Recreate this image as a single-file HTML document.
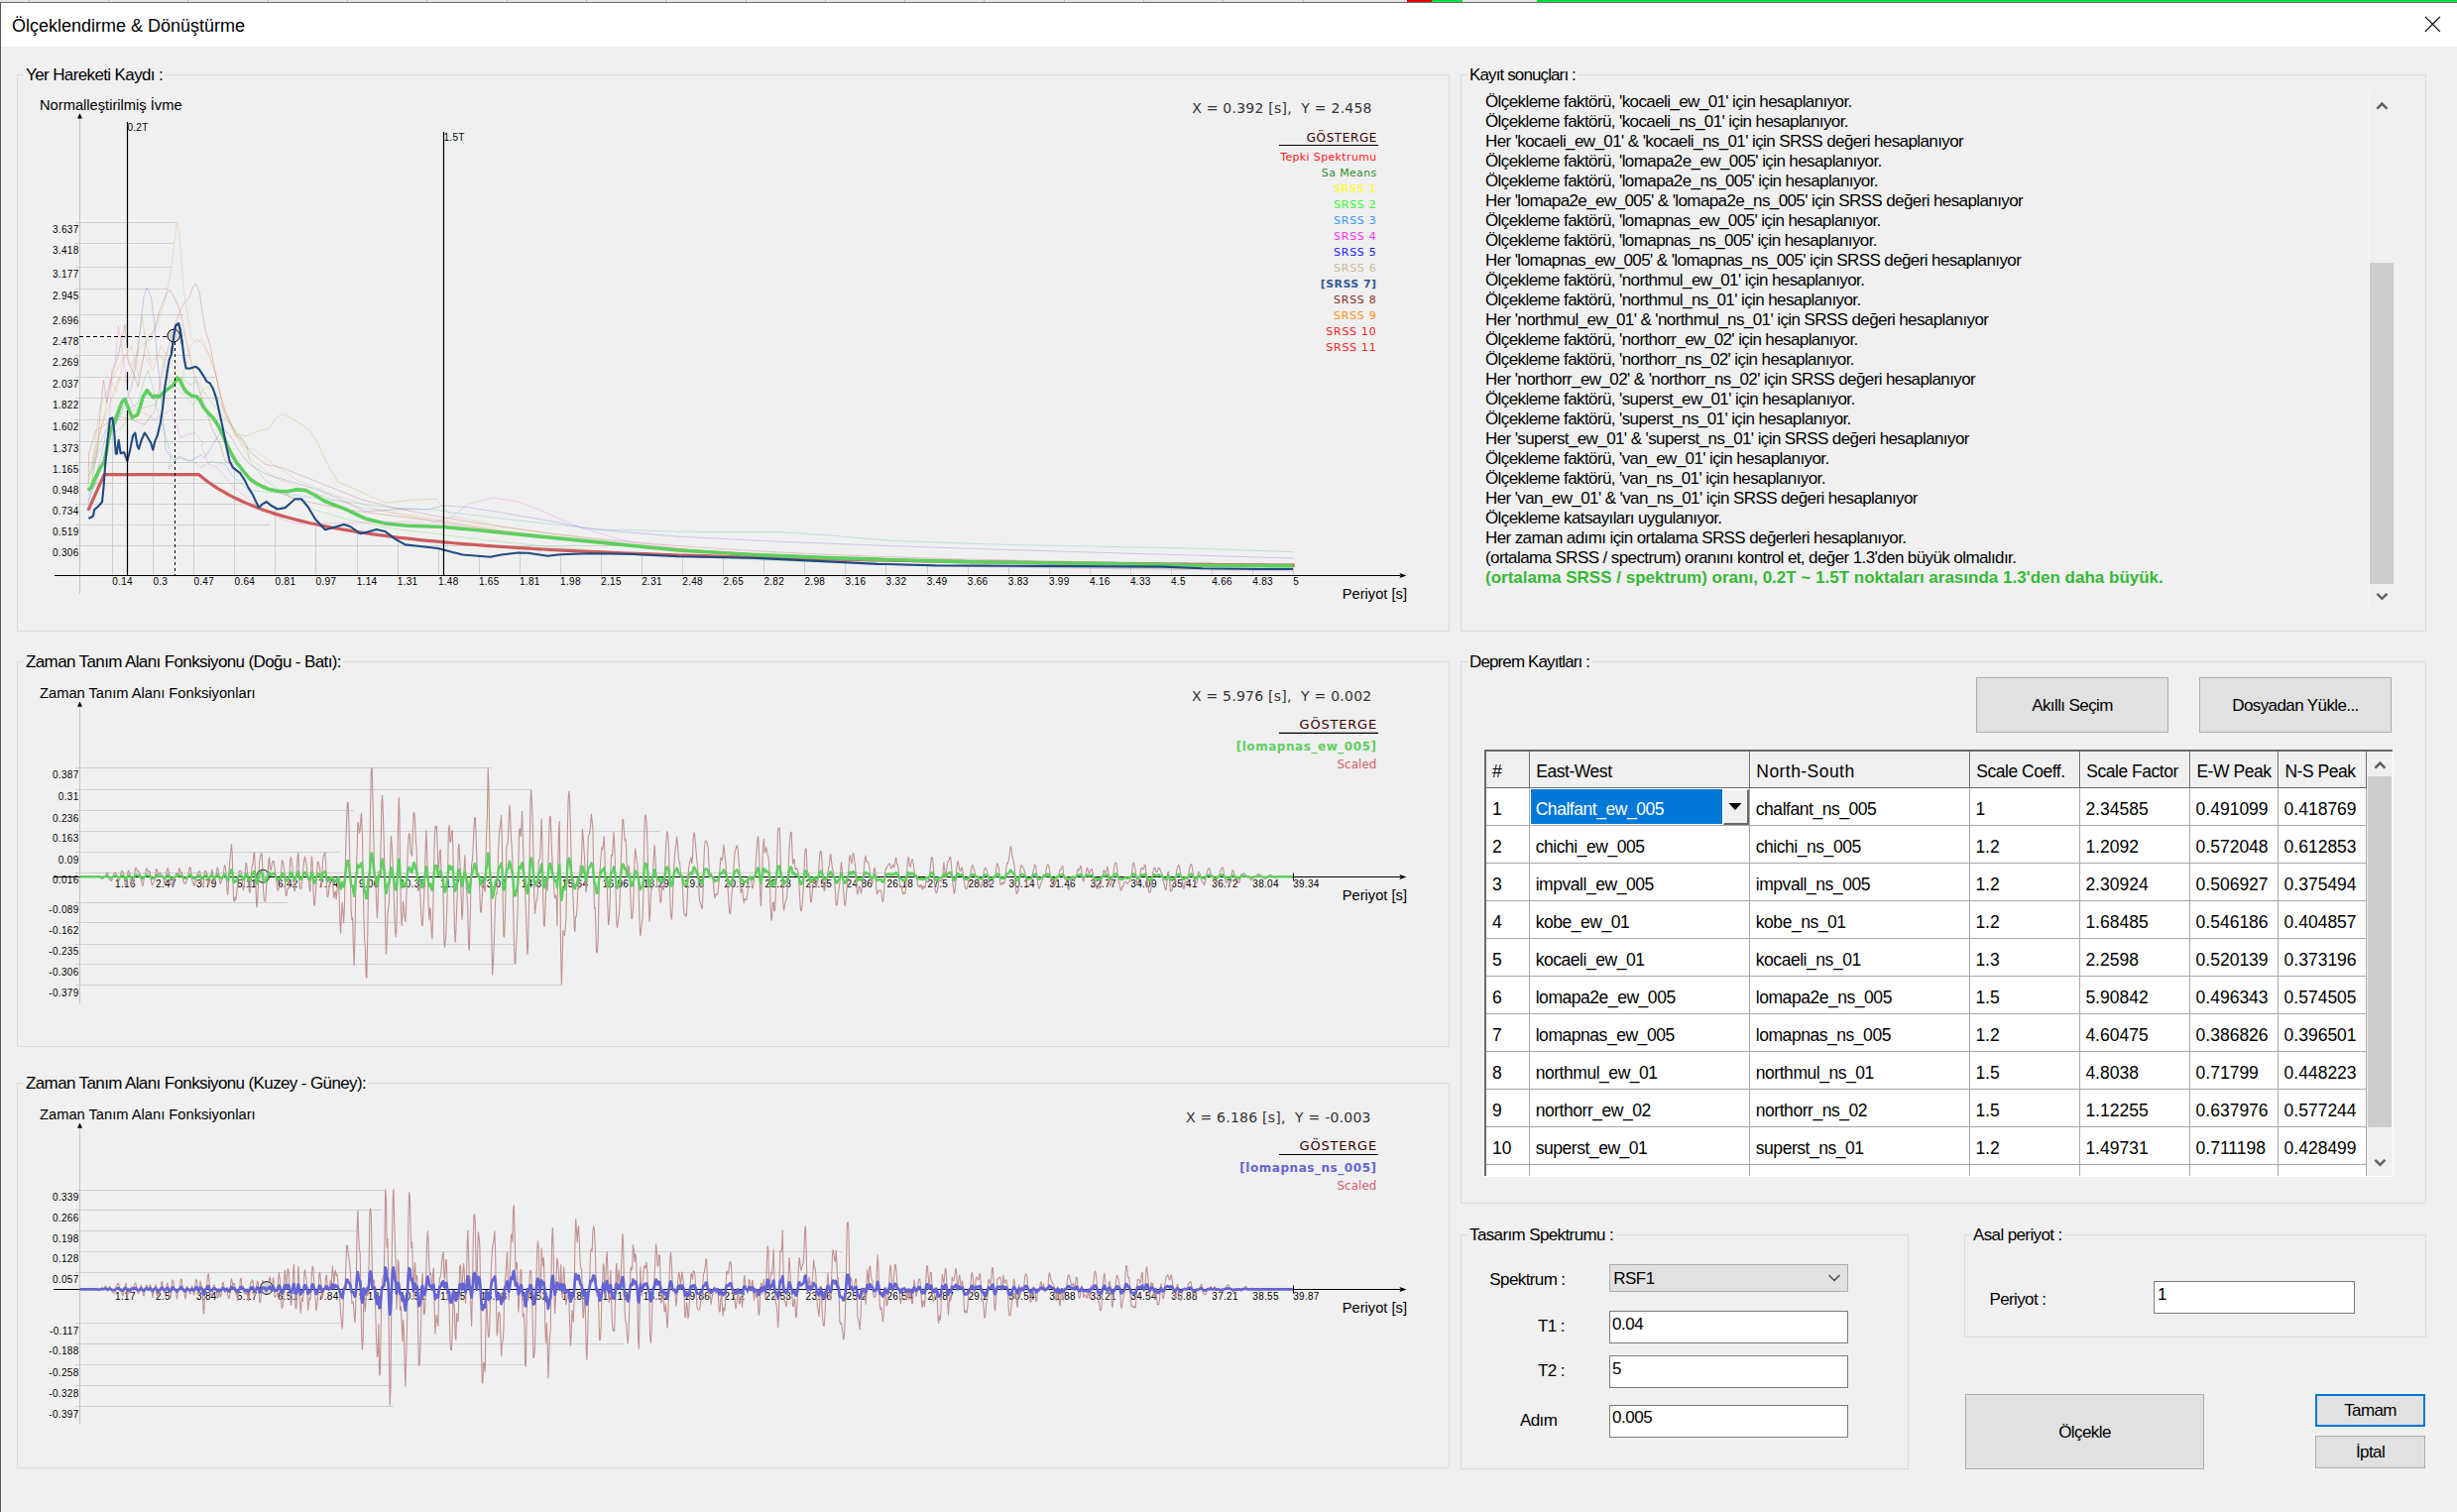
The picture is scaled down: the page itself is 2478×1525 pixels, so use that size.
<!DOCTYPE html>
<html lang="tr"><head><meta charset="utf-8"><title>Ölçeklendirme &amp; Dönüştürme</title>
<style>
html,body{margin:0;padding:0}
body{width:2478px;height:1525px;overflow:hidden;background:#f0f0f0;position:relative;font-family:'Liberation Sans',sans-serif;color:#000}
.t{position:absolute;white-space:pre;margin:0}
.abs,.gb,.btn,.inp,.ln{position:absolute;box-sizing:border-box;margin:0;padding:0}
.gb{border:1px solid #dcdcdc;min-width:0}
.gl{position:absolute;background:#f0f0f0;white-space:pre;font-size:17px;line-height:19px;height:19px;letter-spacing:-0.62px;padding:0 2px 0 2px}
.btn{background:#e1e1e1;border:1px solid #adadad}
.inp{background:#fff;border:1px solid #7a7a7a}
.chart{overflow:hidden}
svg text{white-space:pre}
#log .t{letter-spacing:-0.6px}
#grid{position:absolute;left:1497px;top:756px;width:917px;height:431px;background:#fff;overflow:hidden;box-sizing:border-box}
#grid .c{position:absolute;white-space:pre;font-size:17.5px;line-height:20px;height:20px}
#grid .n{letter-spacing:-0.46px}
.hl{position:absolute;height:1px;background:#a8a8a8}
.vl{position:absolute;width:1px;background:#a8a8a8}
</style></head><body>
<div class="abs" style="left:0;top:0;width:2478px;height:2px;background:#e4e4e4"></div>
<div class="abs" style="left:29px;top:0;width:1px;height:2px;background:#b8b8c0"></div>
<div class="abs" style="left:109px;top:0;width:1px;height:2px;background:#b8b8c0"></div>
<div class="abs" style="left:189px;top:0;width:1px;height:2px;background:#b8b8c0"></div>
<div class="abs" style="left:270px;top:0;width:1px;height:2px;background:#b8b8c0"></div>
<div class="abs" style="left:350px;top:0;width:1px;height:2px;background:#b8b8c0"></div>
<div class="abs" style="left:430px;top:0;width:1px;height:2px;background:#b8b8c0"></div>
<div class="abs" style="left:511px;top:0;width:1px;height:2px;background:#b8b8c0"></div>
<div class="abs" style="left:591px;top:0;width:1px;height:2px;background:#b8b8c0"></div>
<div class="abs" style="left:671px;top:0;width:1px;height:2px;background:#b8b8c0"></div>
<div class="abs" style="left:752px;top:0;width:1px;height:2px;background:#b8b8c0"></div>
<div class="abs" style="left:832px;top:0;width:1px;height:2px;background:#b8b8c0"></div>
<div class="abs" style="left:912px;top:0;width:1px;height:2px;background:#b8b8c0"></div>
<div class="abs" style="left:992px;top:0;width:1px;height:2px;background:#b8b8c0"></div>
<div class="abs" style="left:1073px;top:0;width:1px;height:2px;background:#b8b8c0"></div>
<div class="abs" style="left:1153px;top:0;width:1px;height:2px;background:#b8b8c0"></div>
<div class="abs" style="left:1233px;top:0;width:1px;height:2px;background:#b8b8c0"></div>
<div class="abs" style="left:1314px;top:0;width:1px;height:2px;background:#b8b8c0"></div>
<div class="abs" style="left:1419px;top:0;width:25px;height:2px;background:#e00000"></div>
<div class="abs" style="left:1444px;top:0;width:31px;height:2px;background:#00dc3c"></div>
<div class="abs" style="left:1550px;top:0;width:928px;height:2px;background:#00dc3c"></div>
<div class="abs" style="left:0;top:2px;width:2478px;height:1px;background:#6e6e6e"></div>
<div id="titlebar" class="abs" style="left:1px;top:3px;width:2477px;height:44px;background:#fff"></div>
<div class="t" style="top:16px;font-size:18px;line-height:20px;left:12px;">Ölçeklendirme &amp; Dönüştürme</div>
<svg class="abs" style="left:2440px;top:12px" width="26" height="26" viewBox="0 0 26 26"><path d="M5.9 4.9 L20.9 19.9 M20.9 4.9 L5.9 19.9" stroke="#000" stroke-width="1.25" fill="none"/></svg>
<div class="abs" style="left:0;top:2px;width:1px;height:1523px;background:#5a5a5a"></div>
<div class="gb" style="left:17px;top:75px;width:1445px;height:562px"></div>
<div class="gl" style="left:24px;top:66px">Yer Hareketi Kaydı :</div>
<div class="gb" style="left:1473px;top:75px;width:974px;height:562px"></div>
<div class="gl" style="left:1480px;top:66px;letter-spacing:-0.88px">Kayıt sonuçları :</div>
<div class="gb" style="left:17px;top:667px;width:1445px;height:389px"></div>
<div class="gl" style="left:24px;top:658px">Zaman Tanım Alanı Fonksiyonu (Doğu - Batı):</div>
<div class="gb" style="left:1473px;top:667px;width:974px;height:547px"></div>
<div class="gl" style="left:1480px;top:658px;letter-spacing:-0.88px">Deprem Kayıtları :</div>
<div class="gb" style="left:17px;top:1092px;width:1445px;height:389px"></div>
<div class="gl" style="left:24px;top:1083px">Zaman Tanım Alanı Fonksiyonu (Kuzey - Güney):</div>
<div class="gb" style="left:1473px;top:1245px;width:452px;height:237px"></div>
<div class="gl" style="left:1480px;top:1236px">Tasarım Spektrumu :</div>
<div class="gb" style="left:1981px;top:1245px;width:466px;height:104px"></div>
<div class="gl" style="left:1988px;top:1236px">Asal periyot :</div>
<svg class="chart" style="position:absolute;left:18px;top:84px" width="1443" height="550" viewBox="18 84 1443 550">
<line x1="76" y1="224.5" x2="177" y2="224.5" stroke="#cfcfcf"/>
<line x1="76" y1="245.5" x2="175" y2="245.5" stroke="#cfcfcf"/>
<line x1="76" y1="269.5" x2="173" y2="269.5" stroke="#cfcfcf"/>
<line x1="76" y1="291.5" x2="170" y2="291.5" stroke="#cfcfcf"/>
<line x1="76" y1="317.5" x2="185" y2="317.5" stroke="#cfcfcf"/>
<line x1="76" y1="358.5" x2="193" y2="358.5" stroke="#cfcfcf"/>
<line x1="76" y1="380.5" x2="217" y2="380.5" stroke="#cfcfcf"/>
<line x1="76" y1="401.5" x2="222" y2="401.5" stroke="#cfcfcf"/>
<line x1="76" y1="423.5" x2="227" y2="423.5" stroke="#cfcfcf"/>
<line x1="76" y1="445.5" x2="232" y2="445.5" stroke="#cfcfcf"/>
<line x1="76" y1="466.5" x2="237" y2="466.5" stroke="#cfcfcf"/>
<line x1="76" y1="487.5" x2="246" y2="487.5" stroke="#cfcfcf"/>
<line x1="76" y1="508.5" x2="262" y2="508.5" stroke="#cfcfcf"/>
<line x1="76" y1="529.5" x2="272" y2="529.5" stroke="#cfcfcf"/>
<line x1="76" y1="550.5" x2="646" y2="550.5" stroke="#cfcfcf"/>
<line x1="113.5" y1="423.2" x2="113.5" y2="580" stroke="#cfcfcf"/>
<line x1="154.5" y1="452.0" x2="154.5" y2="580" stroke="#cfcfcf"/>
<line x1="195.5" y1="380.0" x2="195.5" y2="580" stroke="#cfcfcf"/>
<line x1="236.5" y1="473.1" x2="236.5" y2="580" stroke="#cfcfcf"/>
<line x1="277.5" y1="512.3" x2="277.5" y2="580" stroke="#cfcfcf"/>
<line x1="318.5" y1="524.6" x2="318.5" y2="580" stroke="#cfcfcf"/>
<line x1="360.5" y1="535.8" x2="360.5" y2="580" stroke="#cfcfcf"/>
<line x1="401.5" y1="545.1" x2="401.5" y2="580" stroke="#cfcfcf"/>
<line x1="442.5" y1="553.2" x2="442.5" y2="580" stroke="#cfcfcf"/>
<line x1="483.5" y1="560.9" x2="483.5" y2="580" stroke="#cfcfcf"/>
<line x1="524.5" y1="557.6" x2="524.5" y2="580" stroke="#cfcfcf"/>
<line x1="565.5" y1="559.3" x2="565.5" y2="580" stroke="#cfcfcf"/>
<line x1="606.5" y1="558.4" x2="606.5" y2="580" stroke="#cfcfcf"/>
<line x1="647.5" y1="559.5" x2="647.5" y2="580" stroke="#cfcfcf"/>
<line x1="688.5" y1="561.4" x2="688.5" y2="580" stroke="#cfcfcf"/>
<line x1="729.5" y1="562.2" x2="729.5" y2="580" stroke="#cfcfcf"/>
<line x1="770.5" y1="563.3" x2="770.5" y2="580" stroke="#cfcfcf"/>
<line x1="811.5" y1="565.3" x2="811.5" y2="580" stroke="#cfcfcf"/>
<line x1="852.5" y1="567.2" x2="852.5" y2="580" stroke="#cfcfcf"/>
<line x1="893.5" y1="569.0" x2="893.5" y2="580" stroke="#cfcfcf"/>
<line x1="935.5" y1="570.2" x2="935.5" y2="580" stroke="#cfcfcf"/>
<line x1="976.5" y1="570.6" x2="976.5" y2="580" stroke="#cfcfcf"/>
<line x1="1017.5" y1="570.8" x2="1017.5" y2="580" stroke="#cfcfcf"/>
<line x1="1058.5" y1="571.0" x2="1058.5" y2="580" stroke="#cfcfcf"/>
<line x1="1099.5" y1="571.2" x2="1099.5" y2="580" stroke="#cfcfcf"/>
<line x1="1140.5" y1="571.4" x2="1140.5" y2="580" stroke="#cfcfcf"/>
<line x1="1181.5" y1="572.0" x2="1181.5" y2="580" stroke="#cfcfcf"/>
<line x1="1222.5" y1="573.4" x2="1222.5" y2="580" stroke="#cfcfcf"/>
<line x1="1263.5" y1="573.9" x2="1263.5" y2="580" stroke="#cfcfcf"/>
<line x1="1304.5" y1="574.0" x2="1304.5" y2="580" stroke="#cfcfcf"/>
<line x1="80.5" y1="118" x2="80.5" y2="599" stroke="#c4c4c4"/>
<path d="M80.5 114.3 L83 119.5 L78 119.5 Z" fill="#000"/>
<polyline fill="none" stroke="#d2b48c" stroke-opacity="0.36" stroke-width="1" points="88.9,470 91.7,468 94.6,458 99.5,415 109.5,390.2 117.7,373.6 126,357.1 132.6,368.7 142.5,348.8 152.4,342.2 159.1,325.7 165.7,305.8 170.6,282.7 173.9,262.8 176.4,241.3 178.6,224.5 180.6,234.7 182.5,257.9 185.5,292.6 188.8,315.8 193,342.2 198.7,345.5 202.9,342.2 207,348.8 212,362.1 218.6,381.9 225.2,408.4 235.1,431.5 246.7,451.3 256.5,453.7 276.1,468.4 300.5,484.7 333,497.7 381.9,514 440,527 468.8,531.5 497.6,535.6 526.5,539.3 555.3,542.6 584.1,545.6 612.9,548.3 641.7,550.7 670.6,552.8 699.4,554.8 728.2,556.5 757,558.1 785.8,559.5 814.7,560.8 843.5,561.9 872.3,562.9 901.1,563.8 929.9,564.7 958.8,565.4 987.6,566.1 1016.4,566.7 1045.2,567.2 1074,567.7 1102.9,568.1 1131.7,568.5 1160.5,568.9 1189.3,569.2 1218.1,569.5 1247,569.7 1275.8,570 1304.6,570.2"/>
<polyline fill="none" stroke="#5a5ad2" stroke-opacity="0.28" stroke-width="1" points="88.9,505 97.5,485.5 106.1,458 114.4,431.5 122.7,415 132.6,390.2 137.6,365.4 141.7,329 145,299.2 148.3,290.1 152.4,299.2 155.8,325.7 158.2,357.1 161.5,390.2 164,418.3 166.5,444.7 167,453.7 170.2,457.8 175.1,464.3 181.6,460.6 191.4,465.1 202.8,458.9 206.1,461.9 212.6,452.1 219.1,441.5 225.6,432.6 232.1,439.1 240.2,453.7 251.6,468.4 267.9,478.1 317.9,493.2 343.1,503.3 368.3,515.9 406.2,513.4 431.4,513.9 446.5,510.1 469.3,511.3 507.1,517.1 557.6,526 595.4,533.6 683.7,541.1 784.7,546.2 900,550.7 1000,554 1100,557 1200,560 1304.6,563"/>
<polyline fill="none" stroke="#a52a2a" stroke-opacity="0.24" stroke-width="1" points="88.9,480 93.4,473 97.9,458 101.2,415 104.5,383.5 107.8,406.7 112.8,378.6 119.4,357.1 126,327.3 129.3,365.4 134.3,375.3 139.2,390.2 147.5,343.9 155.8,332.3 160.7,314.1 167.3,297.6 171.5,292.3 177.2,302.5 182.2,315.8 188.8,348.8 197.1,381.9 205.4,406.7 213.6,431.5 221.9,448 227.2,465.1 243.5,476.5 267.9,491.2 300.5,504.2 349.3,514 398.2,520.5 440,525.4 468.8,530.2 497.6,534.5 526.5,538.4 555.3,541.9 584.1,545 612.9,547.9 641.7,550.4 670.6,552.7 699.4,554.8 728.2,556.6 757,558.3 785.8,559.8 814.7,561.1 843.5,562.3 872.3,563.4 901.1,564.4 929.9,565.2 958.8,566 987.6,566.7 1016.4,567.4 1045.2,567.9 1074,568.4 1102.9,568.9 1131.7,569.3 1160.5,569.7 1189.3,570 1218.1,570.3 1247,570.6 1275.8,570.8 1304.6,571.1"/>
<polyline fill="none" stroke="#b03030" stroke-opacity="0.24" stroke-width="1" points="88.9,495 89.3,480.5 89.6,458 96.2,434.8 106.1,428.2 119.4,419.9 132.6,423.2 145.8,428.2 155.8,415 165.7,365.4 172.3,340.6 180.6,315.8 185.5,305.8 190.5,300.9 194.6,289.3 197.1,286 201.2,294.3 203.7,312.4 207,332.3 212,348.8 215.3,365.4 220.2,390.2 226.9,415 238.4,439.8 243.5,442.3 251.6,455.4 267.9,468.4 284.2,471.6 308.6,481.4 333,491.2 365.6,504.2 398.2,512.3 440,520.5 468.8,525.6 497.6,530.2 526.5,534.3 555.3,538 584.1,541.4 612.9,544.4 641.7,547.1 670.6,549.5 699.4,551.7 728.2,553.6 757,555.4 785.8,557 814.7,558.4 843.5,559.7 872.3,560.8 901.1,561.8 929.9,562.8 958.8,563.6 987.6,564.3 1016.4,565 1045.2,565.6 1074,566.2 1102.9,566.7 1131.7,567.1 1160.5,567.5 1189.3,567.8 1218.1,568.2 1247,568.5 1275.8,568.7 1304.6,568.9"/>
<polyline fill="none" stroke="#e040e0" stroke-opacity="0.22" stroke-width="1" points="88.9,500 95.9,483 102.8,458 107.8,431.5 111.1,415 112.8,373.6 116.1,365.4 119.4,329 122.7,348.8 126,373.6 129.3,398.4 134.3,408.4 142.5,415 155.8,423.2 172.3,413.3 182.2,441.4 188.8,438.1 197.1,436.5 205.4,448 202.8,448.8 210.9,468.4 219.1,471.6 235.4,491.2 259.8,510.7 284.2,523.7 300.5,528.6 406.2,526 431.4,528.5 456.6,520.9 471.8,508.3 497,502 522.2,505.8 545,514.6 570.2,526 590.4,533.6 633.3,546.2 709,556.3 809.9,565.1 900,568.9 1000,572 1304.6,576"/>
<polyline fill="none" stroke="#b8b040" stroke-opacity="0.32" stroke-width="1" points="88.9,488 91.7,477 94.6,458 102.8,428.2 111.1,406.7 119.4,381.9 129.3,385.2 135.9,367 139.2,348.8 143.3,319.1 147.5,348.8 152.4,365.4 159.1,358.7 164,360.4 169,381.9 177.2,390.2 185.5,398.4 195.4,408.4 205.4,391.8 210.3,390.2 218.6,398.4 230.2,423.2 238.4,438.1 248.4,439.8 259.9,434.8 271.5,432.3 278.1,421.6 284.7,417.4 293,421.6 304.6,428.2 312.8,434.8 321.1,448 324.9,457 333,473.3 341.2,486.3 357.5,492.8 373.7,500.9 390,507.4 414.4,504.2 440,503.4 444,508.3 456.6,520.9 507.1,531 557.6,538.6 633.3,548.7 734.2,557.5 900,565.1 1000,570 1304.6,575"/>
<polyline fill="none" stroke="#40b0b0" stroke-opacity="0.28" stroke-width="1" points="88.9,510 92.6,488 96.2,458 106.1,434.8 114.4,423.2 126,415 139.2,406.7 145.8,381.9 149.1,373.6 154.1,390.2 159.1,415 165.7,434.8 172.3,458 170.2,473.3 178.4,461.9 194.7,465.1 202.8,471.6 212.6,465.1 227.2,468.4 235.4,481.4 251.6,494.4 284.2,497.7 333,504.2 398.2,512.3 440,514 456.6,517.1 532.3,526 608,534.1 709,536.6 784.7,536.6 835.1,539.9 900,545.4 1000,549 1100,551 1200,553 1304.6,556.7"/>
<polyline fill="none" stroke="#40c040" stroke-opacity="0.24" stroke-width="1" points="88.9,497 93.4,481.5 97.9,458 109.5,439.8 122.7,431.5 132.6,415 142.5,411.7 155.8,408.4 165.7,390.2 175.6,381.9 182.2,380.2 192.1,388.5 198.7,383.5 205.4,395.1 215.3,408.4 225.2,419.9 238.4,434.8 248.4,448 251.6,465.1 267.9,484.7 292.3,500.9 316.8,514 349.3,523.7 398.2,533.5 440,538.4 468.8,542.2 497.6,545.6 526.5,548.7 555.3,551.4 584.1,553.9 612.9,556.2 641.7,558.2 670.6,560 699.4,561.6 728.2,563.1 757,564.4 785.8,565.5 814.7,566.6 843.5,567.5 872.3,568.4 901.1,569.2 929.9,569.9 958.8,570.5 987.6,571 1016.4,571.5 1045.2,572 1074,572.4 1102.9,572.8 1131.7,573.1 1160.5,573.4 1189.3,573.7 1218.1,573.9 1247,574.1 1275.8,574.3 1304.6,574.5"/>
<polyline fill="none" stroke="#e09040" stroke-opacity="0.24" stroke-width="1" points="88.9,476 92.6,471 96.2,458 106.1,415 111.1,381.9 117.7,395.1 124.3,363.7 132.6,348.8 139.2,378.6 145.8,357.1 154.1,373.6 162.4,348.8 172.3,365.4 182.2,390.2 192.1,348.8 198.7,342.2 205.4,348.8 212,358.7 218.6,381.9 225.2,415 235.1,434.8 245,451.3 251.6,461.9 276.1,481.4 316.8,497.7 365.6,512.3 440,523.7 468.8,528.8 497.6,533.4 526.5,537.5 555.3,541.2 584.1,544.5 612.9,547.5 641.7,550.2 670.6,552.6 699.4,554.8 728.2,556.7 757,558.4 785.8,560 814.7,561.4 843.5,562.7 872.3,563.9 901.1,564.9 929.9,565.8 958.8,566.6 987.6,567.4 1016.4,568 1045.2,568.6 1074,569.2 1102.9,569.7 1131.7,570.1 1160.5,570.5 1189.3,570.9 1218.1,571.2 1247,571.5 1275.8,571.7 1304.6,572"/>
<polyline fill="none" stroke="#cd5c5c" stroke-width="3.2" stroke-linejoin="round" points="88.9,514.8 105.1,478.6 200.4,478.6 205.3,482.6 210.2,486.2 215.1,489.6 220,492.8 224.9,495.7 229.8,498.5 234.7,501.1 239.6,503.5 244.5,505.8 249.4,507.9 254.3,510 259.2,511.9 264.1,513.7 269,515.4 273.9,517.1 278.8,518.6 283.8,520.1 288.7,521.5 293.6,522.8 298.5,524.1 303.4,525.4 308.3,526.5 313.2,527.7 318.1,528.7 323,529.8 327.9,530.8 332.8,531.7 337.7,532.7 342.6,533.5 347.5,534.4 352.4,535.2 357.3,536 362.2,536.8 367.1,537.5 372,538.2 376.9,538.9 381.8,539.6 386.7,540.2 391.6,540.9 396.5,541.5 401.4,542.1 406.4,542.6 411.3,543.2 416.2,543.7 421.1,544.3 426,544.8 430.9,545.3 435.8,545.7 440.7,546.2 445.6,546.7 450.5,547.1 455.4,547.5 460.3,548 465.2,548.4 470.1,548.8 475,549.2 479.9,549.5 484.8,549.9 489.7,550.3 494.6,550.6 499.5,551 504.4,551.3 509.3,551.6 514.2,552 519.1,552.3 524,552.6 529,552.9 533.9,553.2 538.8,553.5 543.7,553.8 548.6,554 553.5,554.3 558.4,554.6 563.3,554.8 568.2,555.1 573.1,555.3 578,555.6 582.9,555.8 587.8,556.1 592.7,556.3 597.6,556.5 602.5,556.7 607.4,556.9 612.3,557.2 617.2,557.4 622.1,557.6 627,557.8 631.9,558 636.8,558.2 641.7,558.4 646.6,558.6 651.6,558.7 656.5,558.9 661.4,559.1 666.3,559.3 671.2,559.5 676.1,559.6 681,559.8 685.9,560 690.8,560.1 695.7,560.3 700.6,560.4 705.5,560.6 710.4,560.7 715.3,560.9 720.2,561 725.1,561.2 730,561.3 734.9,561.5 739.8,561.6 744.7,561.7 749.6,561.9 754.5,562 759.4,562.1 764.3,562.3 769.2,562.4 774.2,562.5 779.1,562.7 784,562.8 788.9,562.9 793.8,563 798.7,563.1 803.6,563.2 808.5,563.4 813.4,563.5 818.3,563.6 823.2,563.7 828.1,563.8 833,563.9 837.9,564 842.8,564.1 847.7,564.2 852.6,564.3 857.5,564.4 862.4,564.5 867.3,564.6 872.2,564.7 877.1,564.8 882,564.9 886.9,565 891.8,565.1 896.8,565.2 901.7,565.3 906.6,565.4 911.5,565.4 916.4,565.5 921.3,565.6 926.2,565.7 931.1,565.8 936,565.9 940.9,566 945.8,566 950.7,566.1 955.6,566.2 960.5,566.3 965.4,566.3 970.3,566.4 975.2,566.5 980.1,566.6 985,566.6 989.9,566.7 994.8,566.8 999.7,566.9 1004.6,566.9 1009.5,567 1014.4,567.1 1019.4,567.1 1024.3,567.2 1029.2,567.3 1034.1,567.3 1039,567.4 1043.9,567.5 1048.8,567.5 1053.7,567.6 1058.6,567.7 1063.5,567.7 1068.4,567.8 1073.3,567.9 1078.2,567.9 1083.1,568 1088,568 1092.9,568.1 1097.8,568.1 1102.7,568.2 1107.6,568.3 1112.5,568.3 1117.4,568.4 1122.3,568.4 1127.2,568.5 1132.1,568.5 1137,568.6 1142,568.6 1146.9,568.7 1151.8,568.8 1156.7,568.8 1161.6,568.9 1166.5,568.9 1171.4,569 1176.3,569 1181.2,569.1 1186.1,569.1 1191,569.2 1195.9,569.2 1200.8,569.3 1205.7,569.3 1210.6,569.3 1215.5,569.4 1220.4,569.4 1225.3,569.5 1230.2,569.5 1235.1,569.6 1240,569.6 1244.9,569.7 1249.8,569.7 1254.7,569.8 1259.6,569.8 1264.6,569.8 1269.5,569.9 1274.4,569.9 1279.3,570 1284.2,570 1289.1,570.1 1294,570.1 1298.9,570.1 1303.8,570.2 1305.6,570.2"/>
<polyline fill="none" stroke="#5fce5f" stroke-width="3.6" stroke-linejoin="round" points="88.7,494.4 91.9,492.1 95.9,482.5 100.6,473 105.4,465.1 107.8,452.4 111,434.9 115.7,425.4 119.7,414.3 122.9,405.6 126,402.4 129.2,411.1 133.2,421 138.7,418.3 141.1,411.1 144.3,400 148.3,393.7 151.4,397.6 154.6,400.8 157,399.2 160.2,400.3 164.1,396.8 169.7,392.1 175.2,388.1 178.7,381 181.6,383.3 184.8,390.5 187.9,395.2 193.5,399.2 197.5,399.7 201.4,403.2 205.4,411.1 210.2,416.7 214.9,421.4 219.7,428.6 224.4,438.1 229.2,449.2 234,458.7 238.7,466.7 245.1,474.6 251.4,482.5 257.8,487.3 264.1,490.5 270.5,493.3 280,495.2 290.1,495.7 297.7,493.9 307.8,494.4 317.9,499.5 327.9,505.8 348.1,513.4 368.3,523 388.5,528 411.2,530.3 446.5,531.5 481.9,534.8 532.3,539.9 608,547.4 683.7,555 759.4,559.5 835.1,562.6 885.6,564.1 894.2,564.5 986.2,566.9 1116.1,568.5 1210.5,570.2 1304.2,570.9"/>
<polyline fill="none" stroke="#1f4a82" stroke-width="2.1" stroke-linejoin="round" points="89.5,523 94,520.3 95.1,514.3 99,510.8 103,506.3 104.6,490.5 106.2,468.3 108.6,442.9 111,422.2 113.3,421.4 114.9,431.7 116.8,457.1 117.8,457.9 119.7,443.7 121.6,457.1 125.2,456.3 128.4,464.8 130.8,455.6 134,439.7 136.3,436.5 138.4,449.2 140,452.7 142.7,443.7 145.9,436.5 149,441.3 152.2,446.8 154.3,453.7 156.2,445.2 158.6,439.7 161.7,427 164.1,411.1 166.5,388.9 170.5,363.5 172.9,357.1 175.2,339.7 177.1,328.6 180,326.2 181.6,331.7 184,347.6 186,363.5 187.6,371.4 191.1,371.7 197.5,369.8 200.6,372.2 205.4,379.4 208.6,384.9 211.7,386.5 214.9,392.1 218.1,401.6 221.3,415.9 224.4,430.2 228.4,450.8 231.6,465.1 234.8,471.4 238.7,474.6 241.9,477 246.7,484.1 250.6,492.1 254.6,498.4 261,511.9 264.9,508.3 268.9,506 272.9,509.5 280,513.5 287.6,512.1 297.7,503.3 304,503.3 310.3,510.8 317.9,523.5 327.9,534.3 335.5,532.3 346.9,529 353.2,531 363.3,538.1 370.8,536.6 379.7,534.1 388.5,536.1 398.6,543.6 408.7,549.4 421.3,550.7 441.5,553 456.6,557 466.7,559.5 481.9,560.8 494.5,561.8 507.1,559.3 522.2,557.5 532.3,557.8 552.5,560.8 565.1,559.3 595.4,558.3 633.3,558.8 683.7,561.3 759.4,562.8 835.1,566.4 885.6,568.9 894.2,569 943.7,570.4 1045.3,570.9 1172.7,571.6 1212.9,573.2 1271.9,574 1304.2,574"/>
<line x1="55" y1="580.5" x2="1412" y2="580.5" stroke="#000"/>
<path d="M1418.5 580.5 L1411.5 577.9 L1412.5 580.5 L1411.5 583.1 Z" fill="#000"/>
<text x="113.3" y="590.4" font-family="'Liberation Sans',sans-serif" font-size="10" fill="#000" letter-spacing="0.3">0.14</text>
<text x="154.4" y="590.4" font-family="'Liberation Sans',sans-serif" font-size="10" fill="#000" letter-spacing="0.3">0.3</text>
<text x="195.4" y="590.4" font-family="'Liberation Sans',sans-serif" font-size="10" fill="#000" letter-spacing="0.3">0.47</text>
<text x="236.5" y="590.4" font-family="'Liberation Sans',sans-serif" font-size="10" fill="#000" letter-spacing="0.3">0.64</text>
<text x="277.6" y="590.4" font-family="'Liberation Sans',sans-serif" font-size="10" fill="#000" letter-spacing="0.3">0.81</text>
<text x="318.6" y="590.4" font-family="'Liberation Sans',sans-serif" font-size="10" fill="#000" letter-spacing="0.3">0.97</text>
<text x="359.7" y="590.4" font-family="'Liberation Sans',sans-serif" font-size="10" fill="#000" letter-spacing="0.3">1.14</text>
<text x="400.8" y="590.4" font-family="'Liberation Sans',sans-serif" font-size="10" fill="#000" letter-spacing="0.3">1.31</text>
<text x="441.9" y="590.4" font-family="'Liberation Sans',sans-serif" font-size="10" fill="#000" letter-spacing="0.3">1.48</text>
<text x="482.9" y="590.4" font-family="'Liberation Sans',sans-serif" font-size="10" fill="#000" letter-spacing="0.3">1.65</text>
<text x="524.0" y="590.4" font-family="'Liberation Sans',sans-serif" font-size="10" fill="#000" letter-spacing="0.3">1.81</text>
<text x="565.1" y="590.4" font-family="'Liberation Sans',sans-serif" font-size="10" fill="#000" letter-spacing="0.3">1.98</text>
<text x="606.1" y="590.4" font-family="'Liberation Sans',sans-serif" font-size="10" fill="#000" letter-spacing="0.3">2.15</text>
<text x="647.2" y="590.4" font-family="'Liberation Sans',sans-serif" font-size="10" fill="#000" letter-spacing="0.3">2.31</text>
<text x="688.3" y="590.4" font-family="'Liberation Sans',sans-serif" font-size="10" fill="#000" letter-spacing="0.3">2.48</text>
<text x="729.4" y="590.4" font-family="'Liberation Sans',sans-serif" font-size="10" fill="#000" letter-spacing="0.3">2.65</text>
<text x="770.4" y="590.4" font-family="'Liberation Sans',sans-serif" font-size="10" fill="#000" letter-spacing="0.3">2.82</text>
<text x="811.5" y="590.4" font-family="'Liberation Sans',sans-serif" font-size="10" fill="#000" letter-spacing="0.3">2.98</text>
<text x="852.6" y="590.4" font-family="'Liberation Sans',sans-serif" font-size="10" fill="#000" letter-spacing="0.3">3.16</text>
<text x="893.6" y="590.4" font-family="'Liberation Sans',sans-serif" font-size="10" fill="#000" letter-spacing="0.3">3.32</text>
<text x="934.7" y="590.4" font-family="'Liberation Sans',sans-serif" font-size="10" fill="#000" letter-spacing="0.3">3.49</text>
<text x="975.8" y="590.4" font-family="'Liberation Sans',sans-serif" font-size="10" fill="#000" letter-spacing="0.3">3.66</text>
<text x="1016.8" y="590.4" font-family="'Liberation Sans',sans-serif" font-size="10" fill="#000" letter-spacing="0.3">3.83</text>
<text x="1057.9" y="590.4" font-family="'Liberation Sans',sans-serif" font-size="10" fill="#000" letter-spacing="0.3">3.99</text>
<text x="1099.0" y="590.4" font-family="'Liberation Sans',sans-serif" font-size="10" fill="#000" letter-spacing="0.3">4.16</text>
<text x="1140.0" y="590.4" font-family="'Liberation Sans',sans-serif" font-size="10" fill="#000" letter-spacing="0.3">4.33</text>
<text x="1181.1" y="590.4" font-family="'Liberation Sans',sans-serif" font-size="10" fill="#000" letter-spacing="0.3">4.5</text>
<text x="1222.2" y="590.4" font-family="'Liberation Sans',sans-serif" font-size="10" fill="#000" letter-spacing="0.3">4.66</text>
<text x="1263.3" y="590.4" font-family="'Liberation Sans',sans-serif" font-size="10" fill="#000" letter-spacing="0.3">4.83</text>
<text x="1304.3" y="590.4" font-family="'Liberation Sans',sans-serif" font-size="10" fill="#000" letter-spacing="0.3">5</text>
<text x="79.5" y="235.2" font-family="'Liberation Sans',sans-serif" font-size="10" fill="#000" text-anchor="end" letter-spacing="0.3">3.637</text>
<text x="79.5" y="255.7" font-family="'Liberation Sans',sans-serif" font-size="10" fill="#000" text-anchor="end" letter-spacing="0.3">3.418</text>
<text x="79.5" y="279.7" font-family="'Liberation Sans',sans-serif" font-size="10" fill="#000" text-anchor="end" letter-spacing="0.3">3.177</text>
<text x="79.5" y="302.0" font-family="'Liberation Sans',sans-serif" font-size="10" fill="#000" text-anchor="end" letter-spacing="0.3">2.945</text>
<text x="79.5" y="327.3" font-family="'Liberation Sans',sans-serif" font-size="10" fill="#000" text-anchor="end" letter-spacing="0.3">2.696</text>
<text x="79.5" y="369.1" font-family="'Liberation Sans',sans-serif" font-size="10" fill="#000" text-anchor="end" letter-spacing="0.3">2.269</text>
<text x="79.5" y="390.9" font-family="'Liberation Sans',sans-serif" font-size="10" fill="#000" text-anchor="end" letter-spacing="0.3">2.037</text>
<text x="79.5" y="411.9" font-family="'Liberation Sans',sans-serif" font-size="10" fill="#000" text-anchor="end" letter-spacing="0.3">1.822</text>
<text x="79.5" y="434.0" font-family="'Liberation Sans',sans-serif" font-size="10" fill="#000" text-anchor="end" letter-spacing="0.3">1.602</text>
<text x="79.5" y="455.8" font-family="'Liberation Sans',sans-serif" font-size="10" fill="#000" text-anchor="end" letter-spacing="0.3">1.373</text>
<text x="79.5" y="477.0" font-family="'Liberation Sans',sans-serif" font-size="10" fill="#000" text-anchor="end" letter-spacing="0.3">1.165</text>
<text x="79.5" y="498.1" font-family="'Liberation Sans',sans-serif" font-size="10" fill="#000" text-anchor="end" letter-spacing="0.3">0.948</text>
<text x="79.5" y="519.0" font-family="'Liberation Sans',sans-serif" font-size="10" fill="#000" text-anchor="end" letter-spacing="0.3">0.734</text>
<text x="79.5" y="540.1" font-family="'Liberation Sans',sans-serif" font-size="10" fill="#000" text-anchor="end" letter-spacing="0.3">0.519</text>
<text x="79.5" y="561.0" font-family="'Liberation Sans',sans-serif" font-size="10" fill="#000" text-anchor="end" letter-spacing="0.3">0.306</text>
<text x="79.5" y="348.0" font-family="'Liberation Sans',sans-serif" font-size="10" fill="#000" text-anchor="end" letter-spacing="0.3">2.478</text>
<line x1="128.5" y1="123" x2="128.5" y2="351" stroke="#000" stroke-width="1.2"/>
<line x1="128.5" y1="375" x2="128.5" y2="393.5" stroke="#000" stroke-width="1.2"/>
<line x1="128.5" y1="414" x2="128.5" y2="580" stroke="#000" stroke-width="1.2"/>
<line x1="447.5" y1="133" x2="447.5" y2="580" stroke="#000" stroke-width="1.2"/>
<text x="128.4" y="132" font-family="'Liberation Sans',sans-serif" font-size="10" fill="#000" letter-spacing="0.3">0.2T</text>
<text x="447.5" y="142" font-family="'Liberation Sans',sans-serif" font-size="10" fill="#000" letter-spacing="0.3">1.5T</text>
<line x1="80" y1="339.5" x2="169" y2="339.5" stroke="#000" stroke-dasharray="4 3"/>
<line x1="176.5" y1="345" x2="176.5" y2="580" stroke="#000" stroke-dasharray="3 3"/>
<circle cx="175.2" cy="338.5" r="6.3" fill="#d4d4d4" fill-opacity="0.85" stroke="#000"/>
<polyline fill="none" stroke="#1f4a82" stroke-width="2.1" stroke-linejoin="round" points="172.9,357.1 175.2,339.7 177.1,328.6 180,326.2 181.6,331.7 184,347.6"/>
<text x="40" y="110.5" font-family="'Liberation Sans',sans-serif" font-size="14.7" fill="#000">Normalleştirilmiş İvme</text>
<text x="1419" y="604" font-family="'Liberation Sans',sans-serif" font-size="14.7" fill="#000" text-anchor="end">Periyot [s]</text>
<text x="1202.2" y="113.7" font-family="'DejaVu Sans',sans-serif" font-size="14" fill="#333" letter-spacing="0.24" xml:space="preserve">X = 0.392 [s],  Y = 2.458</text>
<text x="1389" y="142.8" font-family="'DejaVu Sans',sans-serif" font-size="12" fill="#3a0000" text-anchor="end" letter-spacing="0.6">GÖSTERGE</text>
<line x1="1290" y1="146.5" x2="1390" y2="146.5" stroke="#000" stroke-width="1.2"/>
<text x="1388.6" y="161.9" font-family="'DejaVu Sans',sans-serif" font-size="11" fill="#ff2020" text-anchor="end" letter-spacing="0.35">Tepki Spektrumu</text>
<text x="1388.6" y="177.9" font-family="'DejaVu Sans',sans-serif" font-size="11" fill="#2e8b2e" text-anchor="end" letter-spacing="0.35">Sa Means</text>
<text x="1388.6" y="193.9" font-family="'DejaVu Sans',sans-serif" font-size="11" fill="#ffff00" text-anchor="end" letter-spacing="0.75">SRSS 1</text>
<text x="1388.6" y="209.9" font-family="'DejaVu Sans',sans-serif" font-size="11" fill="#2dff2d" text-anchor="end" letter-spacing="0.75">SRSS 2</text>
<text x="1388.6" y="225.8" font-family="'DejaVu Sans',sans-serif" font-size="11" fill="#3c96ff" text-anchor="end" letter-spacing="0.75">SRSS 3</text>
<text x="1388.6" y="241.8" font-family="'DejaVu Sans',sans-serif" font-size="11" fill="#ff30ff" text-anchor="end" letter-spacing="0.75">SRSS 4</text>
<text x="1388.6" y="257.8" font-family="'DejaVu Sans',sans-serif" font-size="11" fill="#2020ff" text-anchor="end" letter-spacing="0.75">SRSS 5</text>
<text x="1388.6" y="273.8" font-family="'DejaVu Sans',sans-serif" font-size="11" fill="#cbb9a0" text-anchor="end" letter-spacing="0.75">SRSS 6</text>
<text x="1388.6" y="289.8" font-family="'DejaVu Sans',sans-serif" font-size="11" fill="#2f5b8f" text-anchor="end" font-weight="bold" letter-spacing="0.45">[SRSS 7]</text>
<text x="1388.6" y="305.8" font-family="'DejaVu Sans',sans-serif" font-size="11" fill="#8b2a2a" text-anchor="end" letter-spacing="0.75">SRSS 8</text>
<text x="1388.6" y="321.8" font-family="'DejaVu Sans',sans-serif" font-size="11" fill="#ff9020" text-anchor="end" letter-spacing="0.75">SRSS 9</text>
<text x="1388.6" y="337.7" font-family="'DejaVu Sans',sans-serif" font-size="11" fill="#ff2020" text-anchor="end" letter-spacing="0.75">SRSS 10</text>
<text x="1388.6" y="353.7" font-family="'DejaVu Sans',sans-serif" font-size="11" fill="#ff2020" text-anchor="end" letter-spacing="0.75">SRSS 11</text>
</svg>
<svg class="chart" style="position:absolute;left:18px;top:678px" width="1443" height="378" viewBox="18 678 1443 378">
<line x1="76" y1="774.5" x2="496" y2="774.5" stroke="#cfcfcf"/>
<line x1="76" y1="796.5" x2="535" y2="796.5" stroke="#cfcfcf"/>
<line x1="76" y1="817.5" x2="357" y2="817.5" stroke="#cfcfcf"/>
<line x1="76" y1="838.5" x2="666" y2="838.5" stroke="#cfcfcf"/>
<line x1="76" y1="859.5" x2="343" y2="859.5" stroke="#cfcfcf"/>
<line x1="76" y1="880.5" x2="903" y2="880.5" stroke="#cfcfcf"/>
<line x1="76" y1="910.5" x2="290" y2="910.5" stroke="#cfcfcf"/>
<line x1="76" y1="930.5" x2="404" y2="930.5" stroke="#cfcfcf"/>
<line x1="76" y1="952.5" x2="518" y2="952.5" stroke="#cfcfcf"/>
<line x1="76" y1="972.5" x2="518" y2="972.5" stroke="#cfcfcf"/>
<line x1="76" y1="993.5" x2="566" y2="993.5" stroke="#cfcfcf"/>
<line x1="80.5" y1="711.9" x2="80.5" y2="1012.3" stroke="#c4c4c4"/>
<path d="M80.5 707.5 L83 712.6999999999999 L78 712.6999999999999 Z" fill="#000"/>
<line x1="54" y1="884.5" x2="1412" y2="884.5" stroke="#000"/>
<path d="M1418.5 884.5 L1411.5 881.9 L1412.5 884.5 L1411.5 887.1 Z" fill="#000"/>
<line x1="1304.5" y1="880.5" x2="1304.5" y2="888.5" stroke="#000"/>
<text x="116.1" y="894.5" font-family="'Liberation Sans',sans-serif" font-size="10" fill="#000" letter-spacing="0.3">1.16</text>
<text x="157.1" y="894.5" font-family="'Liberation Sans',sans-serif" font-size="10" fill="#000" letter-spacing="0.3">2.47</text>
<text x="198.0" y="894.5" font-family="'Liberation Sans',sans-serif" font-size="10" fill="#000" letter-spacing="0.3">3.79</text>
<text x="239.0" y="894.5" font-family="'Liberation Sans',sans-serif" font-size="10" fill="#000" letter-spacing="0.3">5.11</text>
<text x="280.0" y="894.5" font-family="'Liberation Sans',sans-serif" font-size="10" fill="#000" letter-spacing="0.3">6.42</text>
<text x="320.9" y="894.5" font-family="'Liberation Sans',sans-serif" font-size="10" fill="#000" letter-spacing="0.3">7.74</text>
<text x="361.9" y="894.5" font-family="'Liberation Sans',sans-serif" font-size="10" fill="#000" letter-spacing="0.3">9.06</text>
<text x="402.9" y="894.5" font-family="'Liberation Sans',sans-serif" font-size="10" fill="#000" letter-spacing="0.3">10.38</text>
<text x="443.9" y="894.5" font-family="'Liberation Sans',sans-serif" font-size="10" fill="#000" letter-spacing="0.3">11.7</text>
<text x="484.8" y="894.5" font-family="'Liberation Sans',sans-serif" font-size="10" fill="#000" letter-spacing="0.3">13.01</text>
<text x="525.8" y="894.5" font-family="'Liberation Sans',sans-serif" font-size="10" fill="#000" letter-spacing="0.3">14.33</text>
<text x="566.8" y="894.5" font-family="'Liberation Sans',sans-serif" font-size="10" fill="#000" letter-spacing="0.3">15.64</text>
<text x="607.7" y="894.5" font-family="'Liberation Sans',sans-serif" font-size="10" fill="#000" letter-spacing="0.3">16.96</text>
<text x="648.7" y="894.5" font-family="'Liberation Sans',sans-serif" font-size="10" fill="#000" letter-spacing="0.3">18.29</text>
<text x="689.7" y="894.5" font-family="'Liberation Sans',sans-serif" font-size="10" fill="#000" letter-spacing="0.3">19.6</text>
<text x="730.6" y="894.5" font-family="'Liberation Sans',sans-serif" font-size="10" fill="#000" letter-spacing="0.3">20.91</text>
<text x="771.6" y="894.5" font-family="'Liberation Sans',sans-serif" font-size="10" fill="#000" letter-spacing="0.3">22.23</text>
<text x="812.6" y="894.5" font-family="'Liberation Sans',sans-serif" font-size="10" fill="#000" letter-spacing="0.3">23.55</text>
<text x="853.6" y="894.5" font-family="'Liberation Sans',sans-serif" font-size="10" fill="#000" letter-spacing="0.3">24.86</text>
<text x="894.5" y="894.5" font-family="'Liberation Sans',sans-serif" font-size="10" fill="#000" letter-spacing="0.3">26.18</text>
<text x="935.5" y="894.5" font-family="'Liberation Sans',sans-serif" font-size="10" fill="#000" letter-spacing="0.3">27.5</text>
<text x="976.5" y="894.5" font-family="'Liberation Sans',sans-serif" font-size="10" fill="#000" letter-spacing="0.3">28.82</text>
<text x="1017.4" y="894.5" font-family="'Liberation Sans',sans-serif" font-size="10" fill="#000" letter-spacing="0.3">30.14</text>
<text x="1058.4" y="894.5" font-family="'Liberation Sans',sans-serif" font-size="10" fill="#000" letter-spacing="0.3">31.46</text>
<text x="1099.4" y="894.5" font-family="'Liberation Sans',sans-serif" font-size="10" fill="#000" letter-spacing="0.3">32.77</text>
<text x="1140.3" y="894.5" font-family="'Liberation Sans',sans-serif" font-size="10" fill="#000" letter-spacing="0.3">34.09</text>
<text x="1181.3" y="894.5" font-family="'Liberation Sans',sans-serif" font-size="10" fill="#000" letter-spacing="0.3">35.41</text>
<text x="1222.3" y="894.5" font-family="'Liberation Sans',sans-serif" font-size="10" fill="#000" letter-spacing="0.3">36.72</text>
<text x="1263.3" y="894.5" font-family="'Liberation Sans',sans-serif" font-size="10" fill="#000" letter-spacing="0.3">38.04</text>
<text x="1304.2" y="894.5" font-family="'Liberation Sans',sans-serif" font-size="10" fill="#000" letter-spacing="0.3">39.34</text>
<polyline fill="none" stroke="#c09292" stroke-width="1.1" stroke-linejoin="bevel" points="80.4,884.3 81.2,884.3 81.9,884.3 82.6,884.4 83.4,884.4 84.2,884.3 84.9,884.3 85.6,884.2 86.4,884.2 87.2,884.1 87.9,884 88.6,883.9 89.4,883.9 90.2,884.1 90.9,884.2 91.6,884.2 92.4,884.4 93.2,884.6 93.9,884.7 94.6,884.8 95.4,884.7 96.2,884.4 96.9,884.1 97.6,883.9 98.4,883.7 99.2,883.6 99.9,884.4 100.6,885.1 101.4,885.2 102.2,885.4 102.9,886.4 103.6,886.4 104.4,885.2 105.2,884.6 105.9,884.3 106.6,882.8 107.4,880.3 108.2,879.7 108.9,881.9 109.6,885.2 110.4,887.5 111.2,887.6 111.9,887.5 112.6,888.7 113.4,885.6 114.2,883.3 114.9,881.6 115.6,879.7 116.4,880 117.2,881.5 117.9,883.4 118.6,885.7 119.4,887.9 120.2,888.1 120.9,886.8 121.6,883.7 122.4,879.1 123.2,878.4 123.9,879.3 124.6,880.7 125.4,887.3 126.2,892.4 126.9,893.5 127.6,890 128.4,883.7 129.2,878.6 129.9,877.9 130.6,880.3 131.4,883.7 132.2,890.4 132.9,893.5 133.6,890.7 134.4,889 135.2,886.5 135.9,880 136.6,875.6 137.4,875.4 138.2,878 138.9,879.3 139.6,878.2 140.4,879.3 141.2,882 141.9,884.4 142.6,888.3 143.4,892.4 144.2,893.3 144.9,889 145.6,884.3 146.4,883.7 147.2,878.5 147.9,875.7 148.6,877.5 149.4,879.6 150.2,878.6 150.9,878.1 151.6,882.3 152.4,888.4 153.2,892.5 153.9,892.4 154.6,890 155.4,889 156.2,887 156.9,881.3 157.6,876.5 158.4,877.2 159.2,881.3 159.9,882 160.6,881.1 161.4,879.9 162.2,881.2 162.9,882.2 163.6,883.5 164.4,884.6 165.2,887.5 165.9,891.9 166.6,891.4 167.4,884.8 168.2,878.4 168.9,875.7 169.6,876.3 170.4,880.1 171.2,885.1 171.9,890 172.6,892.4 173.4,892 174.2,890 174.9,887.2 175.6,887.1 176.4,887.1 177.2,882.6 177.9,880.1 178.6,881.8 179.4,882.9 180.2,878.4 180.9,875.1 181.6,878.2 182.4,880.6 183.2,879.3 183.9,882.7 184.6,887.5 185.4,890 186.2,891.1 186.9,891.6 187.6,890.3 188.4,887.4 189.2,885.6 189.9,883.5 190.6,878.1 191.4,874.3 192.2,875.6 192.9,880.7 193.6,887.4 194.4,890.4 195.2,889.3 195.9,893.3 196.6,893.5 197.4,888.1 198.2,883.9 198.9,882.2 199.6,880.4 200.4,879.1 201.2,878.8 201.9,879.8 202.6,885.8 203.4,892.7 204.2,892.7 204.9,892.4 205.6,887.2 206.4,879 207.2,878 207.9,879.3 208.6,880.7 209.4,887.7 210.2,892.8 210.9,890.2 211.6,886.1 212.4,883 213.2,880.7 213.9,876.9 214.6,881.5 215.4,890.4 216.2,891.6 216.9,887.4 217.6,884.5 218.4,880.2 219.2,874.8 219.9,876.1 220.6,881.7 221.4,887.7 222.2,891.5 222.9,890.3 223.6,887.9 224.4,886.6 225.2,883.2 225.9,875.6 226.6,872.4 227.4,875.1 228.2,883.1 228.9,896.7 229.6,902.8 230.4,894 231.2,876.6 231.9,866.9 232.6,861.2 233.4,851.3 234.2,860.8 234.9,886.7 235.6,906.6 236.4,909.7 237.2,904.5 237.9,907.5 238.6,901.9 239.4,894.2 240.2,886.6 240.9,880.3 241.6,878.2 242.4,878.1 243.2,879.1 243.9,884.2 244.6,892 245.4,898.2 246.2,892.1 246.9,882.9 247.6,874.3 248.4,870 249.2,875.4 249.9,886.9 250.6,893.4 251.4,899.2 252.2,900.5 252.9,890 253.6,879.9 254.4,873 255.2,869.8 255.9,860.7 256.6,859.7 257.4,878.1 258.2,902.4 258.9,915.3 259.6,910.3 260.4,893.6 261.2,877.3 261.9,867.4 262.6,863.9 263.4,860.5 264.2,862.1 264.9,877.2 265.6,898.7 266.4,907.5 267.2,909.3 267.9,908.7 268.6,894.5 269.4,887.6 270.2,880.2 270.9,868.4 271.6,864.4 272.4,874.4 273.2,878.1 273.9,873.9 274.6,869.9 275.4,867.9 276.2,869.1 276.9,875.2 277.6,880 278.4,884.7 279.2,893.2 279.9,898.1 280.6,897.7 281.4,895.3 282.2,894.5 282.9,891.3 283.6,879.3 284.4,867.7 285.2,868.7 285.9,871.8 286.6,876.4 287.4,891 288.2,902.2 288.9,903.9 289.6,898.7 290.4,895.3 291.2,896.4 291.9,885.5 292.6,868.3 293.4,864.1 294.2,868.9 294.9,875 295.6,883 296.4,894.5 297.2,899.3 297.9,893.9 298.6,885.4 299.4,876 300.2,864 300.9,859.8 301.6,878.1 302.4,895.9 303.2,896.3 303.9,895.6 304.6,890.1 305.4,880.9 306.2,873.4 306.9,866.6 307.6,863.5 308.4,868.4 309.2,873.5 309.9,880.4 310.6,886.3 311.4,888.6 312.2,896.8 312.9,899.6 313.6,876.2 314.4,863.5 315.2,871.1 315.9,894.2 316.6,911.3 317.4,913.7 318.2,903.6 318.9,891.9 319.6,879.8 320.4,869.2 321.2,869.3 321.9,872.4 322.6,875.8 323.4,885.8 324.2,895.5 324.9,882.6 325.6,867.3 326.4,862.7 327.2,861.3 327.9,859.8 328.6,870.1 329.4,890.2 330.2,904.7 330.9,904.5 331.6,898.8 332.4,893.3 333.2,887.9 333.9,886.3 334.6,885.5 335.4,886.4 336.2,899.4 336.9,906 337.6,901.5 338.4,899 339.2,907.4 339.9,899.4 340.6,892.4 341.4,888 342.2,905.8 342.9,932.5 343.6,941.4 344.4,924.1 345.2,909.7 345.9,919.2 346.6,931.2 347.4,915.4 348.2,877.1 348.9,848.9 349.6,827.9 350.4,809.3 351.2,809.9 351.9,829.9 352.6,858.1 353.4,888.6 354.2,918.6 354.9,928 355.6,925.2 356.4,955.7 357.2,974.1 357.9,947.5 358.6,904.9 359.4,876.8 360.2,854.1 360.9,829.4 361.6,830.6 362.4,840.5 363.2,837.5 363.9,825.4 364.6,819.8 365.4,842.6 366.2,884.5 366.9,924.1 367.6,946.8 368.4,956.7 369.2,984.8 369.9,986.2 370.6,951 371.4,905.2 372.2,883 372.9,863.1 373.6,817 374.4,776.6 375.2,774.3 375.9,800.2 376.6,833.5 377.4,868.3 378.2,886.5 378.9,886.5 379.6,909.7 380.4,926.3 381.2,909.7 381.9,878.7 382.6,879.2 383.4,879.8 384.2,849.2 384.9,810.1 385.6,801.9 386.4,821.8 387.2,849.3 387.9,875.5 388.6,931.8 389.4,962.5 390.2,949 390.9,922.6 391.6,916.4 392.4,910.7 393.2,883.4 393.9,853.3 394.6,843.1 395.4,856.3 396.2,875 396.9,889.5 397.6,912.8 398.4,934.1 399.2,945.3 399.9,938.7 400.6,898.5 401.4,840.1 402.2,804.4 402.9,819.7 403.6,873 404.4,918.2 405.2,933.9 405.9,922.6 406.6,908.8 407.4,916.2 408.2,925.9 408.9,929.6 409.6,916.7 410.4,886.7 411.2,860.5 411.9,846 412.6,840 413.4,844.4 414.2,859.8 414.9,861.1 415.6,863.6 416.4,839 417.2,819.4 417.9,820.2 418.6,829.6 419.4,848 420.2,856.1 420.9,883.8 421.6,898.9 422.4,896.4 423.2,893.4 423.9,901.4 424.6,918.5 425.4,933 426.2,933.7 426.9,921.3 427.6,905.4 428.4,888.4 429.2,852.8 429.9,837.3 430.6,857.4 431.4,885.2 432.2,916.2 432.9,928.5 433.6,915.4 434.4,919.1 435.2,940.8 435.9,947.1 436.6,926.2 437.4,885.9 438.2,849.2 438.9,833.3 439.6,835.5 440.4,832.9 441.2,854.6 441.9,876.8 442.6,876.2 443.4,859.7 444.2,856.6 444.9,876.8 445.6,881 446.4,884.8 447.2,908.2 447.9,950 448.6,955.8 449.4,948.4 450.2,932.3 450.9,910.5 451.6,880 452.4,836.4 453.2,832.3 453.9,849.6 454.6,849 455.4,839.4 456.2,837.2 456.9,856.9 457.6,897.5 458.4,936.1 459.2,950.7 459.9,938 460.6,917.4 461.4,896.8 462.2,856.1 462.9,851.1 463.6,864.2 464.4,880.6 465.2,905.9 465.9,927.7 466.6,921.6 467.4,889.9 468.2,874.4 468.9,862.4 469.6,879.5 470.4,896.1 471.2,905.1 471.9,921.3 472.6,954.3 473.4,958.5 474.2,927.8 474.9,894.1 475.6,872.2 476.4,867.6 477.2,853 477.9,836.9 478.6,824.6 479.4,824.8 480.2,845.6 480.9,871.1 481.6,881 482.4,881.2 483.2,883.1 483.9,902.2 484.6,919.5 485.4,920.4 486.2,906.1 486.9,892.5 487.6,890 488.4,896.1 489.2,899.7 489.9,867.2 490.6,843.5 491.4,822.5 492.2,774.3 492.9,792.5 493.6,834 494.4,874.7 495.2,912.1 495.9,949 496.6,983.5 497.4,971.2 498.2,952.4 498.9,931.2 499.6,908.5 500.4,900.9 501.2,901.7 501.9,882.3 502.6,857.2 503.4,841.7 504.2,834.8 504.9,829.2 505.6,822 506.4,850.4 507.2,909.6 507.9,944.1 508.6,945.3 509.4,925 510.2,885.3 510.9,853.7 511.6,852.2 512.4,847.5 513.2,825.9 513.9,811.9 514.6,820.9 515.4,843.6 516.2,855.3 516.9,867.5 517.6,909.1 518.4,953.2 519.2,972.3 519.9,972 520.6,953.4 521.4,937.5 522.2,915.5 522.9,870.6 523.6,837.4 524.4,835.5 525.2,844 525.9,834.3 526.6,818 527.4,847.1 528.2,872.5 528.9,886.9 529.6,899.4 530.4,917.9 531.2,943 531.9,962.7 532.6,956.3 533.4,916.5 534.2,860.1 534.9,811.7 535.6,796.3 536.4,808.2 537.2,829.6 537.9,861.1 538.6,897.1 539.4,921.6 540.2,915.4 540.9,908.6 541.6,907.9 542.4,899.7 543.2,869 543.9,867.3 544.6,864.2 545.4,845.1 546.2,825.6 546.9,853.1 547.6,900.1 548.4,932.6 549.2,934.8 549.9,918.3 550.6,899.3 551.4,887.3 552.2,898.6 552.9,871.1 553.6,845.6 554.4,823.6 555.2,823.7 555.9,840 556.6,861.3 557.4,876.5 558.2,885.2 558.9,897.7 559.6,906.1 560.4,902.5 561.2,906 561.9,934.2 562.6,885.6 563.4,840.2 564.2,828.1 564.9,883.7 565.6,961.3 566.4,993.3 567.2,967.1 567.9,938.1 568.6,941.5 569.4,943.6 570.2,935.6 570.9,927.7 571.6,888.1 572.4,833.8 573.2,804.5 573.9,797.8 574.6,807.6 575.4,835.8 576.2,867.7 576.9,886.9 577.6,897.7 578.4,914.8 579.2,936 579.9,939.8 580.6,924.5 581.4,924 582.2,911.6 582.9,893.6 583.6,897.2 584.4,885.6 585.2,872.8 585.9,879.2 586.6,864.3 587.4,835.9 588.2,844.3 588.9,855.9 589.6,866.8 590.4,890.6 591.2,900.3 591.9,889.4 592.6,868.1 593.4,842.8 594.2,842 594.9,838.9 595.6,832.2 596.4,820.9 597.2,828.4 597.9,835.6 598.6,875.1 599.4,916.2 600.2,914.7 600.9,937.5 601.6,960.8 602.4,960.1 603.2,947.9 603.9,907.8 604.6,883.4 605.4,874 606.2,862 606.9,854.6 607.6,857.3 608.4,851.6 609.2,843.3 609.9,860.1 610.6,889.6 611.4,894.6 612.2,893.3 612.9,913.9 613.6,933 614.4,928.6 615.2,909.9 615.9,877.6 616.6,862.1 617.4,863.8 618.2,853.4 618.9,839 619.6,848 620.4,873.6 621.2,905.8 621.9,932.1 622.6,936.2 623.4,928.4 624.2,923.9 624.9,913.2 625.6,892.1 626.4,865.2 627.2,842 627.9,826.4 628.6,826.5 629.4,839.9 630.2,848 630.9,845.8 631.6,854.9 632.4,880.4 633.2,881.3 633.9,872.6 634.6,875.5 635.4,890.9 636.2,910.5 636.9,926.4 637.6,926.8 638.4,918.5 639.2,898.7 639.9,868.9 640.6,855.7 641.4,861.3 642.2,869.4 642.9,871.6 643.6,884.7 644.4,908.2 645.2,934 645.9,944.2 646.6,937.3 647.4,930.3 648.2,925.7 648.9,897.8 649.6,854.6 650.4,824 651.2,821.8 651.9,828.5 652.6,840.8 653.4,868.6 654.2,905.7 654.9,929.6 655.6,923.6 656.4,903.6 657.2,895.1 657.9,896.5 658.6,880.5 659.4,862.8 660.2,852.3 660.9,864.1 661.6,880 662.4,887.1 663.2,895 663.9,893.9 664.6,893.5 665.4,903.1 666.2,911 666.9,907.9 667.6,893.2 668.4,892.9 669.2,898 669.9,893.3 670.6,876.3 671.4,856.8 672.2,841.5 672.9,838.3 673.6,842.5 674.4,853.2 675.2,881.3 675.9,908.3 676.6,922.9 677.4,927.4 678.2,916.6 678.9,895 679.6,877.1 680.4,863.8 681.2,855.7 681.9,850.9 682.6,843.6 683.4,851.5 684.2,864.3 684.9,870.3 685.6,869.8 686.4,879.4 687.2,882.4 687.9,883 688.6,898.3 689.4,916.1 690.2,922.7 690.9,921.6 691.6,924.1 692.4,923.9 693.2,906.4 693.9,886.4 694.6,875.6 695.4,870.6 696.2,867.6 696.9,864.5 697.6,870.8 698.4,866.4 699.2,847.1 699.9,839.3 700.6,842 701.4,851 702.2,860.7 702.9,868.6 703.6,874.2 704.4,889.3 705.2,903.7 705.9,909.9 706.6,911 707.4,914.6 708.2,917 708.9,902.8 709.6,876.3 710.4,855.8 711.2,849.1 711.9,847.8 712.6,849.2 713.4,850.9 714.2,855.3 714.9,870.2 715.6,881.9 716.4,883 717.2,880.8 717.9,883 718.6,885.1 719.4,889.5 720.2,900.2 720.9,906.1 721.6,903.7 722.4,901.4 723.2,902.7 723.9,901.1 724.6,893.9 725.4,886.4 726.2,873.3 726.9,865.1 727.6,865.8 728.4,868.1 729.2,861 729.9,851.8 730.6,857.7 731.4,866.6 732.2,874.1 732.9,882 733.6,889.6 734.4,900.8 735.2,915.1 735.9,921.4 736.6,921 737.4,911.3 738.2,898.9 738.9,895.5 739.6,882.2 740.4,867.6 741.2,858.9 741.9,856.6 742.6,854.3 743.4,852.5 744.2,857.5 744.9,865.2 745.6,873.6 746.4,886 747.2,900.9 747.9,897.9 748.6,896.2 749.4,904.5 750.2,911.1 750.9,906 751.6,907 752.4,908.4 753.2,906.3 753.9,900.7 754.6,892.9 755.4,885.1 756.2,887.3 756.9,886.3 757.6,887.4 758.4,895.5 759.2,895.9 759.9,890.9 760.6,885.3 761.4,880.9 762.2,873.8 762.9,860.7 763.6,850.5 764.4,843.2 765.2,848.9 765.9,871.2 766.6,897.7 767.4,914 768.2,893.3 768.9,872.1 769.6,853.5 770.4,846 771.2,860.2 771.9,858.5 772.6,854.4 773.4,857.9 774.2,863 774.9,863.6 775.6,870 776.4,891 777.2,914.2 777.9,928.8 778.6,926.2 779.4,910.3 780.2,909.9 780.9,919 781.6,918.3 782.4,899.7 783.2,883.6 783.9,859 784.6,835.9 785.4,835.7 786.2,834.6 786.9,853.5 787.6,878.4 788.4,883.4 789.2,889.6 789.9,912 790.6,918.8 791.4,913.3 792.2,909 792.9,908.3 793.6,904.8 794.4,893.9 795.2,876.6 795.9,859 796.6,847.5 797.4,839.3 798.2,839.4 798.9,856.7 799.6,871.6 800.4,867.5 801.2,866.5 801.9,876.3 802.6,876.9 803.4,875.3 804.2,876.9 804.9,878.8 805.6,886.6 806.4,900.9 807.2,914.7 807.9,919.2 808.6,917.5 809.4,909.1 810.2,897.9 810.9,881.5 811.6,862.5 812.4,855.7 813.2,856.7 813.9,873.9 814.6,882.6 815.4,880.7 816.2,883.6 816.9,897.4 817.6,909.7 818.4,909.8 819.2,901.2 819.9,891.7 820.6,888 821.4,888.3 822.2,891.3 822.9,895.4 823.6,893.5 824.4,889.1 825.2,887.1 825.9,875.1 826.6,864.4 827.4,858.4 828.2,858.8 828.9,866.6 829.6,879.1 830.4,891.8 831.2,899 831.9,897.4 832.6,889.6 833.4,885.7 834.2,886.8 834.9,881.4 835.6,874.3 836.4,873.9 837.2,863.7 837.9,861.3 838.6,869.1 839.4,875.4 840.2,878.5 840.9,884.3 841.6,888.1 842.4,898.6 843.2,912.5 843.9,913.4 844.6,909.9 845.4,900.5 846.2,895.7 846.9,890.9 847.6,879.8 848.4,869.4 849.2,876.4 849.9,886.2 850.6,898.5 851.4,908.4 852.2,914 852.9,910.9 853.6,900.7 854.4,893.1 855.2,887 855.9,876.2 856.6,865.7 857.4,862.5 858.2,867.2 858.9,871.5 859.6,865.7 860.4,860 861.2,862.9 861.9,869.5 862.6,872.6 863.4,885 864.2,898.8 864.9,902.3 865.6,898.7 866.4,894.3 867.2,894.7 867.9,899.8 868.6,900.9 869.4,895.9 870.2,888.7 870.9,882.2 871.6,872.9 872.4,865.5 873.2,863 873.9,869 874.6,869.4 875.4,869.4 876.2,870.9 876.9,875.7 877.6,882 878.4,888.1 879.2,892 879.9,890.7 880.6,885.8 881.4,878.1 882.2,874.9 882.9,880.5 883.6,892.8 884.4,902.1 885.2,900.2 885.9,898.6 886.6,898.3 887.4,898.5 888.2,897.6 888.9,899 889.6,906.8 890.4,910.1 891.2,906.5 891.9,894.3 892.6,881 893.4,875.3 894.2,876.1 894.9,874.3 895.6,872.6 896.4,871.4 897.2,870.6 897.9,873.7 898.6,875.8 899.4,875.4 900.2,872.3 900.9,872.8 901.6,875.2 902.4,872 903.2,865.7 903.9,865 904.6,871.9 905.4,872 906.2,876.8 906.9,886.8 907.6,893.9 908.4,894.5 909.2,893.6 909.9,898.7 910.6,902 911.4,900 912.2,900.8 912.9,901.6 913.6,895.5 914.4,884 915.2,871.9 915.9,864.3 916.6,866.3 917.4,873.2 918.2,874.5 918.9,871 919.6,867.2 920.4,866.5 921.2,871 921.9,876.6 922.6,882.1 923.4,883.7 924.2,882.1 924.9,887.1 925.6,893.8 926.4,894.4 927.2,893 927.9,895.3 928.6,892.1 929.4,893.4 930.2,897.4 930.9,894.1 931.6,893.4 932.4,896 933.2,894.4 933.9,888.4 934.6,887.6 935.4,890 936.2,890 936.9,885.1 937.6,881.6 938.4,874.6 939.2,865.8 939.9,864.3 940.6,866 941.4,874.1 942.2,886.8 942.9,896.2 943.6,898.9 944.4,901.1 945.2,899.1 945.9,894.6 946.6,890.4 947.4,887.8 948.2,887.9 948.9,888.8 949.6,888.5 950.4,885.2 951.2,878.3 951.9,869.8 952.6,876.2 953.4,883.4 954.2,881.2 954.9,875.8 955.6,871 956.4,868.4 957.2,866.9 957.9,864.7 958.6,864.3 959.4,871.8 960.2,882 960.9,890.5 961.6,895.9 962.4,901.6 963.2,897.6 963.9,887.5 964.6,879.1 965.4,871 966.2,868.4 966.9,872.3 967.6,876.8 968.4,879 969.2,877.8 969.9,874.6 970.6,876.2 971.4,883.2 972.2,889 972.9,892.5 973.6,895.7 974.4,896.8 975.2,896.1 975.9,892.6 976.6,888.9 977.4,886.5 978.2,884.9 978.9,880.2 979.6,876.7 980.4,873.1 981.2,872.4 981.9,876.1 982.6,877.7 983.4,880.6 984.2,885.1 984.9,885.6 985.6,883.8 986.4,884.7 987.2,889.8 987.9,891.4 988.6,892.8 989.4,893.9 990.2,892.7 990.9,889.5 991.6,884.2 992.4,878.8 993.2,876 993.9,875 994.6,876.2 995.4,878.7 996.2,881.1 996.9,883.9 997.6,890.2 998.4,893.8 999.2,892.4 999.9,891.4 1000.6,891.9 1001.4,889.2 1002.2,885 1002.9,883.8 1003.6,883.9 1004.4,879.1 1005.2,872.8 1005.9,870.5 1006.6,873.4 1007.4,875.1 1008.2,883.8 1008.9,892.8 1009.6,890.9 1010.4,890.9 1011.2,892.1 1011.9,889.7 1012.6,891.1 1013.4,890.1 1014.2,883.3 1014.9,874.9 1015.6,870.5 1016.4,871.3 1017.2,867.9 1017.9,864.7 1018.6,857.8 1019.4,853.5 1020.2,857.4 1020.9,863.7 1021.6,865.7 1022.4,868.9 1023.2,874.6 1023.9,884.8 1024.6,896.5 1025.4,901.9 1026.2,899.3 1026.9,899.4 1027.6,893.9 1028.4,883.6 1029.2,875.6 1029.9,872.7 1030.6,872.8 1031.4,874.6 1032.2,875.8 1032.9,877.3 1033.6,879.9 1034.4,884.3 1035.2,890 1035.9,893.2 1036.6,893.7 1037.4,894.7 1038.2,892.8 1038.9,892.2 1039.6,891.1 1040.4,888.2 1041.2,883.2 1041.9,879.1 1042.6,876.8 1043.4,872.3 1044.2,872.3 1044.9,874.5 1045.6,882.2 1046.4,888.9 1047.2,894.1 1047.9,896.3 1048.6,895.7 1049.4,892.5 1050.2,889.9 1050.9,888.2 1051.6,886 1052.4,882.1 1053.2,882.2 1053.9,883.7 1054.6,881.1 1055.4,875.4 1056.2,872.3 1056.9,872.3 1057.6,872.3 1058.4,876.4 1059.2,883.3 1059.9,887.1 1060.6,889.4 1061.4,892.6 1062.2,894.3 1062.9,893.1 1063.6,893.2 1064.4,891.7 1065.2,887.3 1065.9,884 1066.6,884.3 1067.4,885 1068.2,880.3 1068.9,877.2 1069.6,877.4 1070.4,876.6 1071.2,873.7 1071.9,873.7 1072.6,881 1073.4,885.8 1074.2,887 1074.9,886.4 1075.6,888.4 1076.4,893.5 1077.2,897.2 1077.9,897.2 1078.6,895.9 1079.4,892.7 1080.2,888.7 1080.9,886.1 1081.6,885.3 1082.4,885.2 1083.2,886.8 1083.9,886.9 1084.6,884.4 1085.4,884.4 1086.2,880.7 1086.9,876.7 1087.6,877.1 1088.4,878.1 1089.2,875.1 1089.9,873 1090.6,876.6 1091.4,883.2 1092.2,888.2 1092.9,889.2 1093.6,885.6 1094.4,883 1095.2,881.3 1095.9,877.2 1096.6,875 1097.4,877.9 1098.2,881 1098.9,880.5 1099.6,878.3 1100.4,876.5 1101.2,876.5 1101.9,879.2 1102.6,884.9 1103.4,889.8 1104.2,891 1104.9,890.8 1105.6,894.5 1106.4,896.8 1107.2,894.5 1107.9,892.8 1108.6,894.6 1109.4,896.3 1110.2,893.5 1110.9,888.4 1111.6,885 1112.4,882 1113.2,877.6 1113.9,878.1 1114.6,881 1115.4,879.8 1116.2,876.8 1116.9,873.5 1117.6,876.9 1118.4,886.6 1119.2,893.1 1119.9,893.5 1120.6,891.1 1121.4,888.9 1122.2,885.6 1122.9,881 1123.6,875.5 1124.4,870.9 1125.2,870.3 1125.9,870.3 1126.6,875.6 1127.4,883.6 1128.2,889.1 1128.9,890.8 1129.6,893.8 1130.4,898.3 1131.2,897.2 1131.9,893.9 1132.6,894.5 1133.4,891.9 1134.2,889.8 1134.9,889.3 1135.6,889.1 1136.4,890.4 1137.2,891.6 1137.9,890.5 1138.6,889.3 1139.4,888.1 1140.2,885.8 1140.9,883.9 1141.6,879.8 1142.4,872.9 1143.2,870 1143.9,872.4 1144.6,875.1 1145.4,879.6 1146.2,887.1 1146.9,893 1147.6,891.7 1148.4,888 1149.2,885.5 1149.9,883.1 1150.6,877.1 1151.4,874.7 1152.2,876.6 1152.9,877.1 1153.6,875.8 1154.4,872.1 1155.2,872.9 1155.9,881.3 1156.6,887.3 1157.4,890.4 1158.2,896.8 1158.9,900.2 1159.6,900.3 1160.4,899.2 1161.2,894.4 1161.9,888.4 1162.6,881.3 1163.4,877.6 1164.2,875.2 1164.9,875.4 1165.6,878.3 1166.4,879.8 1167.2,879.5 1167.9,876.4 1168.6,875.5 1169.4,875.6 1170.2,877.7 1170.9,880.3 1171.6,880.3 1172.4,883.4 1173.2,888.9 1173.9,891.1 1174.6,893.8 1175.4,897.7 1176.2,897.1 1176.9,890.3 1177.6,880.2 1178.4,879.1 1179.2,884.8 1179.9,893.6 1180.6,899.4 1181.4,898.1 1182.2,897.1 1182.9,893.6 1183.6,891.3 1184.4,890.4 1185.2,888.4 1185.9,885 1186.6,879.2 1187.4,875.1 1188.2,873.2 1188.9,872.2 1189.6,875.3 1190.4,878.9 1191.2,882.9 1191.9,885.5 1192.6,890 1193.4,896.1 1194.2,896.4 1194.9,891.3 1195.6,888.5 1196.4,889.5 1197.2,890.3 1197.9,888.9 1198.6,883.2 1199.4,876.6 1200.2,874.2 1200.9,872 1201.6,871.6 1202.4,875.3 1203.2,881.1 1203.9,885.2 1204.6,889 1205.4,892.4 1206.2,891.3 1206.9,890.7 1207.6,888.4 1208.4,879.9 1209.2,879.1 1209.9,880.8 1210.6,882.6 1211.4,886.9 1212.2,889.4 1212.9,889.2 1213.6,890.3 1214.4,893 1215.2,890.7 1215.9,886.6 1216.6,883.1 1217.4,880 1218.2,877.3 1218.9,875.8 1219.6,875.8 1220.4,877.5 1221.2,881.2 1221.9,882.8 1222.6,882.7 1223.4,885 1224.2,888.7 1224.9,891.5 1225.6,891.9 1226.4,891.4 1227.2,888.5 1227.9,884.8 1228.6,884.7 1229.4,884.3 1230.2,880.6 1230.9,877.7 1231.6,877.4 1232.4,875 1233.2,875 1233.9,877.7 1234.6,882.8 1235.4,884.8 1236.2,888.8 1236.9,890.5 1237.6,889.2 1238.4,889.2 1239.2,890.3 1239.9,891.5 1240.6,890.9 1241.4,886.9 1242.2,880.9 1242.9,877.9 1243.6,877.7 1244.4,879.9 1245.2,883 1245.9,885.9 1246.6,887.1 1247.4,886 1248.2,888.2 1248.9,890.8 1249.6,890.6 1250.4,888 1251.2,884.3 1251.9,881.8 1252.6,881.9 1253.4,881.6 1254.2,880.9 1254.9,880.8 1255.6,881.6 1256.4,882.5 1257.2,883.9 1257.9,884.6 1258.6,884.1 1259.4,883.8 1260.2,885.2 1260.9,887.3 1261.6,887.9 1262.4,887.7 1263.2,886.5 1263.9,885.8 1264.6,885.4 1265.4,884.5 1266.2,884.2 1266.9,883.6 1267.6,882.6 1268.4,882 1269.2,881.6 1269.9,881.7 1270.6,882.1 1271.4,883.3 1272.2,883.7 1272.9,884.3 1273.6,885 1274.4,885.8 1275.2,886.3 1275.9,886.2 1276.6,886.1 1277.4,885.7 1278.2,885 1278.9,884.1 1279.6,883.3 1280.4,882.7 1281.2,882.7 1281.9,882.7 1282.6,883.1 1283.4,883.9 1284.2,884.7 1284.9,885.3 1285.6,885.3 1286.4,885.1 1287.2,885 1287.9,884.8 1288.6,884.5 1289.4,884.3 1290.2,884.3 1290.9,884.2 1291.6,883.7 1292.4,883.4 1293.2,883.5 1293.9,883.9 1294.6,884.1 1295.4,884.1 1296.2,884.2 1296.9,884.3 1297.6,884.2 1298.4,884.3 1299.2,884.4 1299.9,884.3 1300.6,884.2 1301.4,884.2 1302.2,884.1 1302.9,884.1 1303.6,884.2"/>
<circle cx="265.2" cy="883.7" r="6.4" fill="#d8d8d8" fill-opacity="0.8" stroke="#000" stroke-width="0.9"/>
<polyline fill="none" stroke="#5fce5f" stroke-width="2.4" stroke-linejoin="round" points="80.4,884.3 81.2,884.3 81.9,884.3 82.6,884.3 83.4,884.3 84.2,884.3 84.9,884.3 85.6,884.3 86.4,884.3 87.2,884.3 87.9,884.2 88.6,884.2 89.4,884.2 90.2,884.3 90.9,884.3 91.6,884.3 92.4,884.3 93.2,884.4 93.9,884.4 94.6,884.4 95.4,884.4 96.2,884.3 96.9,884.3 97.6,884.2 98.4,884.2 99.2,884.2 99.9,884.3 100.6,884.5 101.4,884.5 102.2,884.5 102.9,884.8 103.6,884.8 104.4,884.5 105.2,884.4 105.9,884.3 106.6,884 107.4,883.4 108.2,883.3 108.9,883.8 109.6,884.5 110.4,885 111.2,885 111.9,885 112.6,885.3 113.4,884.6 114.2,884.1 114.9,883.7 115.6,883.3 116.4,883.4 117.2,883.7 117.9,884.1 118.6,884.6 119.4,885.1 120.2,885.1 120.9,884.8 121.6,884.2 122.4,883.2 123.2,883 123.9,883.2 124.6,883.5 125.4,885 126.2,886.1 126.9,886.3 127.6,885.5 128.4,884.2 129.2,883.1 129.9,882.9 130.6,883.4 131.4,884.2 132.2,885.6 132.9,886.3 133.6,885.7 134.4,885.3 135.2,884.8 135.9,883.4 136.6,882.4 137.4,882.4 138.2,882.9 138.9,883.2 139.6,883 140.4,883.2 141.2,883.8 141.9,884.3 142.6,885.2 143.4,886.1 144.2,886.3 144.9,885.3 145.6,884.3 146.4,884.2 147.2,883 147.9,882.4 148.6,882.8 149.4,883.3 150.2,883.1 150.9,882.9 151.6,883.9 152.4,885.2 153.2,886.1 153.9,886.1 154.6,885.5 155.4,885.3 156.2,884.9 156.9,883.6 157.6,882.6 158.4,882.8 159.2,883.6 159.9,883.8 160.6,883.6 161.4,883.3 162.2,883.6 162.9,883.8 163.6,884.1 164.4,884.4 165.2,885 165.9,885.9 166.6,885.8 167.4,884.4 168.2,883 168.9,882.4 169.6,882.6 170.4,883.4 171.2,884.5 171.9,885.5 172.6,886.1 173.4,886 174.2,885.5 174.9,884.9 175.6,884.9 176.4,884.9 177.2,883.9 177.9,883.4 178.6,883.8 179.4,884 180.2,883 180.9,882.3 181.6,883 182.4,883.5 183.2,883.2 183.9,883.9 184.6,885 185.4,885.5 186.2,885.8 186.9,885.9 187.6,885.6 188.4,885 189.2,884.6 189.9,884.1 190.6,882.9 191.4,882.1 192.2,882.4 192.9,883.5 193.6,885 194.4,885.6 195.2,885.4 195.9,886.2 196.6,886.3 197.4,885.1 198.2,884.2 198.9,883.8 199.6,883.4 200.4,883.2 201.2,883.1 201.9,883.3 202.6,884.6 203.4,886.1 204.2,886.1 204.9,886.1 205.6,884.9 206.4,883.1 207.2,882.9 207.9,883.2 208.6,883.5 209.4,885 210.2,886.2 210.9,885.6 211.6,884.7 212.4,884 213.2,883.5 213.9,882.7 214.6,883.7 215.4,885.6 216.2,885.9 216.9,885 217.6,884.3 218.4,883.4 219.2,882.2 219.9,882.5 220.6,883.7 221.4,885 222.2,885.9 222.9,885.6 223.6,885.1 224.4,884.8 225.2,884.1 225.9,882.4 226.6,881.7 227.4,882.3 228.2,884 228.9,887 229.6,888.3 230.4,886.4 231.2,882.6 231.9,880.5 232.6,879.3 233.4,877.1 234.2,879.2 234.9,884.8 235.6,889.2 236.4,889.8 237.2,888.7 237.9,889.3 238.6,888.1 239.4,886.4 240.2,884.8 240.9,883.4 241.6,883 242.4,883 243.2,883.2 243.9,884.3 244.6,886 245.4,887.3 246.2,886 246.9,884 247.6,882.1 248.4,881.2 249.2,882.4 249.9,884.9 250.6,886.3 251.4,887.5 252.2,887.8 252.9,885.5 253.6,883.3 254.4,881.8 255.2,881.2 255.9,879.2 256.6,879 257.4,882.9 258.2,888.2 258.9,891 259.6,889.9 260.4,886.3 261.2,882.8 261.9,880.6 262.6,879.9 263.4,879.1 264.2,879.5 264.9,882.8 265.6,887.4 266.4,889.4 267.2,889.7 267.9,889.6 268.6,886.5 269.4,885 270.2,883.4 270.9,880.8 271.6,880 272.4,882.1 273.2,883 273.9,882 274.6,881.2 275.4,880.7 276.2,881 276.9,882.3 277.6,883.4 278.4,884.4 279.2,886.2 279.9,887.3 280.6,887.2 281.4,886.7 282.2,886.5 282.9,885.8 283.6,883.2 284.4,880.7 285.2,880.9 285.9,881.6 286.6,882.6 287.4,885.8 288.2,888.2 288.9,888.6 289.6,887.4 290.4,886.7 291.2,886.9 291.9,884.6 292.6,880.8 293.4,879.9 294.2,881 294.9,882.3 295.6,884 296.4,886.5 297.2,887.6 297.9,886.4 298.6,884.5 299.4,882.5 300.2,879.9 300.9,879 301.6,882.9 302.4,886.8 303.2,886.9 303.9,886.8 304.6,885.6 305.4,883.6 306.2,881.9 306.9,880.5 307.6,879.8 308.4,880.9 309.2,881.9 309.9,883.5 310.6,884.7 311.4,885.2 312.2,887 312.9,887.6 313.6,882.5 314.4,879.8 315.2,881.4 315.9,886.4 316.6,890.2 317.4,890.7 318.2,888.5 318.9,886 319.6,883.3 320.4,881 321.2,881 321.9,881.7 322.6,882.5 323.4,884.6 324.2,886.7 324.9,883.9 325.6,880.6 326.4,879.6 327.2,879.3 327.9,879 328.6,881.2 329.4,885.6 330.2,888.7 330.9,888.7 331.6,887.4 332.4,886.2 333.2,885.1 333.9,884.7 334.6,884.6 335.4,884.8 336.2,887.6 336.9,889 337.6,888 338.4,887.5 339.2,889.3 339.9,887.6 340.6,886.1 341.4,885.1 342.2,889 342.9,894.8 343.6,896.7 344.4,893 345.2,889.8 345.9,891.9 346.6,894.5 347.4,891.1 348.2,882.7 348.9,876.6 349.6,872 350.4,868 351.2,868.1 351.9,872.5 352.6,878.6 353.4,885.2 354.2,891.8 354.9,893.8 355.6,893.2 356.4,899.8 357.2,903.8 357.9,898 358.6,888.8 359.4,882.7 360.2,877.7 360.9,872.4 361.6,872.6 362.4,874.8 363.2,874.1 363.9,871.5 364.6,870.3 365.4,875.2 366.2,884.3 366.9,893 367.6,897.9 368.4,900 369.2,906.1 369.9,906.4 370.6,898.8 371.4,888.8 372.2,884 372.9,879.7 373.6,869.7 374.4,860.9 375.2,860.4 375.9,866 376.6,873.3 377.4,880.8 378.2,884.8 378.9,884.8 379.6,889.8 380.4,893.4 381.2,889.8 381.9,883.1 382.6,883.2 383.4,883.3 384.2,876.7 384.9,868.2 385.6,866.4 386.4,870.7 387.2,876.7 387.9,882.4 388.6,894.6 389.4,901.3 390.2,898.4 390.9,892.6 391.6,891.3 392.4,890 393.2,884.1 393.9,877.6 394.6,875.3 395.4,878.2 396.2,882.3 396.9,885.4 397.6,890.5 398.4,895.1 399.2,897.6 399.9,896.1 400.6,887.4 401.4,874.7 402.2,866.9 402.9,870.3 403.6,881.8 404.4,891.7 405.2,895.1 405.9,892.6 406.6,889.6 407.4,891.2 408.2,893.4 408.9,894.2 409.6,891.3 410.4,884.8 411.2,879.1 411.9,876 412.6,874.7 413.4,875.6 414.2,879 414.9,879.3 415.6,879.8 416.4,874.5 417.2,870.2 417.9,870.4 418.6,872.4 419.4,876.4 420.2,878.2 420.9,884.2 421.6,887.5 422.4,886.9 423.2,886.3 423.9,888 424.6,891.7 425.4,894.9 426.2,895 426.9,892.3 427.6,888.9 428.4,885.2 429.2,877.5 429.9,874.1 430.6,878.4 431.4,884.5 432.2,891.2 432.9,893.9 433.6,891.1 434.4,891.9 435.2,896.6 435.9,898 436.6,893.4 437.4,884.7 438.2,876.7 438.9,873.2 439.6,873.7 440.4,873.1 441.2,877.8 441.9,882.7 442.6,882.5 443.4,879 444.2,878.3 444.9,882.7 445.6,883.6 446.4,884.4 447.2,889.5 447.9,898.6 448.6,899.8 449.4,898.2 450.2,894.7 450.9,890 451.6,883.4 452.4,873.9 453.2,873 453.9,876.8 454.6,876.6 455.4,874.5 456.2,874.1 456.9,878.3 457.6,887.2 458.4,895.6 459.2,898.7 459.9,896 460.6,891.5 461.4,887 462.2,878.2 462.9,877.1 463.6,879.9 464.4,883.5 465.2,889 465.9,893.7 466.6,892.4 467.4,885.5 468.2,882.2 468.9,879.5 469.6,883.3 470.4,886.9 471.2,888.8 471.9,892.3 472.6,899.5 473.4,900.4 474.2,893.7 474.9,886.4 475.6,881.7 476.4,880.7 477.2,877.5 477.9,874 478.6,871.3 479.4,871.4 480.2,875.9 480.9,881.4 481.6,883.6 482.4,883.6 483.2,884 483.9,888.2 484.6,892 485.4,892.2 486.2,889 486.9,886.1 487.6,885.5 488.4,886.9 489.2,887.6 489.9,880.6 490.6,875.4 491.4,870.9 492.2,860.4 492.9,864.3 493.6,873.4 494.4,882.2 495.2,890.3 495.9,898.4 496.6,905.9 497.4,903.2 498.2,899.1 498.9,894.5 499.6,889.6 500.4,887.9 501.2,888.1 501.9,883.9 502.6,878.4 503.4,875 504.2,873.5 504.9,872.3 505.6,870.8 506.4,876.9 507.2,889.8 507.9,897.3 508.6,897.6 509.4,893.1 510.2,884.5 510.9,877.6 511.6,877.3 512.4,876.3 513.2,871.6 513.9,868.6 514.6,870.5 515.4,875.5 516.2,878 516.9,880.6 517.6,889.7 518.4,899.3 519.2,903.4 519.9,903.4 520.6,899.3 521.4,895.9 522.2,891.1 522.9,881.3 523.6,874.1 524.4,873.7 525.2,875.5 525.9,873.4 526.6,869.9 527.4,876.2 528.2,881.7 528.9,884.9 529.6,887.6 530.4,891.6 531.2,897.1 531.9,901.3 532.6,899.9 533.4,891.3 534.2,879 534.9,868.5 535.6,865.2 536.4,867.8 537.2,872.4 537.9,879.3 538.6,887.1 539.4,892.4 540.2,891.1 540.9,889.6 541.6,889.4 542.4,887.6 543.2,881 543.9,880.6 544.6,879.9 545.4,875.8 546.2,871.5 546.9,877.5 547.6,887.7 548.4,894.8 549.2,895.3 549.9,891.7 550.6,887.6 551.4,884.9 552.2,887.4 552.9,881.4 553.6,875.9 554.4,871.1 555.2,871.1 555.9,874.7 556.6,879.3 557.4,882.6 558.2,884.5 558.9,887.2 559.6,889 560.4,888.3 561.2,889 561.9,895.1 562.6,884.6 563.4,874.7 564.2,872.1 564.9,884.2 565.6,901 566.4,908 567.2,902.3 567.9,896 568.6,896.7 569.4,897.2 570.2,895.5 570.9,893.7 571.6,885.1 572.4,873.3 573.2,867 573.9,865.5 574.6,867.6 575.4,873.8 576.2,880.7 576.9,884.9 577.6,887.2 578.4,890.9 579.2,895.5 579.9,896.4 580.6,893 581.4,892.9 582.2,890.2 582.9,886.3 583.6,887.1 584.4,884.6 585.2,881.8 585.9,883.2 586.6,880 587.4,873.8 588.2,875.6 588.9,878.1 589.6,880.5 590.4,885.7 591.2,887.8 591.9,885.4 592.6,880.8 593.4,875.3 594.2,875.1 594.9,874.4 595.6,873 596.4,870.5 597.2,872.1 597.9,873.7 598.6,882.3 599.4,891.2 600.2,890.9 600.9,895.9 601.6,900.9 602.4,900.8 603.2,898.1 603.9,889.4 604.6,884.1 605.4,882.1 606.2,879.5 606.9,877.8 607.6,878.4 608.4,877.2 609.2,875.4 609.9,879 610.6,885.5 611.4,886.5 612.2,886.3 612.9,890.7 613.6,894.9 614.4,893.9 615.2,889.9 615.9,882.8 616.6,879.5 617.4,879.8 618.2,877.6 618.9,874.5 619.6,876.4 620.4,882 621.2,889 621.9,894.7 622.6,895.6 623.4,893.9 624.2,892.9 624.9,890.6 625.6,886 626.4,880.1 627.2,875.1 627.9,871.7 628.6,871.7 629.4,874.6 630.2,876.4 630.9,875.9 631.6,877.9 632.4,883.5 633.2,883.6 633.9,881.8 634.6,882.4 635.4,885.7 636.2,890 636.9,893.4 637.6,893.5 638.4,891.7 639.2,887.4 639.9,881 640.6,878.1 641.4,879.3 642.2,881.1 642.9,881.5 643.6,884.4 644.4,889.5 645.2,895.1 645.9,897.3 646.6,895.8 647.4,894.3 648.2,893.3 648.9,887.2 649.6,877.8 650.4,871.2 651.2,870.7 651.9,872.2 652.6,874.8 653.4,880.9 654.2,889 654.9,894.2 655.6,892.8 656.4,888.5 657.2,886.7 657.9,887 658.6,883.5 659.4,879.6 660.2,877.3 660.9,879.9 661.6,883.4 662.4,884.9 663.2,886.6 663.9,886.4 664.6,886.3 665.4,888.4 666.2,890.1 666.9,889.4 667.6,886.2 668.4,886.2 669.2,887.3 669.9,886.3 670.6,882.6 671.4,878.3 672.2,875 672.9,874.3 673.6,875.2 674.4,877.5 675.2,883.7 675.9,889.5 676.6,892.7 677.4,893.7 678.2,891.3 678.9,886.6 679.6,882.7 680.4,879.8 681.2,878.1 681.9,877 682.6,875.5 683.4,877.2 684.2,879.9 684.9,881.3 685.6,881.2 686.4,883.2 687.2,883.9 687.9,884 688.6,887.3 689.4,891.2 690.2,892.6 690.9,892.4 691.6,892.9 692.4,892.9 693.2,889.1 693.9,884.8 694.6,882.4 695.4,881.3 696.2,880.7 696.9,880 697.6,881.4 698.4,880.4 699.2,876.2 699.9,874.5 700.6,875.1 701.4,877.1 702.2,879.2 702.9,880.9 703.6,882.1 704.4,885.4 705.2,888.5 705.9,889.9 706.6,890.1 707.4,890.9 708.2,891.4 708.9,888.3 709.6,882.6 710.4,878.1 711.2,876.7 711.9,876.4 712.6,876.7 713.4,877 714.2,878 714.9,881.2 715.6,883.8 716.4,884 717.2,883.5 717.9,884 718.6,884.5 719.4,885.4 720.2,887.8 720.9,889 721.6,888.5 722.4,888 723.2,888.3 723.9,887.9 724.6,886.4 725.4,884.8 726.2,881.9 726.9,880.1 727.6,880.3 728.4,880.8 729.2,879.2 729.9,877.2 730.6,878.5 731.4,880.5 732.2,882.1 732.9,883.8 733.6,885.5 734.4,887.9 735.2,891 735.9,892.4 736.6,892.3 737.4,890.2 738.2,887.5 738.9,886.7 739.6,883.8 740.4,880.7 741.2,878.8 741.9,878.3 742.6,877.8 743.4,877.4 744.2,878.5 744.9,880.2 745.6,882 746.4,884.7 747.2,887.9 747.9,887.3 748.6,886.9 749.4,888.7 750.2,890.1 750.9,889 751.6,889.2 752.4,889.5 753.2,889.1 753.9,887.9 754.6,886.2 755.4,884.5 756.2,885 756.9,884.7 757.6,885 758.4,886.7 759.2,886.8 759.9,885.7 760.6,884.5 761.4,883.6 762.2,882 762.9,879.2 763.6,877 764.4,875.4 765.2,876.6 765.9,881.5 766.6,887.2 767.4,890.8 768.2,886.3 768.9,881.6 769.6,877.6 770.4,876 771.2,879.1 771.9,878.7 772.6,877.8 773.4,878.6 774.2,879.7 774.9,879.8 775.6,881.2 776.4,885.7 777.2,890.8 777.9,894 778.6,893.4 779.4,890 780.2,889.9 780.9,891.8 781.6,891.7 782.4,887.6 783.2,884.1 783.9,878.8 784.6,873.8 785.4,873.7 786.2,873.5 786.9,877.6 787.6,883 788.4,884.1 789.2,885.5 789.9,890.3 790.6,891.8 791.4,890.6 792.2,889.7 792.9,889.5 793.6,888.8 794.4,886.4 795.2,882.6 795.9,878.8 796.6,876.3 797.4,874.5 798.2,874.5 798.9,878.3 799.6,881.5 800.4,880.6 801.2,880.4 801.9,882.6 802.6,882.7 803.4,882.3 804.2,882.7 804.9,883.1 805.6,884.8 806.4,887.9 807.2,890.9 807.9,891.9 808.6,891.5 809.4,889.7 810.2,887.3 810.9,883.7 811.6,879.6 812.4,878.1 813.2,878.3 813.9,882 814.6,883.9 815.4,883.5 816.2,884.1 816.9,887.1 817.6,889.8 818.4,889.8 819.2,888 819.9,885.9 820.6,885.1 821.4,885.2 822.2,885.8 822.9,886.7 823.6,886.3 824.4,885.3 825.2,884.9 825.9,882.3 826.6,880 827.4,878.7 828.2,878.7 828.9,880.5 829.6,883.2 830.4,885.9 831.2,887.5 831.9,887.1 832.6,885.5 833.4,884.6 834.2,884.8 834.9,883.7 835.6,882.1 836.4,882 837.2,879.8 837.9,879.3 838.6,881 839.4,882.4 840.2,883 840.9,884.3 841.6,885.1 842.4,887.4 843.2,890.4 843.9,890.6 844.6,889.9 845.4,887.8 846.2,886.8 846.9,885.7 847.6,883.3 848.4,881.1 849.2,882.6 849.9,884.7 850.6,887.4 851.4,889.5 852.2,890.8 852.9,890.1 853.6,887.9 854.4,886.2 855.2,884.9 855.9,882.5 856.6,880.3 857.4,879.6 858.2,880.6 858.9,881.5 859.6,880.3 860.4,879 861.2,879.6 861.9,881.1 862.6,881.7 863.4,884.5 864.2,887.5 864.9,888.2 865.6,887.4 866.4,886.5 867.2,886.6 867.9,887.7 868.6,887.9 869.4,886.8 870.2,885.2 870.9,883.8 871.6,881.8 872.4,880.2 873.2,879.7 873.9,881 874.6,881.1 875.4,881.1 876.2,881.4 876.9,882.4 877.6,883.8 878.4,885.1 879.2,886 879.9,885.7 880.6,884.6 881.4,882.9 882.2,882.3 882.9,883.5 883.6,886.2 884.4,888.2 885.2,887.8 885.9,887.4 886.6,887.3 887.4,887.4 888.2,887.2 888.9,887.5 889.6,889.2 890.4,889.9 891.2,889.1 891.9,886.5 892.6,883.6 893.4,882.3 894.2,882.5 894.9,882.1 895.6,881.8 896.4,881.5 897.2,881.3 897.9,882 898.6,882.4 899.4,882.4 900.2,881.7 900.9,881.8 901.6,882.3 902.4,881.6 903.2,880.3 903.9,880.1 904.6,881.6 905.4,881.6 906.2,882.7 906.9,884.8 907.6,886.4 908.4,886.5 909.2,886.3 909.9,887.4 910.6,888.1 911.4,887.7 912.2,887.9 912.9,888.1 913.6,886.7 914.4,884.2 915.2,881.6 915.9,879.9 916.6,880.4 917.4,881.9 918.2,882.2 918.9,881.4 919.6,880.6 920.4,880.4 921.2,881.4 921.9,882.6 922.6,883.8 923.4,884.2 924.2,883.8 924.9,884.9 925.6,886.4 926.4,886.5 927.2,886.2 927.9,886.7 928.6,886 929.4,886.3 930.2,887.2 930.9,886.4 931.6,886.3 932.4,886.8 933.2,886.5 933.9,885.2 934.6,885 935.4,885.5 936.2,885.5 936.9,884.5 937.6,883.7 938.4,882.2 939.2,880.3 939.9,880 940.6,880.3 941.4,882.1 942.2,884.8 942.9,886.9 943.6,887.5 944.4,887.9 945.2,887.5 945.9,886.5 946.6,885.6 947.4,885.1 948.2,885.1 948.9,885.3 949.6,885.2 950.4,884.5 951.2,883 951.9,881.2 952.6,882.5 953.4,884.1 954.2,883.6 954.9,882.4 955.6,881.4 956.4,880.8 957.2,880.5 957.9,880 958.6,880 959.4,881.6 960.2,883.8 960.9,885.6 961.6,886.8 962.4,888.1 963.2,887.2 963.9,885 964.6,883.2 965.4,881.4 966.2,880.8 966.9,881.7 967.6,882.7 968.4,883.1 969.2,882.9 969.9,882.2 970.6,882.5 971.4,884.1 972.2,885.3 972.9,886.1 973.6,886.8 974.4,887 975.2,886.9 975.9,886.1 976.6,885.3 977.4,884.8 978.2,884.4 978.9,883.4 979.6,882.6 980.4,881.9 981.2,881.7 981.9,882.5 982.6,882.9 983.4,883.5 984.2,884.5 984.9,884.6 985.6,884.2 986.4,884.4 987.2,885.5 987.9,885.8 988.6,886.2 989.4,886.4 990.2,886.1 990.9,885.4 991.6,884.3 992.4,883.1 993.2,882.5 993.9,882.3 994.6,882.5 995.4,883.1 996.2,883.6 996.9,884.2 997.6,885.6 998.4,886.4 999.2,886.1 999.9,885.8 1000.6,885.9 1001.4,885.4 1002.2,884.4 1002.9,884.2 1003.6,884.2 1004.4,883.2 1005.2,881.8 1005.9,881.3 1006.6,881.9 1007.4,882.3 1008.2,884.2 1008.9,886.2 1009.6,885.7 1010.4,885.7 1011.2,886 1011.9,885.5 1012.6,885.8 1013.4,885.6 1014.2,884.1 1014.9,882.2 1015.6,881.3 1016.4,881.5 1017.2,880.7 1017.9,880 1018.6,878.5 1019.4,877.6 1020.2,878.5 1020.9,879.8 1021.6,880.3 1022.4,881 1023.2,882.2 1023.9,884.4 1024.6,887 1025.4,888.1 1026.2,887.6 1026.9,887.6 1027.6,886.4 1028.4,884.2 1029.2,882.4 1029.9,881.8 1030.6,881.8 1031.4,882.2 1032.2,882.5 1032.9,882.8 1033.6,883.3 1034.4,884.3 1035.2,885.5 1035.9,886.2 1036.6,886.3 1037.4,886.6 1038.2,886.1 1038.9,886 1039.6,885.8 1040.4,885.1 1041.2,884.1 1041.9,883.2 1042.6,882.7 1043.4,881.7 1044.2,881.7 1044.9,882.2 1045.6,883.9 1046.4,885.3 1047.2,886.4 1047.9,886.9 1048.6,886.8 1049.4,886.1 1050.2,885.5 1050.9,885.1 1051.6,884.7 1052.4,883.8 1053.2,883.8 1053.9,884.2 1054.6,883.6 1055.4,882.4 1056.2,881.7 1056.9,881.7 1057.6,881.7 1058.4,882.6 1059.2,884.1 1059.9,884.9 1060.6,885.4 1061.4,886.1 1062.2,886.5 1062.9,886.2 1063.6,886.2 1064.4,885.9 1065.2,885 1065.9,884.2 1066.6,884.3 1067.4,884.5 1068.2,883.4 1068.9,882.8 1069.6,882.8 1070.4,882.6 1071.2,882 1071.9,882 1072.6,883.6 1073.4,884.6 1074.2,884.9 1074.9,884.8 1075.6,885.2 1076.4,886.3 1077.2,887.1 1077.9,887.1 1078.6,886.8 1079.4,886.1 1080.2,885.3 1080.9,884.7 1081.6,884.5 1082.4,884.5 1083.2,884.8 1083.9,884.9 1084.6,884.3 1085.4,884.3 1086.2,883.5 1086.9,882.7 1087.6,882.7 1088.4,883 1089.2,882.3 1089.9,881.8 1090.6,882.6 1091.4,884.1 1092.2,885.1 1092.9,885.4 1093.6,884.6 1094.4,884 1095.2,883.6 1095.9,882.8 1096.6,882.3 1097.4,882.9 1098.2,883.6 1098.9,883.5 1099.6,883 1100.4,882.6 1101.2,882.6 1101.9,883.2 1102.6,884.4 1103.4,885.5 1104.2,885.7 1104.9,885.7 1105.6,886.5 1106.4,887 1107.2,886.5 1107.9,886.1 1108.6,886.5 1109.4,886.9 1110.2,886.3 1110.9,885.2 1111.6,884.4 1112.4,883.8 1113.2,882.8 1113.9,883 1114.6,883.6 1115.4,883.3 1116.2,882.7 1116.9,882 1117.6,882.7 1118.4,884.8 1119.2,886.2 1119.9,886.3 1120.6,885.8 1121.4,885.3 1122.2,884.6 1122.9,883.6 1123.6,882.4 1124.4,881.4 1125.2,881.3 1125.9,881.3 1126.6,882.4 1127.4,884.2 1128.2,885.3 1128.9,885.7 1129.6,886.4 1130.4,887.3 1131.2,887.1 1131.9,886.4 1132.6,886.5 1133.4,885.9 1134.2,885.5 1134.9,885.4 1135.6,885.3 1136.4,885.6 1137.2,885.9 1137.9,885.6 1138.6,885.4 1139.4,885.1 1140.2,884.6 1140.9,884.2 1141.6,883.3 1142.4,881.8 1143.2,881.2 1143.9,881.7 1144.6,882.3 1145.4,883.3 1146.2,884.9 1146.9,886.2 1147.6,885.9 1148.4,885.1 1149.2,884.6 1149.9,884 1150.6,882.7 1151.4,882.2 1152.2,882.6 1152.9,882.7 1153.6,882.5 1154.4,881.7 1155.2,881.8 1155.9,883.6 1156.6,885 1157.4,885.6 1158.2,887 1158.9,887.8 1159.6,887.8 1160.4,887.5 1161.2,886.5 1161.9,885.2 1162.6,883.6 1163.4,882.8 1164.2,882.3 1164.9,882.4 1165.6,883 1166.4,883.3 1167.2,883.3 1167.9,882.6 1168.6,882.4 1169.4,882.4 1170.2,882.9 1170.9,883.4 1171.6,883.4 1172.4,884.1 1173.2,885.3 1173.9,885.8 1174.6,886.4 1175.4,887.2 1176.2,887.1 1176.9,885.6 1177.6,883.4 1178.4,883.2 1179.2,884.4 1179.9,886.3 1180.6,887.6 1181.4,887.3 1182.2,887.1 1182.9,886.3 1183.6,885.8 1184.4,885.6 1185.2,885.2 1185.9,884.5 1186.6,883.2 1187.4,882.3 1188.2,881.9 1188.9,881.7 1189.6,882.3 1190.4,883.1 1191.2,884 1191.9,884.6 1192.6,885.5 1193.4,886.9 1194.2,886.9 1194.9,885.8 1195.6,885.2 1196.4,885.4 1197.2,885.6 1197.9,885.3 1198.6,884.1 1199.4,882.6 1200.2,882.1 1200.9,881.6 1201.6,881.5 1202.4,882.3 1203.2,883.6 1203.9,884.5 1204.6,885.3 1205.4,886.1 1206.2,885.8 1206.9,885.7 1207.6,885.2 1208.4,883.3 1209.2,883.2 1209.9,883.5 1210.6,883.9 1211.4,884.9 1212.2,885.4 1212.9,885.4 1213.6,885.6 1214.4,886.2 1215.2,885.7 1215.9,884.8 1216.6,884 1217.4,883.4 1218.2,882.8 1218.9,882.5 1219.6,882.5 1220.4,882.8 1221.2,883.6 1221.9,884 1222.6,884 1223.4,884.4 1224.2,885.3 1224.9,885.9 1225.6,885.9 1226.4,885.8 1227.2,885.2 1227.9,884.4 1228.6,884.4 1229.4,884.3 1230.2,883.5 1230.9,882.9 1231.6,882.8 1232.4,882.3 1233.2,882.3 1233.9,882.9 1234.6,884 1235.4,884.4 1236.2,885.3 1236.9,885.6 1237.6,885.4 1238.4,885.4 1239.2,885.6 1239.9,885.9 1240.6,885.7 1241.4,884.9 1242.2,883.6 1242.9,882.9 1243.6,882.9 1244.4,883.4 1245.2,884 1245.9,884.6 1246.6,884.9 1247.4,884.7 1248.2,885.1 1248.9,885.7 1249.6,885.7 1250.4,885.1 1251.2,884.3 1251.9,883.7 1252.6,883.8 1253.4,883.7 1254.2,883.6 1254.9,883.5 1255.6,883.7 1256.4,883.9 1257.2,884.2 1257.9,884.4 1258.6,884.2 1259.4,884.2 1260.2,884.5 1260.9,885 1261.6,885.1 1262.4,885 1263.2,884.8 1263.9,884.6 1264.6,884.5 1265.4,884.4 1266.2,884.3 1266.9,884.2 1267.6,883.9 1268.4,883.8 1269.2,883.7 1269.9,883.7 1270.6,883.8 1271.4,884.1 1272.2,884.2 1272.9,884.3 1273.6,884.5 1274.4,884.6 1275.2,884.7 1275.9,884.7 1276.6,884.7 1277.4,884.6 1278.2,884.5 1278.9,884.3 1279.6,884.1 1280.4,884 1281.2,883.9 1281.9,884 1282.6,884 1283.4,884.2 1284.2,884.4 1284.9,884.5 1285.6,884.5 1286.4,884.5 1287.2,884.4 1287.9,884.4 1288.6,884.3 1289.4,884.3 1290.2,884.3 1290.9,884.3 1291.6,884.2 1292.4,884.1 1293.2,884.1 1293.9,884.2 1294.6,884.3 1295.4,884.2 1296.2,884.3 1296.9,884.3 1297.6,884.3 1298.4,884.3 1299.2,884.3 1299.9,884.3 1300.6,884.3 1301.4,884.3 1302.2,884.3 1302.9,884.3 1303.6,884.3"/>
<text x="79.5" y="785.2" font-family="'Liberation Sans',sans-serif" font-size="10" fill="#000" text-anchor="end" letter-spacing="0.3">0.387</text>
<text x="79.5" y="807.2" font-family="'Liberation Sans',sans-serif" font-size="10" fill="#000" text-anchor="end" letter-spacing="0.3">0.31</text>
<text x="79.5" y="828.6" font-family="'Liberation Sans',sans-serif" font-size="10" fill="#000" text-anchor="end" letter-spacing="0.3">0.236</text>
<text x="79.5" y="849.4" font-family="'Liberation Sans',sans-serif" font-size="10" fill="#000" text-anchor="end" letter-spacing="0.3">0.163</text>
<text x="79.5" y="870.5" font-family="'Liberation Sans',sans-serif" font-size="10" fill="#000" text-anchor="end" letter-spacing="0.3">0.09</text>
<text x="79.5" y="890.9" font-family="'Liberation Sans',sans-serif" font-size="10" fill="#000" text-anchor="end" letter-spacing="0.3">0.016</text>
<text x="79.5" y="920.8" font-family="'Liberation Sans',sans-serif" font-size="10" fill="#000" text-anchor="end" letter-spacing="0.3">-0.089</text>
<text x="79.5" y="941.6" font-family="'Liberation Sans',sans-serif" font-size="10" fill="#000" text-anchor="end" letter-spacing="0.3">-0.162</text>
<text x="79.5" y="962.9" font-family="'Liberation Sans',sans-serif" font-size="10" fill="#000" text-anchor="end" letter-spacing="0.3">-0.235</text>
<text x="79.5" y="983.7" font-family="'Liberation Sans',sans-serif" font-size="10" fill="#000" text-anchor="end" letter-spacing="0.3">-0.306</text>
<text x="79.5" y="1004.5" font-family="'Liberation Sans',sans-serif" font-size="10" fill="#000" text-anchor="end" letter-spacing="0.3">-0.379</text>
<text x="40" y="703.9" font-family="'Liberation Sans',sans-serif" font-size="14.7" fill="#000">Zaman Tanım Alanı Fonksiyonları</text>
<text x="1419" y="908.0999999999999" font-family="'Liberation Sans',sans-serif" font-size="14.7" fill="#000" text-anchor="end">Periyot [s]</text>
<text x="1201.9" y="706.9" font-family="'DejaVu Sans',sans-serif" font-size="14" fill="#333" letter-spacing="0.24" xml:space="preserve">X = 5.976 [s],  Y = 0.002</text>
<text x="1389" y="734.9" font-family="'DejaVu Sans',sans-serif" font-size="13" fill="#3a0000" text-anchor="end" letter-spacing="0.8">GÖSTERGE</text>
<line x1="1290" y1="739.4" x2="1390" y2="739.4" stroke="#000" stroke-width="1.2"/>
<text x="1388.6" y="756.9" font-family="'DejaVu Sans',sans-serif" font-size="12" fill="#5fce5f" text-anchor="end" font-weight="bold" letter-spacing="0.55">[lomapnas_ew_005]</text>
<text x="1388.4" y="774.6" font-family="'DejaVu Sans',sans-serif" font-size="12" fill="#d0606f" text-anchor="end">Scaled</text>
</svg>
<svg class="chart" style="position:absolute;left:18px;top:1103px" width="1443" height="378" viewBox="18 1103 1443 378">
<line x1="76" y1="1200.5" x2="387" y2="1200.5" stroke="#cfcfcf"/>
<line x1="76" y1="1220.5" x2="385.5" y2="1220.5" stroke="#cfcfcf"/>
<line x1="76" y1="1241.5" x2="361.4" y2="1241.5" stroke="#cfcfcf"/>
<line x1="76" y1="1262.5" x2="850" y2="1262.5" stroke="#cfcfcf"/>
<line x1="76" y1="1283.5" x2="853" y2="1283.5" stroke="#cfcfcf"/>
<line x1="76" y1="1334.5" x2="343" y2="1334.5" stroke="#cfcfcf"/>
<line x1="76" y1="1355.5" x2="629.5" y2="1355.5" stroke="#cfcfcf"/>
<line x1="76" y1="1376.5" x2="530" y2="1376.5" stroke="#cfcfcf"/>
<line x1="76" y1="1397.5" x2="393" y2="1397.5" stroke="#cfcfcf"/>
<line x1="76" y1="1418.5" x2="397" y2="1418.5" stroke="#cfcfcf"/>
<line x1="80.5" y1="1137" x2="80.5" y2="1436.9" stroke="#c4c4c4"/>
<path d="M80.5 1132.6 L83 1137.8 L78 1137.8 Z" fill="#000"/>
<line x1="54" y1="1300.5" x2="1412" y2="1300.5" stroke="#000"/>
<path d="M1418.5 1300.5 L1411.5 1297.9 L1412.5 1300.5 L1411.5 1303.1 Z" fill="#000"/>
<line x1="1304.5" y1="1296.5" x2="1304.5" y2="1304.5" stroke="#000"/>
<text x="116.1" y="1310.6" font-family="'Liberation Sans',sans-serif" font-size="10" fill="#000" letter-spacing="0.3">1.17</text>
<text x="157.1" y="1310.6" font-family="'Liberation Sans',sans-serif" font-size="10" fill="#000" letter-spacing="0.3">2.5</text>
<text x="198.0" y="1310.6" font-family="'Liberation Sans',sans-serif" font-size="10" fill="#000" letter-spacing="0.3">3.84</text>
<text x="239.0" y="1310.6" font-family="'Liberation Sans',sans-serif" font-size="10" fill="#000" letter-spacing="0.3">5.17</text>
<text x="280.0" y="1310.6" font-family="'Liberation Sans',sans-serif" font-size="10" fill="#000" letter-spacing="0.3">6.51</text>
<text x="320.9" y="1310.6" font-family="'Liberation Sans',sans-serif" font-size="10" fill="#000" letter-spacing="0.3">7.84</text>
<text x="361.9" y="1310.6" font-family="'Liberation Sans',sans-serif" font-size="10" fill="#000" letter-spacing="0.3">9.18</text>
<text x="402.9" y="1310.6" font-family="'Liberation Sans',sans-serif" font-size="10" fill="#000" letter-spacing="0.3">10.51</text>
<text x="443.9" y="1310.6" font-family="'Liberation Sans',sans-serif" font-size="10" fill="#000" letter-spacing="0.3">11.85</text>
<text x="484.8" y="1310.6" font-family="'Liberation Sans',sans-serif" font-size="10" fill="#000" letter-spacing="0.3">13.18</text>
<text x="525.8" y="1310.6" font-family="'Liberation Sans',sans-serif" font-size="10" fill="#000" letter-spacing="0.3">14.52</text>
<text x="566.8" y="1310.6" font-family="'Liberation Sans',sans-serif" font-size="10" fill="#000" letter-spacing="0.3">15.85</text>
<text x="607.7" y="1310.6" font-family="'Liberation Sans',sans-serif" font-size="10" fill="#000" letter-spacing="0.3">17.19</text>
<text x="648.7" y="1310.6" font-family="'Liberation Sans',sans-serif" font-size="10" fill="#000" letter-spacing="0.3">18.52</text>
<text x="689.7" y="1310.6" font-family="'Liberation Sans',sans-serif" font-size="10" fill="#000" letter-spacing="0.3">19.86</text>
<text x="730.6" y="1310.6" font-family="'Liberation Sans',sans-serif" font-size="10" fill="#000" letter-spacing="0.3">21.2</text>
<text x="771.6" y="1310.6" font-family="'Liberation Sans',sans-serif" font-size="10" fill="#000" letter-spacing="0.3">22.53</text>
<text x="812.6" y="1310.6" font-family="'Liberation Sans',sans-serif" font-size="10" fill="#000" letter-spacing="0.3">23.86</text>
<text x="853.6" y="1310.6" font-family="'Liberation Sans',sans-serif" font-size="10" fill="#000" letter-spacing="0.3">25.2</text>
<text x="894.5" y="1310.6" font-family="'Liberation Sans',sans-serif" font-size="10" fill="#000" letter-spacing="0.3">26.54</text>
<text x="935.5" y="1310.6" font-family="'Liberation Sans',sans-serif" font-size="10" fill="#000" letter-spacing="0.3">27.87</text>
<text x="976.5" y="1310.6" font-family="'Liberation Sans',sans-serif" font-size="10" fill="#000" letter-spacing="0.3">29.2</text>
<text x="1017.4" y="1310.6" font-family="'Liberation Sans',sans-serif" font-size="10" fill="#000" letter-spacing="0.3">30.54</text>
<text x="1058.4" y="1310.6" font-family="'Liberation Sans',sans-serif" font-size="10" fill="#000" letter-spacing="0.3">31.88</text>
<text x="1099.4" y="1310.6" font-family="'Liberation Sans',sans-serif" font-size="10" fill="#000" letter-spacing="0.3">33.21</text>
<text x="1140.3" y="1310.6" font-family="'Liberation Sans',sans-serif" font-size="10" fill="#000" letter-spacing="0.3">34.54</text>
<text x="1181.3" y="1310.6" font-family="'Liberation Sans',sans-serif" font-size="10" fill="#000" letter-spacing="0.3">35.88</text>
<text x="1222.3" y="1310.6" font-family="'Liberation Sans',sans-serif" font-size="10" fill="#000" letter-spacing="0.3">37.21</text>
<text x="1263.3" y="1310.6" font-family="'Liberation Sans',sans-serif" font-size="10" fill="#000" letter-spacing="0.3">38.55</text>
<text x="1304.2" y="1310.6" font-family="'Liberation Sans',sans-serif" font-size="10" fill="#000" letter-spacing="0.3">39.87</text>
<polyline fill="none" stroke="#c09292" stroke-width="1.1" stroke-linejoin="bevel" points="80.4,1300.4 81.2,1300.4 81.9,1300.4 82.6,1300.4 83.4,1300.4 84.2,1300.4 84.9,1300.5 85.6,1300.5 86.4,1300.4 87.2,1300.3 87.9,1300.3 88.6,1300.4 89.4,1300.3 90.2,1300.3 90.9,1300.4 91.6,1300.4 92.4,1300.3 93.2,1300.2 93.9,1300.1 94.6,1300.3 95.4,1300.6 96.2,1300.6 96.9,1300.4 97.6,1300.6 98.4,1301 99.2,1301.1 99.9,1301.1 100.6,1301 101.4,1300.3 102.2,1299.3 102.9,1298.7 103.6,1299.5 104.4,1299.7 105.2,1298.8 105.9,1297.6 106.6,1297 107.4,1298.3 108.2,1301.1 108.9,1302.2 109.6,1299.1 110.4,1297.2 111.2,1298.2 111.9,1299.9 112.6,1301.6 113.4,1303 114.2,1303.8 114.9,1304 115.6,1304.2 116.4,1301.7 117.2,1297.7 117.9,1296.7 118.6,1295.3 119.4,1294.1 120.2,1296.9 120.9,1301.7 121.6,1302.7 122.4,1302 123.2,1305.6 123.9,1307.2 124.6,1303.2 125.4,1298 126.2,1297.2 126.9,1294 127.6,1299.1 128.4,1306 129.2,1304.5 129.9,1301 130.6,1303.6 131.4,1304.4 132.2,1300.8 132.9,1297.8 133.6,1297.7 134.4,1299 135.2,1297.5 135.9,1295.2 136.6,1293.8 137.4,1296.1 138.2,1302.1 138.9,1304.2 139.6,1304.8 140.4,1303.6 141.2,1301.2 141.9,1297.1 142.6,1295.7 143.4,1302.2 144.2,1303.8 144.9,1307.4 145.6,1305.6 146.4,1299.3 147.2,1297.1 147.9,1296 148.6,1296.8 149.4,1301.9 150.2,1301.3 150.9,1297.8 151.6,1295.5 152.4,1300.6 153.2,1304.3 153.9,1308.9 154.6,1304 155.4,1299 156.2,1298.7 156.9,1295.7 157.6,1296.9 158.4,1306.8 159.2,1305.9 159.9,1304.9 160.6,1303.9 161.4,1301.3 162.2,1301.5 162.9,1293.1 163.6,1292.3 164.4,1298.1 165.2,1302.6 165.9,1304.3 166.6,1302.9 167.4,1300 168.2,1295.9 168.9,1293.6 169.6,1297 170.4,1304.9 171.2,1308.5 171.9,1310 172.6,1303.6 173.4,1294.6 174.2,1290.6 174.9,1293.1 175.6,1298.8 176.4,1301.8 177.2,1302.2 177.9,1307 178.6,1310.4 179.4,1303 180.2,1301.4 180.9,1300.2 181.6,1295.6 182.4,1290.4 183.2,1290.4 183.9,1298.5 184.6,1302.4 185.4,1301.6 186.2,1305.7 186.9,1310.4 187.6,1305.9 188.4,1297.2 189.2,1298.4 189.9,1300.7 190.6,1303.2 191.4,1304.8 192.2,1304.8 192.9,1300.4 193.6,1296.6 194.4,1301.1 195.2,1304.5 195.9,1306 196.6,1300.6 197.4,1291.5 198.2,1290.4 198.9,1294.3 199.6,1303.5 200.4,1306.9 201.2,1302.6 201.9,1291.6 202.6,1295.4 203.4,1297.5 204.2,1299.4 204.9,1319.8 205.6,1325.4 206.4,1310.8 207.2,1300 207.9,1298 208.6,1295 209.4,1288.2 210.2,1284.1 210.9,1290.5 211.6,1304.2 212.4,1304.9 213.2,1306.4 213.9,1306.7 214.6,1302.5 215.4,1296.8 216.2,1296 216.9,1298.2 217.6,1299.7 218.4,1301.9 219.2,1309.1 219.9,1308.8 220.6,1301.9 221.4,1303.8 222.2,1308.3 222.9,1306.9 223.6,1301.4 224.4,1294 225.2,1293.4 225.9,1298.6 226.6,1303.7 227.4,1303.2 228.2,1299.4 228.9,1298.2 229.6,1306.4 230.4,1308.6 231.2,1309.9 231.9,1304.6 232.6,1296 233.4,1289.5 234.2,1292.7 234.9,1297.8 235.6,1294.5 236.4,1294.2 237.2,1303 237.9,1305.7 238.6,1303.4 239.4,1312.1 240.2,1309.1 240.9,1303 241.6,1301 242.4,1290.8 243.2,1289 243.9,1296.9 244.6,1297.3 245.4,1297.3 246.2,1304.4 246.9,1304.9 247.6,1302.7 248.4,1305.8 249.2,1303.1 249.9,1309 250.6,1312.5 251.4,1307.6 252.2,1297.4 252.9,1293.2 253.6,1293.7 254.4,1290.5 255.2,1292.7 255.9,1304.9 256.6,1307.2 257.4,1305.3 258.2,1301.5 258.9,1295.6 259.6,1291.7 260.4,1293.8 261.2,1306 261.9,1314.2 262.6,1313 263.4,1305.2 264.2,1294.7 264.9,1291.2 265.6,1294.4 266.4,1294.4 267.2,1292.8 267.9,1302.4 268.6,1306.1 269.4,1298.8 270.2,1295 270.9,1297.4 271.6,1290.3 272.4,1287.5 273.2,1296.7 273.9,1303.2 274.6,1296.2 275.4,1288.5 276.2,1292.1 276.9,1307.4 277.6,1308.5 278.4,1306.4 279.2,1306 279.9,1302.5 280.6,1290.4 281.4,1283.3 282.2,1290.5 282.9,1300.2 283.6,1313.4 284.4,1320.2 285.2,1316.4 285.9,1307.4 286.6,1289.7 287.4,1280.8 288.2,1290.9 288.9,1296.7 289.6,1287.9 290.4,1279.2 291.2,1283.6 291.9,1294.1 292.6,1308.1 293.4,1316.8 294.2,1312.6 294.9,1304 295.6,1284.5 296.4,1274.9 297.2,1296.9 297.9,1316.4 298.6,1320.4 299.4,1314.1 300.2,1294.5 300.9,1276.9 301.6,1289.5 302.4,1312.8 303.2,1324.5 303.9,1315.8 304.6,1308.5 305.4,1312.8 306.2,1301.9 306.9,1284.3 307.6,1280.6 308.4,1287 309.2,1291.2 309.9,1301.2 310.6,1321.6 311.4,1314.7 312.2,1308.5 312.9,1311.1 313.6,1303.9 314.4,1284.5 315.2,1276.9 315.9,1279.5 316.6,1291.1 317.4,1302.8 318.2,1310.9 318.9,1322.3 319.6,1318 320.4,1310.7 321.2,1301.7 321.9,1285.3 322.6,1282.9 323.4,1290.7 324.2,1299.7 324.9,1310.5 325.6,1306.9 326.4,1300.2 327.2,1299.4 327.9,1297.4 328.6,1288.5 329.4,1285.7 330.2,1295.8 330.9,1296.8 331.6,1301.4 332.4,1297.4 333.2,1291.5 333.9,1297.5 334.6,1288.3 335.4,1276.7 336.2,1286.5 336.9,1295.9 337.6,1283.8 338.4,1281.2 339.2,1287.1 339.9,1284.6 340.6,1290.4 341.4,1298.6 342.2,1302.8 342.9,1312.5 343.6,1323.9 344.4,1334.5 345.2,1340.4 345.9,1328.8 346.6,1299.4 347.4,1296.4 348.2,1295.3 348.9,1276.1 349.6,1256.5 350.4,1255.6 351.2,1264.8 351.9,1269.3 352.6,1272.8 353.4,1283.5 354.2,1302 354.9,1314.7 355.6,1313.1 356.4,1313.6 357.2,1326.7 357.9,1334.5 358.6,1322.8 359.4,1286.3 360.2,1236.7 360.9,1220.7 361.6,1243.2 362.4,1259.1 363.2,1264.6 363.9,1298.3 364.6,1344.8 365.4,1361.6 366.2,1350.4 366.9,1298.1 367.6,1314.3 368.4,1322.9 369.2,1308.4 369.9,1298 370.6,1307 371.4,1303.8 372.2,1271.8 372.9,1224.3 373.6,1218.2 374.4,1226.6 375.2,1275 375.9,1296.3 376.6,1291.5 377.4,1290.9 378.2,1302.9 378.9,1329.3 379.6,1351.4 380.4,1369 381.2,1365.4 381.9,1335 382.6,1387.4 383.4,1384.7 384.2,1339.9 384.9,1301.5 385.6,1290.1 386.4,1289.1 387.2,1285.1 387.9,1258.4 388.6,1199.4 389.4,1207 390.2,1258.2 390.9,1248.9 391.6,1278.3 392.4,1364.1 393.2,1417.4 393.9,1401.3 394.6,1332.8 395.4,1257.6 396.2,1208 396.9,1199.4 397.6,1227.1 398.4,1254.5 399.2,1272.4 399.9,1320.7 400.6,1305.1 401.4,1270.3 402.2,1275.7 402.9,1307 403.6,1321.9 404.4,1317.3 405.2,1336 405.9,1353.4 406.6,1330.9 407.4,1343 408.2,1380.7 408.9,1398.4 409.6,1371.6 410.4,1344.5 411.2,1295.4 411.9,1230.2 412.6,1202.4 413.4,1207.7 414.2,1243.5 414.9,1258.9 415.6,1252.7 416.4,1279.2 417.2,1310.6 417.9,1281.2 418.6,1273.2 419.4,1292.5 420.2,1286 420.9,1289.1 421.6,1332.4 422.4,1377.7 423.2,1375.6 423.9,1360.7 424.6,1338 425.4,1292.3 426.2,1284.3 426.9,1307 427.6,1326.1 428.4,1323.6 429.2,1307.1 429.9,1281.8 430.6,1252.3 431.4,1241.6 432.2,1255.8 432.9,1278.8 433.6,1286.1 434.4,1283.8 435.2,1294.4 435.9,1301.3 436.6,1284.9 437.4,1278.4 438.2,1318.4 438.9,1345.5 439.6,1334 440.4,1326.1 441.2,1334.5 441.9,1338 442.6,1305.8 443.4,1288.3 444.2,1288.8 444.9,1282.9 445.6,1271.8 446.4,1266.2 447.2,1262.4 447.9,1287.7 448.6,1290.5 449.4,1271.7 450.2,1270.3 450.9,1289.8 451.6,1311.1 452.4,1309.7 453.2,1320.6 453.9,1353 454.6,1361.6 455.4,1361.8 456.2,1345.2 456.9,1314.6 457.6,1309.7 458.4,1322.3 459.2,1347.8 459.9,1351.8 460.6,1324.2 461.4,1333 462.2,1330.5 462.9,1305.8 463.6,1279 464.4,1275.6 465.2,1295 465.9,1301.8 466.6,1287.6 467.4,1274.4 468.2,1281.5 468.9,1300.8 469.6,1314.6 470.4,1296.8 471.2,1254.5 471.9,1240.5 472.6,1263.5 473.4,1292.2 474.2,1287 474.9,1320.6 475.6,1337.9 476.4,1306.1 477.2,1255.5 477.9,1226.8 478.6,1224.3 479.4,1235.9 480.2,1286.6 480.9,1301.4 481.6,1265.1 482.4,1242.3 483.2,1248.1 483.9,1258 484.6,1297.8 485.4,1355 486.2,1393.5 486.9,1395.3 487.6,1374 488.4,1376.1 489.2,1384.5 489.9,1339.8 490.6,1308.8 491.4,1323.5 492.2,1344.6 492.9,1349.2 493.6,1344.2 494.4,1315.8 495.2,1285.5 495.9,1270.2 496.6,1258.7 497.4,1254.1 498.2,1249.7 498.9,1241.5 499.6,1261.9 500.4,1311.7 501.2,1347.2 501.9,1342.4 502.6,1326.7 503.4,1322.8 504.2,1326.7 504.9,1349.2 505.6,1368.3 506.4,1355.9 507.2,1351.1 507.9,1341.9 508.6,1308.5 509.4,1291.4 510.2,1283.7 510.9,1271.1 511.6,1262.7 512.4,1292.9 513.2,1311.6 513.9,1295.3 514.6,1270.5 515.4,1246.8 516.2,1243.9 516.9,1253.3 517.6,1221 518.4,1215.4 519.2,1246.4 519.9,1281.4 520.6,1275.7 521.4,1272.9 522.2,1296.8 522.9,1323.6 523.6,1312.8 524.4,1294 525.2,1280.1 525.9,1283.3 526.6,1308.9 527.4,1328.7 528.2,1324.4 528.9,1334.6 529.6,1375.8 530.4,1378.4 531.2,1320.3 531.9,1300.3 532.6,1312.3 533.4,1307.7 534.2,1285.2 534.9,1280.9 535.6,1282.4 536.4,1297.5 537.2,1336.3 537.9,1369.7 538.6,1368.9 539.4,1361.6 540.2,1326.4 540.9,1290.7 541.6,1264.1 542.4,1251.2 543.2,1258 543.9,1287.8 544.6,1310.6 545.4,1293.4 546.2,1258.6 546.9,1268.6 547.6,1277.1 548.4,1268.1 549.2,1298.6 549.9,1342 550.6,1354.7 551.4,1334.2 552.2,1354.9 552.9,1390.3 553.6,1370.7 554.4,1349 555.2,1341.7 555.9,1296.9 556.6,1252 557.4,1238 558.2,1261.8 558.9,1304.2 559.6,1324.8 560.4,1311.4 561.2,1284.4 561.9,1268.8 562.6,1273 563.4,1282.5 564.2,1297.8 564.9,1301.1 565.6,1275.3 566.4,1293.7 567.2,1309.5 567.9,1293 568.6,1277.9 569.4,1287.8 570.2,1306.7 570.9,1316.1 571.6,1312 572.4,1305.5 573.2,1307 573.9,1311.9 574.6,1335.2 575.4,1357.9 576.2,1346 576.9,1321.4 577.6,1326.5 578.4,1333.4 579.2,1302.9 579.9,1255.2 580.6,1229.6 581.4,1239.1 582.2,1253.1 582.9,1241.1 583.6,1236.4 584.4,1255.8 585.2,1273.5 585.9,1279.9 586.6,1280 587.4,1309.9 588.2,1329.6 588.9,1322.6 589.6,1306.1 590.4,1320.5 591.2,1361.4 591.9,1371.4 592.6,1350.3 593.4,1315 594.2,1297.8 594.9,1284.1 595.6,1262.3 596.4,1259.3 597.2,1262 597.9,1242.5 598.6,1236.6 599.4,1240.1 600.2,1254.4 600.9,1282.1 601.6,1305.3 602.4,1307.6 603.2,1302.6 603.9,1321.2 604.6,1351.8 605.4,1351.3 606.2,1336.8 606.9,1310.1 607.6,1295.5 608.4,1274.3 609.2,1278.9 609.9,1310 610.6,1299.6 611.4,1271.1 612.2,1262 612.9,1280.6 613.6,1307.7 614.4,1314.1 615.2,1293.5 615.9,1281 616.6,1312.4 617.4,1335.1 618.2,1342.4 618.9,1340.7 619.6,1343.2 620.4,1316.1 621.2,1280.5 621.9,1273.9 622.6,1298 623.4,1288 624.2,1280.6 624.9,1295.6 625.6,1297.7 626.4,1282.7 627.2,1261.5 627.9,1244 628.6,1253.6 629.4,1294.7 630.2,1325.3 630.9,1332.8 631.6,1334.1 632.4,1345.6 633.2,1355.4 633.9,1347.9 634.6,1323.9 635.4,1295.5 636.2,1277.6 636.9,1281 637.6,1280 638.4,1255.3 639.2,1261.2 639.9,1272.9 640.6,1264.3 641.4,1266.6 642.2,1288.3 642.9,1309.1 643.6,1349.9 644.4,1360.6 645.2,1312.5 645.9,1277.7 646.6,1298.2 647.4,1307.1 648.2,1294.6 648.9,1286.6 649.6,1277.7 650.4,1276.3 651.2,1279.5 651.9,1273.1 652.6,1279.5 653.4,1296.9 654.2,1302.5 654.9,1310.7 655.6,1348.4 656.4,1355 657.2,1343.3 657.9,1313.7 658.6,1298.1 659.4,1294.8 660.2,1286.8 660.9,1268.4 661.6,1254.7 662.4,1261.5 663.2,1277.5 663.9,1275.5 664.6,1265.5 665.4,1266.5 666.2,1293.7 666.9,1314.5 667.6,1311.9 668.4,1303.9 669.2,1305.4 669.9,1321.4 670.6,1323.2 671.4,1314.9 672.2,1327.2 672.9,1339.8 673.6,1331.7 674.4,1306.9 675.2,1285.7 675.9,1268.9 676.6,1263 677.4,1275.8 678.2,1296.1 678.9,1302.6 679.6,1303 680.4,1302.6 681.2,1305.5 681.9,1317.6 682.6,1312.4 683.4,1295.6 684.2,1285.8 684.9,1283 685.6,1288.6 686.4,1297.8 687.2,1288.6 687.9,1282.5 688.6,1288.7 689.4,1294.8 690.2,1310.6 690.9,1328.8 691.6,1328.7 692.4,1313.4 693.2,1318.2 693.9,1330.1 694.6,1327.1 695.4,1312.7 696.2,1295.8 696.9,1284.5 697.6,1285.2 698.4,1290.6 699.2,1282.2 699.9,1282 700.6,1284 701.4,1292.7 702.2,1307 702.9,1317.4 703.6,1320.8 704.4,1321.1 705.2,1321 705.9,1319 706.6,1313.7 707.4,1310.1 708.2,1306.8 708.9,1292.6 709.6,1284.8 710.4,1283.1 711.2,1278.2 711.9,1269.7 712.6,1270 713.4,1289.1 714.2,1303.2 714.9,1304.6 715.6,1301.4 716.4,1308 717.2,1315.7 717.9,1309.9 718.6,1305.8 719.4,1304.8 720.2,1298.5 720.9,1297.8 721.6,1304 722.4,1304.7 723.2,1301.8 723.9,1299.5 724.6,1311.2 725.4,1323.3 726.2,1322.6 726.9,1310 727.6,1303.6 728.4,1316.2 729.2,1327.6 729.9,1318.4 730.6,1322.4 731.4,1318.2 732.2,1294 732.9,1281.9 733.6,1284.6 734.4,1284.7 735.2,1279.5 735.9,1273.5 736.6,1272.4 737.4,1275.3 738.2,1292 738.9,1302.4 739.6,1303.5 740.4,1304.9 741.2,1313.2 741.9,1320.2 742.6,1317.8 743.4,1309 744.2,1300.6 744.9,1306.8 745.6,1315.4 746.4,1313.5 747.2,1306.8 747.9,1310.8 748.6,1318.7 749.4,1306.9 750.2,1291.2 750.9,1286.1 751.6,1295.5 752.4,1299.6 753.2,1300.2 753.9,1305.3 754.6,1300.3 755.4,1290.4 756.2,1292.1 756.9,1302 757.6,1301.8 758.4,1292.2 759.2,1291.1 759.9,1304.1 760.6,1311.5 761.4,1300.9 762.2,1304.5 762.9,1308.9 763.6,1304.2 764.4,1311.2 765.2,1326.7 765.9,1324.6 766.6,1307.3 767.4,1294 768.2,1294.5 768.9,1305.3 769.6,1297.7 770.4,1290 771.2,1301.2 771.9,1310.3 772.6,1298.4 773.4,1273.4 774.2,1256.5 774.9,1261 775.6,1292.1 776.4,1301 777.2,1289.2 777.9,1282.6 778.6,1285.1 779.4,1274.8 780.2,1259.9 780.9,1286.2 781.6,1306.8 782.4,1313.6 783.2,1316.7 783.9,1325 784.6,1339 785.4,1327.3 786.2,1286.5 786.9,1261.1 787.6,1263.1 788.4,1260.2 789.2,1240.6 789.9,1275.5 790.6,1306.5 791.4,1312.6 792.2,1313.7 792.9,1318.4 793.6,1314.4 794.4,1303.8 795.2,1286.1 795.9,1268.1 796.6,1277.4 797.4,1290.9 798.2,1296.4 798.9,1306.8 799.6,1317.8 800.4,1317 801.2,1309.3 801.9,1313.4 802.6,1329.2 803.4,1326.9 804.2,1310 804.9,1290.6 805.6,1273.8 806.4,1268.2 807.2,1277.3 807.9,1281.7 808.6,1278.7 809.4,1275.7 810.2,1273.8 810.9,1263.8 811.6,1241.7 812.4,1236.5 813.2,1262.1 813.9,1293.3 814.6,1304 815.4,1293.8 816.2,1287.2 816.9,1295.9 817.6,1302.8 818.4,1293 819.2,1291.5 819.9,1283.5 820.6,1270.6 821.4,1278.4 822.2,1279.5 822.9,1287.5 823.6,1308.2 824.4,1317.6 825.2,1321.5 825.9,1328.3 826.6,1318.9 827.4,1297 828.2,1297.9 828.9,1317.2 829.6,1330.3 830.4,1336.9 831.2,1337.6 831.9,1328.3 832.6,1311.8 833.4,1309 834.2,1294.5 834.9,1283.7 835.6,1292.2 836.4,1300.7 837.2,1309.9 837.9,1311.5 838.6,1293.5 839.4,1267 840.2,1260.1 840.9,1264.5 841.6,1269.3 842.4,1273.1 843.2,1261.1 843.9,1272.7 844.6,1289.9 845.4,1288.4 846.2,1306.7 846.9,1332.9 847.6,1335.4 848.4,1333.9 849.2,1338.8 849.9,1343.7 850.6,1351.2 851.4,1348.8 852.2,1331.4 852.9,1308.3 853.6,1271.7 854.4,1234.2 855.2,1232.4 855.9,1240.3 856.6,1279.3 857.4,1294.7 858.2,1288 858.9,1291.4 859.6,1301.8 860.4,1303.8 861.2,1298.8 861.9,1295.2 862.6,1290.6 863.4,1289.5 864.2,1305.5 864.9,1328.5 865.6,1329.9 866.4,1334.1 867.2,1341.2 867.9,1330.7 868.6,1313.4 869.4,1299.3 870.2,1301.8 870.9,1305.8 871.6,1299.2 872.4,1306.5 873.2,1315.7 873.9,1302.6 874.6,1280.2 875.4,1286.1 876.2,1298 876.9,1278.4 877.6,1276.7 878.4,1286.5 879.2,1290.8 879.9,1291.8 880.6,1303.1 881.4,1308.7 882.2,1307.9 882.9,1308 883.6,1302.9 884.4,1280 885.2,1265.6 885.9,1277.1 886.6,1299.9 887.4,1317.7 888.2,1321.7 888.9,1318.4 889.6,1327 890.4,1333.2 891.2,1326.7 891.9,1311 892.6,1298.2 893.4,1305.3 894.2,1317.3 894.9,1316.4 895.6,1308.3 896.4,1298.6 897.2,1284.7 897.9,1275.7 898.6,1278.9 899.4,1292.5 900.2,1302.9 900.9,1299.3 901.6,1286.5 902.4,1276.2 903.2,1274.8 903.9,1281.3 904.6,1290.5 905.4,1297.6 906.2,1298.8 906.9,1301.9 907.6,1308.7 908.4,1315.2 909.2,1308.4 909.9,1299.2 910.6,1299.2 911.4,1300 912.2,1298 912.9,1300.6 913.6,1309 914.4,1311.6 915.2,1303.4 915.9,1300.5 916.6,1311.1 917.4,1305.4 918.2,1303.2 918.9,1307.6 919.6,1314.8 920.4,1314.7 921.2,1301.7 921.9,1290.9 922.6,1294.5 923.4,1304.2 924.2,1307.7 924.9,1304.2 925.6,1296.7 926.4,1291.4 927.2,1289.8 927.9,1290.9 928.6,1299.8 929.4,1313.3 930.2,1318.9 930.9,1311.8 931.6,1312 932.4,1318.3 933.2,1308 933.9,1288.9 934.6,1276.9 935.4,1276.8 936.2,1287.8 936.9,1297 937.6,1293.1 938.4,1283.4 939.2,1283.2 939.9,1295.8 940.6,1308.5 941.4,1313.1 942.2,1309.8 942.9,1304 943.6,1299 944.4,1298.5 945.2,1309.6 945.9,1328.6 946.6,1334.9 947.4,1326.5 948.2,1331.9 948.9,1322.4 949.6,1298 950.4,1285.1 951.2,1291.2 951.9,1294.6 952.6,1287.4 953.4,1279 954.2,1281.1 954.9,1296.6 955.6,1310.7 956.4,1326.4 957.2,1315 957.9,1307.7 958.6,1312.8 959.4,1305.4 960.2,1287.5 960.9,1290.6 961.6,1292.2 962.4,1289.1 963.2,1285 963.9,1279.1 964.6,1282.6 965.4,1296.3 966.2,1299.9 966.9,1291.1 967.6,1285.9 968.4,1290.8 969.2,1296.7 969.9,1295.5 970.6,1291.7 971.4,1297.9 972.2,1316 972.9,1324.2 973.6,1321.3 974.4,1324 975.2,1323.9 975.9,1317.6 976.6,1307.6 977.4,1301.7 978.2,1304.7 978.9,1295.9 979.6,1286.5 980.4,1283.2 981.2,1287.8 981.9,1298.1 982.6,1303.7 983.4,1298.1 984.2,1289.6 984.9,1287.8 985.6,1289.2 986.4,1291 987.2,1290.5 987.9,1284.9 988.6,1284.7 989.4,1297.1 990.2,1311.2 990.9,1311.5 991.6,1313.9 992.4,1323.9 993.2,1330 993.9,1325.9 994.6,1315 995.4,1312.9 996.2,1304.9 996.9,1290.9 997.6,1290.6 998.4,1294.8 999.2,1293.8 999.9,1287.4 1000.6,1279 1001.4,1278.6 1002.2,1297.3 1002.9,1318 1003.6,1322.2 1004.4,1312.7 1005.2,1298.3 1005.9,1289.9 1006.6,1290.3 1007.4,1289 1008.2,1288.4 1008.9,1288.1 1009.6,1291.8 1010.4,1298.9 1011.2,1296.4 1011.9,1285.9 1012.6,1291.8 1013.4,1294.5 1014.2,1291.2 1014.9,1290.7 1015.6,1293.2 1016.4,1301.7 1017.2,1319.4 1017.9,1326.7 1018.6,1327.1 1019.4,1323.8 1020.2,1315.1 1020.9,1308.5 1021.6,1297.9 1022.4,1289.8 1023.2,1292.5 1023.9,1298 1024.6,1302.6 1025.4,1315.1 1026.2,1318.9 1026.9,1304.9 1027.6,1295.4 1028.4,1301.8 1029.2,1306.2 1029.9,1302 1030.6,1297.3 1031.4,1299.8 1032.2,1303.2 1032.9,1296.5 1033.6,1287.6 1034.4,1284.8 1035.2,1285.4 1035.9,1287.8 1036.6,1297.4 1037.4,1301.7 1038.2,1303.5 1038.9,1311.9 1039.6,1313.9 1040.4,1310.2 1041.2,1303.7 1041.9,1298.4 1042.6,1297.6 1043.4,1300 1044.2,1305.1 1044.9,1312.6 1045.6,1311.8 1046.4,1303.9 1047.2,1301.3 1047.9,1303 1048.6,1300.8 1049.4,1293.6 1050.2,1292.6 1050.9,1297.6 1051.6,1298.9 1052.4,1294.7 1053.2,1300 1053.9,1303 1054.6,1300.5 1055.4,1298.4 1056.2,1298.9 1056.9,1298.6 1057.6,1288.7 1058.4,1283.3 1059.2,1286.7 1059.9,1290.9 1060.6,1291.8 1061.4,1293.6 1062.2,1295.5 1062.9,1296.1 1063.6,1301.3 1064.4,1310.2 1065.2,1312.1 1065.9,1304.7 1066.6,1297.6 1067.4,1300.4 1068.2,1313.5 1068.9,1317.2 1069.6,1311.1 1070.4,1301.7 1071.2,1300 1071.9,1310.9 1072.6,1311.4 1073.4,1303.1 1074.2,1298.9 1074.9,1300.4 1075.6,1298 1076.4,1291.5 1077.2,1286.1 1077.9,1285.8 1078.6,1288 1079.4,1290.9 1080.2,1294.9 1080.9,1297.3 1081.6,1296.1 1082.4,1294 1083.2,1297.4 1083.9,1300.8 1084.6,1294.6 1085.4,1287.8 1086.2,1289.1 1086.9,1296.5 1087.6,1304.8 1088.4,1309.5 1089.2,1308.6 1089.9,1302.8 1090.6,1297 1091.4,1297.6 1092.2,1304.7 1092.9,1309 1093.6,1306.9 1094.4,1305.4 1095.2,1307.2 1095.9,1309.7 1096.6,1307.7 1097.4,1302.3 1098.2,1303.1 1098.9,1310.1 1099.6,1305.1 1100.4,1297.7 1101.2,1296.2 1101.9,1297.8 1102.6,1295.2 1103.4,1287.9 1104.2,1282.3 1104.9,1282.5 1105.6,1287.7 1106.4,1297.4 1107.2,1308 1107.9,1313.7 1108.6,1313.5 1109.4,1321.4 1110.2,1322 1110.9,1319 1111.6,1305.9 1112.4,1295.8 1113.2,1287.4 1113.9,1283.8 1114.6,1290.8 1115.4,1300.5 1116.2,1299.1 1116.9,1304.6 1117.6,1304 1118.4,1293.7 1119.2,1291.9 1119.9,1298.5 1120.6,1304.8 1121.4,1315.8 1122.2,1318.7 1122.9,1309.9 1123.6,1301.3 1124.4,1303.3 1125.2,1296.3 1125.9,1288.4 1126.6,1285.9 1127.4,1288.6 1128.2,1291.3 1128.9,1294.6 1129.6,1297.7 1130.4,1316.3 1131.2,1319.8 1131.9,1314.4 1132.6,1310 1133.4,1307.9 1134.2,1301.8 1134.9,1287 1135.6,1276.6 1136.4,1276.8 1137.2,1283.7 1137.9,1289.3 1138.6,1287.8 1139.4,1294.7 1140.2,1307.9 1140.9,1316.6 1141.6,1318.2 1142.4,1317 1143.2,1317.4 1143.9,1319.6 1144.6,1317.3 1145.4,1318.7 1146.2,1304.4 1146.9,1293.2 1147.6,1290.2 1148.4,1290.8 1149.2,1291.1 1149.9,1294.5 1150.6,1293.6 1151.4,1284.4 1152.2,1283.1 1152.9,1297.8 1153.6,1302.6 1154.4,1300.4 1155.2,1293.7 1155.9,1281 1156.6,1277.4 1157.4,1284.9 1158.2,1293 1158.9,1305.6 1159.6,1307.4 1160.4,1297 1161.2,1293 1161.9,1299.1 1162.6,1294 1163.4,1300.2 1164.2,1309.3 1164.9,1302.9 1165.6,1299.9 1166.4,1307.8 1167.2,1315.4 1167.9,1315.5 1168.6,1315.9 1169.4,1311.2 1170.2,1300.4 1170.9,1294.6 1171.6,1300.6 1172.4,1307.4 1173.2,1310.1 1173.9,1307.8 1174.6,1299.6 1175.4,1291.2 1176.2,1288.1 1176.9,1287.4 1177.6,1285.4 1178.4,1287.4 1179.2,1290.9 1179.9,1290.8 1180.6,1287.1 1181.4,1285.9 1182.2,1290.6 1182.9,1297.8 1183.6,1303.5 1184.4,1308.8 1185.2,1310.2 1185.9,1305.7 1186.6,1298.8 1187.4,1295.1 1188.2,1296.9 1188.9,1303.4 1189.6,1309.7 1190.4,1311.8 1191.2,1311.3 1191.9,1306.4 1192.6,1301.9 1193.4,1301.3 1194.2,1299.7 1194.9,1298.6 1195.6,1299.6 1196.4,1300.5 1197.2,1300 1197.9,1297 1198.6,1294.8 1199.4,1294.2 1200.2,1292.6 1200.9,1292.7 1201.6,1296.2 1202.4,1301.7 1203.2,1304.9 1203.9,1304.6 1204.6,1305.5 1205.4,1307.7 1206.2,1305.2 1206.9,1301.9 1207.6,1301.4 1208.4,1301.8 1209.2,1301 1209.9,1299.7 1210.6,1297.3 1211.4,1295.1 1212.2,1296.4 1212.9,1301.4 1213.6,1304.8 1214.4,1304.6 1215.2,1306 1215.9,1305.7 1216.6,1303.9 1217.4,1301.5 1218.2,1299.4 1218.9,1299.6 1219.6,1300.6 1220.4,1298.3 1221.2,1297.3 1221.9,1299.7 1222.6,1301.1 1223.4,1300.3 1224.2,1298.9 1224.9,1297.5 1225.6,1298.4 1226.4,1301.5 1227.2,1301.4 1227.9,1300.6 1228.6,1300.5 1229.4,1300.6 1230.2,1302.3 1230.9,1303.2 1231.6,1302.8 1232.4,1302.5 1233.2,1302.6 1233.9,1301.7 1234.6,1300.1 1235.4,1299.2 1236.2,1298.5 1236.9,1297.6 1237.6,1296.4 1238.4,1295.8 1239.2,1296.5 1239.9,1297.6 1240.6,1298.4 1241.4,1299.6 1242.2,1300.9 1242.9,1301.8 1243.6,1302.7 1244.4,1302.7 1245.2,1301.9 1245.9,1301.4 1246.6,1300.7 1247.4,1300.5 1248.2,1301.2 1248.9,1301.4 1249.6,1300.4 1250.4,1300.3 1251.2,1302.1 1251.9,1301.8 1252.6,1300.4 1253.4,1299.7 1254.2,1300 1254.9,1299.1 1255.6,1297.6 1256.4,1297.5 1257.2,1298 1257.9,1299.7 1258.6,1300.3 1259.4,1299.8 1260.2,1299.9 1260.9,1300.9 1261.6,1300.7 1262.4,1299.8 1263.2,1299.4 1263.9,1299.8 1264.6,1300.3 1265.4,1300.4 1266.2,1300.3 1266.9,1300.2 1267.6,1300 1268.4,1299.8 1269.2,1300.2 1269.9,1300.9 1270.6,1301.2 1271.4,1300.2 1272.2,1299.6 1272.9,1300 1273.6,1300.4 1274.4,1300.5 1275.2,1300.5 1275.9,1300.6 1276.6,1300.8 1277.4,1300.5 1278.2,1300.4 1278.9,1300.5 1279.6,1300.4 1280.4,1300.4 1281.2,1300.6 1281.9,1300.6 1282.6,1300.4 1283.4,1300.4 1284.2,1300.4 1284.9,1300.2 1285.6,1300 1286.4,1300.1 1287.2,1300.2 1287.9,1300.3 1288.6,1300.3 1289.4,1300.5 1290.2,1300.5 1290.9,1300.4 1291.6,1300.5 1292.4,1300.5 1293.2,1300.4 1293.9,1300.3 1294.6,1300.3 1295.4,1300.4 1296.2,1300.4 1296.9,1300.5 1297.6,1300.5 1298.4,1300.4 1299.2,1300.4 1299.9,1300.4 1300.6,1300.4 1301.4,1300.4 1302.2,1300.4 1302.9,1300.4 1303.6,1300.4"/>
<circle cx="269" cy="1299" r="6.4" fill="#d8d8d8" fill-opacity="0.8" stroke="#000" stroke-width="0.9"/>
<polyline fill="none" stroke="#6464d2" stroke-width="2.7" stroke-linejoin="round" points="80.4,1300.4 81.2,1300.4 81.9,1300.4 82.6,1300.4 83.4,1300.4 84.2,1300.4 84.9,1300.4 85.6,1300.4 86.4,1300.4 87.2,1300.4 87.9,1300.4 88.6,1300.4 89.4,1300.4 90.2,1300.4 90.9,1300.4 91.6,1300.4 92.4,1300.4 93.2,1300.4 93.9,1300.3 94.6,1300.4 95.4,1300.4 96.2,1300.4 96.9,1300.4 97.6,1300.4 98.4,1300.5 99.2,1300.6 99.9,1300.6 100.6,1300.5 101.4,1300.4 102.2,1300.2 102.9,1300 103.6,1300.2 104.4,1300.3 105.2,1300.1 105.9,1299.8 106.6,1299.7 107.4,1299.9 108.2,1300.6 108.9,1300.8 109.6,1300.1 110.4,1299.7 111.2,1299.9 111.9,1300.3 112.6,1300.7 113.4,1301 114.2,1301.1 114.9,1301.2 115.6,1301.2 116.4,1300.7 117.2,1299.8 117.9,1299.6 118.6,1299.3 119.4,1299 120.2,1299.6 120.9,1300.7 121.6,1300.9 122.4,1300.7 123.2,1301.5 123.9,1301.9 124.6,1301 125.4,1299.9 126.2,1299.7 126.9,1299 127.6,1300.1 128.4,1301.6 129.2,1301.3 129.9,1300.5 130.6,1301.1 131.4,1301.3 132.2,1300.5 132.9,1299.8 133.6,1299.8 134.4,1300.1 135.2,1299.8 135.9,1299.3 136.6,1299 137.4,1299.5 138.2,1300.8 138.9,1301.2 139.6,1301.4 140.4,1301.1 141.2,1300.6 141.9,1299.7 142.6,1299.4 143.4,1300.8 144.2,1301.1 144.9,1301.9 145.6,1301.5 146.4,1300.2 147.2,1299.7 147.9,1299.4 148.6,1299.6 149.4,1300.7 150.2,1300.6 150.9,1299.8 151.6,1299.3 152.4,1300.4 153.2,1301.2 153.9,1302.2 154.6,1301.2 155.4,1300.1 156.2,1300 156.9,1299.4 157.6,1299.6 158.4,1301.8 159.2,1301.6 159.9,1301.4 160.6,1301.2 161.4,1300.6 162.2,1300.6 162.9,1298.8 163.6,1298.6 164.4,1299.9 165.2,1300.9 165.9,1301.3 166.6,1300.9 167.4,1300.3 168.2,1299.4 168.9,1298.9 169.6,1299.7 170.4,1301.4 171.2,1302.2 171.9,1302.5 172.6,1301.1 173.4,1299.1 174.2,1298.3 174.9,1298.8 175.6,1300.1 176.4,1300.7 177.2,1300.8 177.9,1301.8 178.6,1302.6 179.4,1301 180.2,1300.6 180.9,1300.4 181.6,1299.4 182.4,1298.2 183.2,1298.2 183.9,1300 184.6,1300.8 185.4,1300.7 186.2,1301.6 186.9,1302.6 187.6,1301.6 188.4,1299.7 189.2,1300 189.9,1300.5 190.6,1301 191.4,1301.4 192.2,1301.4 192.9,1300.4 193.6,1299.6 194.4,1300.5 195.2,1301.3 195.9,1301.6 196.6,1300.4 197.4,1298.5 198.2,1298.2 198.9,1299.1 199.6,1301.1 200.4,1301.8 201.2,1300.9 201.9,1298.5 202.6,1299.3 203.4,1299.8 204.2,1300.2 204.9,1304.6 205.6,1305.8 206.4,1302.7 207.2,1300.3 207.9,1299.9 208.6,1299.2 209.4,1297.8 210.2,1296.9 210.9,1298.2 211.6,1301.2 212.4,1301.4 213.2,1301.7 213.9,1301.8 214.6,1300.8 215.4,1299.6 216.2,1299.4 216.9,1299.9 217.6,1300.2 218.4,1300.7 219.2,1302.3 219.9,1302.2 220.6,1300.7 221.4,1301.1 222.2,1302.1 222.9,1301.8 223.6,1300.6 224.4,1299 225.2,1298.9 225.9,1300 226.6,1301.1 227.4,1301 228.2,1300.2 228.9,1299.9 229.6,1301.7 230.4,1302.2 231.2,1302.5 231.9,1301.3 232.6,1299.4 233.4,1298 234.2,1298.7 234.9,1299.8 235.6,1299.1 236.4,1299 237.2,1301 237.9,1301.6 238.6,1301.1 239.4,1303 240.2,1302.3 240.9,1301 241.6,1300.5 242.4,1298.3 243.2,1297.9 243.9,1299.6 244.6,1299.7 245.4,1299.7 246.2,1301.3 246.9,1301.4 247.6,1300.9 248.4,1301.6 249.2,1301 249.9,1302.3 250.6,1303 251.4,1302 252.2,1299.7 252.9,1298.8 253.6,1299 254.4,1298.2 255.2,1298.7 255.9,1301.4 256.6,1301.9 257.4,1301.5 258.2,1300.6 258.9,1299.3 259.6,1298.5 260.4,1299 261.2,1301.6 261.9,1303.4 262.6,1303.1 263.4,1301.4 264.2,1299.2 264.9,1298.4 265.6,1299.1 266.4,1299.1 267.2,1298.7 267.9,1300.8 268.6,1301.6 269.4,1300 270.2,1299.2 270.9,1299.8 271.6,1298.2 272.4,1297.6 273.2,1299.6 273.9,1301 274.6,1299.5 275.4,1297.8 276.2,1298.6 276.9,1301.9 277.6,1302.2 278.4,1301.7 279.2,1301.6 279.9,1300.8 280.6,1298.2 281.4,1296.7 282.2,1298.2 282.9,1300.4 283.6,1303.2 284.4,1304.7 285.2,1303.9 285.9,1301.9 286.6,1298.1 287.4,1296.1 288.2,1298.3 288.9,1299.6 289.6,1297.7 290.4,1295.8 291.2,1296.8 291.9,1299 292.6,1302.1 293.4,1304 294.2,1303.1 294.9,1301.2 295.6,1297 296.4,1294.9 297.2,1299.6 297.9,1303.9 298.6,1304.7 299.4,1303.4 300.2,1299.1 300.9,1295.3 301.6,1298 302.4,1303.1 303.2,1305.6 303.9,1303.7 304.6,1302.2 305.4,1303.1 306.2,1300.7 306.9,1296.9 307.6,1296.1 308.4,1297.5 309.2,1298.4 309.9,1300.6 310.6,1305 311.4,1303.5 312.2,1302.2 312.9,1302.7 313.6,1301.2 314.4,1296.9 315.2,1295.3 315.9,1295.9 316.6,1298.4 317.4,1300.9 318.2,1302.7 318.9,1305.2 319.6,1304.2 320.4,1302.6 321.2,1300.7 321.9,1297.1 322.6,1296.6 323.4,1298.3 324.2,1300.3 324.9,1302.6 325.6,1301.8 326.4,1300.4 327.2,1300.2 327.9,1299.8 328.6,1297.8 329.4,1297.2 330.2,1299.4 330.9,1299.6 331.6,1300.6 332.4,1299.7 333.2,1298.5 333.9,1299.8 334.6,1297.8 335.4,1295.2 336.2,1297.4 336.9,1299.4 337.6,1296.8 338.4,1296.2 339.2,1297.5 339.9,1297 340.6,1298.2 341.4,1300 342.2,1300.9 342.9,1303 343.6,1305.5 344.4,1307.8 345.2,1309.1 345.9,1306.6 346.6,1300.2 347.4,1299.5 348.2,1299.3 348.9,1295.1 349.6,1290.9 350.4,1290.7 351.2,1292.7 351.9,1293.6 352.6,1294.4 353.4,1296.7 354.2,1300.7 354.9,1303.5 355.6,1303.2 356.4,1303.3 357.2,1306.1 357.9,1307.8 358.6,1305.3 359.4,1297.3 360.2,1286.6 360.9,1283.1 361.6,1288 362.4,1291.4 363.2,1292.6 363.9,1299.9 364.6,1310 365.4,1313.7 366.2,1311.3 366.9,1299.9 367.6,1303.4 368.4,1305.3 369.2,1302.1 369.9,1299.9 370.6,1301.8 371.4,1301.1 372.2,1294.2 372.9,1283.9 373.6,1282.5 374.4,1284.4 375.2,1294.9 375.9,1299.5 376.6,1298.5 377.4,1298.3 378.2,1300.9 378.9,1306.7 379.6,1311.5 380.4,1315.3 381.2,1314.5 381.9,1307.9 382.6,1319.3 383.4,1318.7 384.2,1309 384.9,1300.6 385.6,1298.2 386.4,1297.9 387.2,1297.1 387.9,1291.3 388.6,1278.4 389.4,1280.1 390.2,1291.2 390.9,1289.2 391.6,1295.6 392.4,1314.2 393.2,1325.8 393.9,1322.3 394.6,1307.4 395.4,1291.1 396.2,1280.3 396.9,1278.4 397.6,1284.5 398.4,1290.4 399.2,1294.3 399.9,1304.8 400.6,1301.4 401.4,1293.9 402.2,1295 402.9,1301.8 403.6,1305.1 404.4,1304.1 405.2,1308.1 405.9,1311.9 406.6,1307 407.4,1309.7 408.2,1317.9 408.9,1321.7 409.6,1315.9 410.4,1310 411.2,1299.3 411.9,1285.1 412.6,1279.1 413.4,1280.2 414.2,1288 414.9,1291.4 415.6,1290 416.4,1295.8 417.2,1302.6 417.9,1296.2 418.6,1294.5 419.4,1298.7 420.2,1297.3 420.9,1297.9 421.6,1307.4 422.4,1317.2 423.2,1316.7 423.9,1313.5 424.6,1308.6 425.4,1298.6 426.2,1296.9 426.9,1301.8 427.6,1306 428.4,1305.4 429.2,1301.9 429.9,1296.4 430.6,1289.9 431.4,1287.6 432.2,1290.7 432.9,1295.7 433.6,1297.3 434.4,1296.8 435.2,1299.1 435.9,1300.6 436.6,1297 437.4,1295.6 438.2,1304.3 438.9,1310.2 439.6,1307.7 440.4,1306 441.2,1307.8 441.9,1308.6 442.6,1301.6 443.4,1297.8 444.2,1297.9 444.9,1296.6 445.6,1294.2 446.4,1293 447.2,1292.1 447.9,1297.6 448.6,1298.2 449.4,1294.2 450.2,1293.9 450.9,1298.1 451.6,1302.7 452.4,1302.4 453.2,1304.8 453.9,1311.8 454.6,1313.7 455.4,1313.7 456.2,1310.1 456.9,1303.5 457.6,1302.4 458.4,1305.2 459.2,1310.7 459.9,1311.6 460.6,1305.6 461.4,1307.5 462.2,1307 462.9,1301.6 463.6,1295.7 464.4,1295 465.2,1299.2 465.9,1300.7 466.6,1297.6 467.4,1294.8 468.2,1296.3 468.9,1300.5 469.6,1303.5 470.4,1299.6 471.2,1290.4 471.9,1287.4 472.6,1292.4 473.4,1298.6 474.2,1297.5 474.9,1304.8 475.6,1308.6 476.4,1301.6 477.2,1290.6 477.9,1284.4 478.6,1283.9 479.4,1286.4 480.2,1297.4 480.9,1300.6 481.6,1292.7 482.4,1287.8 483.2,1289 483.9,1291.2 484.6,1299.8 485.4,1312.3 486.2,1320.6 486.9,1321 487.6,1316.4 488.4,1316.9 489.2,1318.7 489.9,1309 490.6,1302.2 491.4,1305.4 492.2,1310 492.9,1311 493.6,1309.9 494.4,1303.7 495.2,1297.2 495.9,1293.8 496.6,1291.3 497.4,1290.3 498.2,1289.4 498.9,1287.6 499.6,1292 500.4,1302.9 501.2,1310.6 501.9,1309.5 502.6,1306.1 503.4,1305.3 504.2,1306.1 504.9,1311 505.6,1315.2 506.4,1312.5 507.2,1311.4 507.9,1309.4 508.6,1302.2 509.4,1298.4 510.2,1296.8 510.9,1294 511.6,1292.2 512.4,1298.8 513.2,1302.8 513.9,1299.3 514.6,1293.9 515.4,1288.8 516.2,1288.1 516.9,1290.2 517.6,1283.1 518.4,1281.9 519.2,1288.7 519.9,1296.3 520.6,1295 521.4,1294.4 522.2,1299.6 522.9,1305.4 523.6,1303.1 524.4,1299 525.2,1296 525.9,1296.7 526.6,1302.2 527.4,1306.5 528.2,1305.6 528.9,1307.8 529.6,1316.8 530.4,1317.4 531.2,1304.7 531.9,1300.4 532.6,1303 533.4,1302 534.2,1297.1 534.9,1296.2 535.6,1296.5 536.4,1299.8 537.2,1308.2 537.9,1315.5 538.6,1315.3 539.4,1313.7 540.2,1306.1 540.9,1298.3 541.6,1292.5 542.4,1289.7 543.2,1291.2 543.9,1297.7 544.6,1302.6 545.4,1298.9 546.2,1291.3 546.9,1293.5 547.6,1295.3 548.4,1293.4 549.2,1300 549.9,1309.4 550.6,1312.2 551.4,1307.8 552.2,1312.2 552.9,1319.9 553.6,1315.7 554.4,1311 555.2,1309.4 555.9,1299.6 556.6,1289.9 557.4,1286.8 558.2,1292 558.9,1301.2 559.6,1305.7 560.4,1302.8 561.2,1296.9 561.9,1293.5 562.6,1294.4 563.4,1296.5 564.2,1299.8 564.9,1300.6 565.6,1295 566.4,1298.9 567.2,1302.4 567.9,1298.8 568.6,1295.5 569.4,1297.7 570.2,1301.8 570.9,1303.8 571.6,1302.9 572.4,1301.5 573.2,1301.8 573.9,1302.9 574.6,1308 575.4,1312.9 576.2,1310.3 576.9,1305 577.6,1306.1 578.4,1307.6 579.2,1300.9 579.9,1290.6 580.6,1285 581.4,1287.1 582.2,1290.1 582.9,1287.5 583.6,1286.5 584.4,1290.7 585.2,1294.6 585.9,1296 586.6,1296 587.4,1302.5 588.2,1306.7 588.9,1305.2 589.6,1301.6 590.4,1304.8 591.2,1313.7 591.9,1315.8 592.6,1311.3 593.4,1303.6 594.2,1299.8 594.9,1296.8 595.6,1292.1 596.4,1291.5 597.2,1292.1 597.9,1287.8 598.6,1286.5 599.4,1287.3 600.2,1290.4 600.9,1296.4 601.6,1301.5 602.4,1302 603.2,1300.9 603.9,1304.9 604.6,1311.6 605.4,1311.5 606.2,1308.3 606.9,1302.5 607.6,1299.3 608.4,1294.7 609.2,1295.7 609.9,1302.5 610.6,1300.2 611.4,1294 612.2,1292.1 612.9,1296.1 613.6,1302 614.4,1303.4 615.2,1298.9 615.9,1296.2 616.6,1303 617.4,1307.9 618.2,1309.5 618.9,1309.2 619.6,1309.7 620.4,1303.8 621.2,1296.1 621.9,1294.6 622.6,1299.9 623.4,1297.7 624.2,1296.1 624.9,1299.4 625.6,1299.8 626.4,1296.5 627.2,1291.9 627.9,1288.1 628.6,1290.2 629.4,1299.2 630.2,1305.8 630.9,1307.4 631.6,1307.7 632.4,1310.2 633.2,1312.4 633.9,1310.7 634.6,1305.5 635.4,1299.3 636.2,1295.4 636.9,1296.2 637.6,1296 638.4,1290.6 639.2,1291.9 639.9,1294.4 640.6,1292.6 641.4,1293 642.2,1297.8 642.9,1302.3 643.6,1311.2 644.4,1313.5 645.2,1303 645.9,1295.5 646.6,1299.9 647.4,1301.8 648.2,1299.1 648.9,1297.4 649.6,1295.5 650.4,1295.2 651.2,1295.9 651.9,1294.5 652.6,1295.9 653.4,1299.6 654.2,1300.9 654.9,1302.6 655.6,1310.8 656.4,1312.3 657.2,1309.7 657.9,1303.3 658.6,1299.9 659.4,1299.2 660.2,1297.4 660.9,1293.4 661.6,1290.5 662.4,1291.9 663.2,1295.4 663.9,1295 664.6,1292.8 665.4,1293 666.2,1298.9 666.9,1303.5 667.6,1302.9 668.4,1301.2 669.2,1301.5 669.9,1305 670.6,1305.3 671.4,1303.6 672.2,1306.2 672.9,1309 673.6,1307.2 674.4,1301.8 675.2,1297.2 675.9,1293.5 676.6,1292.3 677.4,1295.1 678.2,1299.5 678.9,1300.9 679.6,1301 680.4,1300.9 681.2,1301.5 681.9,1304.1 682.6,1303 683.4,1299.4 684.2,1297.2 684.9,1296.6 685.6,1297.8 686.4,1299.8 687.2,1297.8 687.9,1296.5 688.6,1297.9 689.4,1299.2 690.2,1302.6 690.9,1306.6 691.6,1306.5 692.4,1303.2 693.2,1304.3 693.9,1306.9 694.6,1306.2 695.4,1303.1 696.2,1299.4 696.9,1297 697.6,1297.1 698.4,1298.3 699.2,1296.4 699.9,1296.4 700.6,1296.8 701.4,1298.7 702.2,1301.8 702.9,1304.1 703.6,1304.8 704.4,1304.9 705.2,1304.9 705.9,1304.4 706.6,1303.3 707.4,1302.5 708.2,1301.8 708.9,1298.7 709.6,1297 710.4,1296.6 711.2,1295.6 711.9,1293.7 712.6,1293.8 713.4,1298 714.2,1301 714.9,1301.3 715.6,1300.6 716.4,1302.1 717.2,1303.7 717.9,1302.5 718.6,1301.6 719.4,1301.4 720.2,1300 720.9,1299.8 721.6,1301.2 722.4,1301.3 723.2,1300.7 723.9,1300.2 724.6,1302.7 725.4,1305.4 726.2,1305.2 726.9,1302.5 727.6,1301.1 728.4,1303.8 729.2,1306.3 729.9,1304.3 730.6,1305.2 731.4,1304.3 732.2,1299 732.9,1296.4 733.6,1297 734.4,1297 735.2,1295.9 735.9,1294.5 736.6,1294.3 737.4,1294.9 738.2,1298.6 738.9,1300.8 739.6,1301.1 740.4,1301.4 741.2,1303.2 741.9,1304.7 742.6,1304.2 743.4,1302.3 744.2,1300.4 744.9,1301.8 745.6,1303.7 746.4,1303.2 747.2,1301.8 747.9,1302.7 748.6,1304.4 749.4,1301.8 750.2,1298.4 750.9,1297.3 751.6,1299.3 752.4,1300.2 753.2,1300.4 753.9,1301.5 754.6,1300.4 755.4,1298.2 756.2,1298.6 756.9,1300.7 757.6,1300.7 758.4,1298.6 759.2,1298.4 759.9,1301.2 760.6,1302.8 761.4,1300.5 762.2,1301.3 762.9,1302.3 763.6,1301.2 764.4,1302.8 765.2,1306.1 765.9,1305.7 766.6,1301.9 767.4,1299 768.2,1299.1 768.9,1301.5 769.6,1299.8 770.4,1298.1 771.2,1300.6 771.9,1302.5 772.6,1300 773.4,1294.5 774.2,1290.8 774.9,1291.8 775.6,1298.6 776.4,1300.5 777.2,1298 777.9,1296.5 778.6,1297.1 779.4,1294.8 780.2,1291.6 780.9,1297.3 781.6,1301.8 782.4,1303.3 783.2,1303.9 783.9,1305.8 784.6,1308.8 785.4,1306.3 786.2,1297.4 786.9,1291.9 787.6,1292.3 788.4,1291.7 789.2,1287.4 789.9,1295 790.6,1301.7 791.4,1303 792.2,1303.3 792.9,1304.3 793.6,1303.4 794.4,1301.1 795.2,1297.3 795.9,1293.4 796.6,1295.4 797.4,1298.3 798.2,1299.5 798.9,1301.8 799.6,1304.2 800.4,1304 801.2,1302.3 801.9,1303.2 802.6,1306.7 803.4,1306.2 804.2,1302.5 804.9,1298.3 805.6,1294.6 806.4,1293.4 807.2,1295.4 807.9,1296.3 808.6,1295.7 809.4,1295 810.2,1294.6 810.9,1292.4 811.6,1287.6 812.4,1286.5 813.2,1292.1 813.9,1298.9 814.6,1301.2 815.4,1299 816.2,1297.5 816.9,1299.4 817.6,1300.9 818.4,1298.8 819.2,1298.5 819.9,1296.7 820.6,1293.9 821.4,1295.6 822.2,1295.8 822.9,1297.6 823.6,1302.1 824.4,1304.1 825.2,1305 825.9,1306.5 826.6,1304.4 827.4,1299.7 828.2,1299.9 828.9,1304.1 829.6,1306.9 830.4,1308.3 831.2,1308.5 831.9,1306.5 832.6,1302.9 833.4,1302.3 834.2,1299.1 834.9,1296.8 835.6,1298.6 836.4,1300.5 837.2,1302.5 837.9,1302.8 838.6,1298.9 839.4,1293.1 840.2,1291.6 840.9,1292.6 841.6,1293.6 842.4,1294.5 843.2,1291.9 843.9,1294.4 844.6,1298.1 845.4,1297.8 846.2,1301.8 846.9,1307.5 847.6,1308 848.4,1307.7 849.2,1308.8 849.9,1309.8 850.6,1311.4 851.4,1310.9 852.2,1307.1 852.9,1302.1 853.6,1294.2 854.4,1286 855.2,1285.6 855.9,1287.3 856.6,1295.8 857.4,1299.2 858.2,1297.7 858.9,1298.4 859.6,1300.7 860.4,1301.1 861.2,1300 861.9,1299.3 862.6,1298.3 863.4,1298 864.2,1301.5 864.9,1306.5 865.6,1306.8 866.4,1307.7 867.2,1309.3 867.9,1307 868.6,1303.2 869.4,1300.2 870.2,1300.7 870.9,1301.6 871.6,1300.1 872.4,1301.7 873.2,1303.7 873.9,1300.9 874.6,1296 875.4,1297.3 876.2,1299.9 876.9,1295.6 877.6,1295.3 878.4,1297.4 879.2,1298.3 879.9,1298.5 880.6,1301 881.4,1302.2 882.2,1302 882.9,1302 883.6,1300.9 884.4,1296 885.2,1292.8 885.9,1295.3 886.6,1300.3 887.4,1304.2 888.2,1305 888.9,1304.3 889.6,1306.2 890.4,1307.5 891.2,1306.1 891.9,1302.7 892.6,1299.9 893.4,1301.5 894.2,1304.1 894.9,1303.9 895.6,1302.1 896.4,1300 897.2,1297 897.9,1295 898.6,1295.7 899.4,1298.7 900.2,1300.9 900.9,1300.2 901.6,1297.4 902.4,1295.1 903.2,1294.8 903.9,1296.2 904.6,1298.3 905.4,1299.8 906.2,1300 906.9,1300.7 907.6,1302.2 908.4,1303.6 909.2,1302.1 909.9,1300.1 910.6,1300.1 911.4,1300.3 912.2,1299.9 912.9,1300.4 913.6,1302.3 914.4,1302.8 915.2,1301 915.9,1300.4 916.6,1302.7 917.4,1301.5 918.2,1301 918.9,1302 919.6,1303.5 920.4,1303.5 921.2,1300.7 921.9,1298.3 922.6,1299.1 923.4,1301.2 924.2,1302 924.9,1301.2 925.6,1299.6 926.4,1298.4 927.2,1298.1 927.9,1298.3 928.6,1300.3 929.4,1303.2 930.2,1304.4 930.9,1302.9 931.6,1302.9 932.4,1304.3 933.2,1302.1 933.9,1297.9 934.6,1295.3 935.4,1295.3 936.2,1297.7 936.9,1299.7 937.6,1298.8 938.4,1296.7 939.2,1296.7 939.9,1299.4 940.6,1302.2 941.4,1303.2 942.2,1302.4 942.9,1301.2 943.6,1300.1 944.4,1300 945.2,1302.4 945.9,1306.5 946.6,1307.9 947.4,1306.1 948.2,1307.2 948.9,1305.2 949.6,1299.9 950.4,1297.1 951.2,1298.4 951.9,1299.1 952.6,1297.6 953.4,1295.7 954.2,1296.2 954.9,1299.6 955.6,1302.6 956.4,1306.1 957.2,1303.6 957.9,1302 958.6,1303.1 959.4,1301.5 960.2,1297.6 960.9,1298.3 961.6,1298.6 962.4,1298 963.2,1297.1 963.9,1295.8 964.6,1296.5 965.4,1299.5 966.2,1300.3 966.9,1298.4 967.6,1297.3 968.4,1298.3 969.2,1299.6 969.9,1299.3 970.6,1298.5 971.4,1299.9 972.2,1303.8 972.9,1305.6 973.6,1304.9 974.4,1305.5 975.2,1305.5 975.9,1304.1 976.6,1302 977.4,1300.7 978.2,1301.3 978.9,1299.4 979.6,1297.4 980.4,1296.7 981.2,1297.7 981.9,1299.9 982.6,1301.1 983.4,1299.9 984.2,1298.1 984.9,1297.7 985.6,1298 986.4,1298.4 987.2,1298.2 987.9,1297 988.6,1297 989.4,1299.7 990.2,1302.7 990.9,1302.8 991.6,1303.3 992.4,1305.5 993.2,1306.8 993.9,1305.9 994.6,1303.6 995.4,1303.1 996.2,1301.4 996.9,1298.3 997.6,1298.3 998.4,1299.2 999.2,1299 999.9,1297.6 1000.6,1295.8 1001.4,1295.7 1002.2,1299.7 1002.9,1304.2 1003.6,1305.1 1004.4,1303.1 1005.2,1299.9 1005.9,1298.1 1006.6,1298.2 1007.4,1297.9 1008.2,1297.8 1008.9,1297.7 1009.6,1298.5 1010.4,1300.1 1011.2,1299.5 1011.9,1297.2 1012.6,1298.5 1013.4,1299.1 1014.2,1298.4 1014.9,1298.3 1015.6,1298.8 1016.4,1300.7 1017.2,1304.5 1017.9,1306.1 1018.6,1306.2 1019.4,1305.5 1020.2,1303.6 1020.9,1302.2 1021.6,1299.9 1022.4,1298.1 1023.2,1298.7 1023.9,1299.9 1024.6,1300.9 1025.4,1303.6 1026.2,1304.4 1026.9,1301.4 1027.6,1299.3 1028.4,1300.7 1029.2,1301.7 1029.9,1300.7 1030.6,1299.7 1031.4,1300.3 1032.2,1301 1032.9,1299.6 1033.6,1297.6 1034.4,1297 1035.2,1297.1 1035.9,1297.7 1036.6,1299.7 1037.4,1300.7 1038.2,1301.1 1038.9,1302.9 1039.6,1303.3 1040.4,1302.5 1041.2,1301.1 1041.9,1300 1042.6,1299.8 1043.4,1300.3 1044.2,1301.4 1044.9,1303.1 1045.6,1302.9 1046.4,1301.2 1047.2,1300.6 1047.9,1301 1048.6,1300.5 1049.4,1298.9 1050.2,1298.7 1050.9,1299.8 1051.6,1300.1 1052.4,1299.2 1053.2,1300.3 1053.9,1301 1054.6,1300.4 1055.4,1300 1056.2,1300.1 1056.9,1300 1057.6,1297.9 1058.4,1296.7 1059.2,1297.4 1059.9,1298.3 1060.6,1298.5 1061.4,1298.9 1062.2,1299.3 1062.9,1299.5 1063.6,1300.6 1064.4,1302.5 1065.2,1302.9 1065.9,1301.3 1066.6,1299.8 1067.4,1300.4 1068.2,1303.3 1068.9,1304.1 1069.6,1302.7 1070.4,1300.7 1071.2,1300.3 1071.9,1302.7 1072.6,1302.8 1073.4,1301 1074.2,1300.1 1074.9,1300.4 1075.6,1299.9 1076.4,1298.5 1077.2,1297.3 1077.9,1297.2 1078.6,1297.7 1079.4,1298.3 1080.2,1299.2 1080.9,1299.7 1081.6,1299.5 1082.4,1299 1083.2,1299.8 1083.9,1300.5 1084.6,1299.1 1085.4,1297.7 1086.2,1297.9 1086.9,1299.6 1087.6,1301.3 1088.4,1302.4 1089.2,1302.2 1089.9,1300.9 1090.6,1299.7 1091.4,1299.8 1092.2,1301.3 1092.9,1302.3 1093.6,1301.8 1094.4,1301.5 1095.2,1301.9 1095.9,1302.4 1096.6,1302 1097.4,1300.8 1098.2,1301 1098.9,1302.5 1099.6,1301.4 1100.4,1299.8 1101.2,1299.5 1101.9,1299.8 1102.6,1299.3 1103.4,1297.7 1104.2,1296.5 1104.9,1296.5 1105.6,1297.6 1106.4,1299.7 1107.2,1302 1107.9,1303.3 1108.6,1303.2 1109.4,1305 1110.2,1305.1 1110.9,1304.4 1111.6,1301.6 1112.4,1299.4 1113.2,1297.6 1113.9,1296.8 1114.6,1298.3 1115.4,1300.4 1116.2,1300.1 1116.9,1301.3 1117.6,1301.2 1118.4,1298.9 1119.2,1298.5 1119.9,1300 1120.6,1301.4 1121.4,1303.8 1122.2,1304.4 1122.9,1302.5 1123.6,1300.6 1124.4,1301 1125.2,1299.5 1125.9,1297.8 1126.6,1297.2 1127.4,1297.8 1128.2,1298.4 1128.9,1299.1 1129.6,1299.8 1130.4,1303.8 1131.2,1304.6 1131.9,1303.4 1132.6,1302.5 1133.4,1302 1134.2,1300.7 1134.9,1297.5 1135.6,1295.2 1136.4,1295.3 1137.2,1296.8 1137.9,1298 1138.6,1297.7 1139.4,1299.2 1140.2,1302 1140.9,1303.9 1141.6,1304.3 1142.4,1304 1143.2,1304.1 1143.9,1304.6 1144.6,1304.1 1145.4,1304.4 1146.2,1301.3 1146.9,1298.8 1147.6,1298.2 1148.4,1298.3 1149.2,1298.4 1149.9,1299.1 1150.6,1298.9 1151.4,1296.9 1152.2,1296.6 1152.9,1299.8 1153.6,1300.9 1154.4,1300.4 1155.2,1298.9 1155.9,1296.2 1156.6,1295.4 1157.4,1297 1158.2,1298.8 1158.9,1301.5 1159.6,1301.9 1160.4,1299.7 1161.2,1298.8 1161.9,1300.1 1162.6,1299 1163.4,1300.4 1164.2,1302.3 1164.9,1300.9 1165.6,1300.3 1166.4,1302 1167.2,1303.7 1167.9,1303.7 1168.6,1303.8 1169.4,1302.8 1170.2,1300.4 1170.9,1299.1 1171.6,1300.5 1172.4,1301.9 1173.2,1302.5 1173.9,1302 1174.6,1300.2 1175.4,1298.4 1176.2,1297.7 1176.9,1297.6 1177.6,1297.1 1178.4,1297.6 1179.2,1298.3 1179.9,1298.3 1180.6,1297.5 1181.4,1297.3 1182.2,1298.3 1182.9,1299.8 1183.6,1301.1 1184.4,1302.2 1185.2,1302.5 1185.9,1301.5 1186.6,1300 1187.4,1299.2 1188.2,1299.6 1188.9,1301.1 1189.6,1302.4 1190.4,1302.9 1191.2,1302.8 1191.9,1301.7 1192.6,1300.7 1193.4,1300.6 1194.2,1300.3 1194.9,1300 1195.6,1300.2 1196.4,1300.4 1197.2,1300.3 1197.9,1299.7 1198.6,1299.2 1199.4,1299 1200.2,1298.7 1200.9,1298.7 1201.6,1299.5 1202.4,1300.7 1203.2,1301.4 1203.9,1301.3 1204.6,1301.5 1205.4,1302 1206.2,1301.4 1206.9,1300.7 1207.6,1300.6 1208.4,1300.7 1209.2,1300.5 1209.9,1300.2 1210.6,1299.7 1211.4,1299.2 1212.2,1299.5 1212.9,1300.6 1213.6,1301.4 1214.4,1301.3 1215.2,1301.6 1215.9,1301.6 1216.6,1301.2 1217.4,1300.6 1218.2,1300.2 1218.9,1300.2 1219.6,1300.4 1220.4,1299.9 1221.2,1299.7 1221.9,1300.2 1222.6,1300.5 1223.4,1300.4 1224.2,1300.1 1224.9,1299.8 1225.6,1300 1226.4,1300.6 1227.2,1300.6 1227.9,1300.4 1228.6,1300.4 1229.4,1300.5 1230.2,1300.8 1230.9,1301 1231.6,1300.9 1232.4,1300.9 1233.2,1300.9 1233.9,1300.7 1234.6,1300.3 1235.4,1300.1 1236.2,1300 1236.9,1299.8 1237.6,1299.5 1238.4,1299.4 1239.2,1299.6 1239.9,1299.8 1240.6,1300 1241.4,1300.2 1242.2,1300.5 1242.9,1300.7 1243.6,1300.9 1244.4,1300.9 1245.2,1300.7 1245.9,1300.6 1246.6,1300.5 1247.4,1300.4 1248.2,1300.6 1248.9,1300.6 1249.6,1300.4 1250.4,1300.4 1251.2,1300.8 1251.9,1300.7 1252.6,1300.4 1253.4,1300.2 1254.2,1300.3 1254.9,1300.1 1255.6,1299.8 1256.4,1299.8 1257.2,1299.9 1257.9,1300.2 1258.6,1300.4 1259.4,1300.3 1260.2,1300.3 1260.9,1300.5 1261.6,1300.5 1262.4,1300.3 1263.2,1300.2 1263.9,1300.3 1264.6,1300.4 1265.4,1300.4 1266.2,1300.4 1266.9,1300.3 1267.6,1300.3 1268.4,1300.3 1269.2,1300.4 1269.9,1300.5 1270.6,1300.6 1271.4,1300.4 1272.2,1300.2 1272.9,1300.3 1273.6,1300.4 1274.4,1300.4 1275.2,1300.4 1275.9,1300.4 1276.6,1300.5 1277.4,1300.4 1278.2,1300.4 1278.9,1300.4 1279.6,1300.4 1280.4,1300.4 1281.2,1300.4 1281.9,1300.4 1282.6,1300.4 1283.4,1300.4 1284.2,1300.4 1284.9,1300.4 1285.6,1300.3 1286.4,1300.3 1287.2,1300.4 1287.9,1300.4 1288.6,1300.4 1289.4,1300.4 1290.2,1300.4 1290.9,1300.4 1291.6,1300.4 1292.4,1300.4 1293.2,1300.4 1293.9,1300.4 1294.6,1300.4 1295.4,1300.4 1296.2,1300.4 1296.9,1300.4 1297.6,1300.4 1298.4,1300.4 1299.2,1300.4 1299.9,1300.4 1300.6,1300.4 1301.4,1300.4 1302.2,1300.4 1302.9,1300.4 1303.6,1300.4"/>
<text x="79.5" y="1210.7" font-family="'Liberation Sans',sans-serif" font-size="10" fill="#000" text-anchor="end" letter-spacing="0.3">0.339</text>
<text x="79.5" y="1231.5" font-family="'Liberation Sans',sans-serif" font-size="10" fill="#000" text-anchor="end" letter-spacing="0.3">0.266</text>
<text x="79.5" y="1252.6" font-family="'Liberation Sans',sans-serif" font-size="10" fill="#000" text-anchor="end" letter-spacing="0.3">0.198</text>
<text x="79.5" y="1273.4" font-family="'Liberation Sans',sans-serif" font-size="10" fill="#000" text-anchor="end" letter-spacing="0.3">0.128</text>
<text x="79.5" y="1294.4" font-family="'Liberation Sans',sans-serif" font-size="10" fill="#000" text-anchor="end" letter-spacing="0.3">0.057</text>
<text x="79.5" y="1345.6" font-family="'Liberation Sans',sans-serif" font-size="10" fill="#000" text-anchor="end" letter-spacing="0.3">-0.117</text>
<text x="79.5" y="1366.4" font-family="'Liberation Sans',sans-serif" font-size="10" fill="#000" text-anchor="end" letter-spacing="0.3">-0.188</text>
<text x="79.5" y="1387.5" font-family="'Liberation Sans',sans-serif" font-size="10" fill="#000" text-anchor="end" letter-spacing="0.3">-0.258</text>
<text x="79.5" y="1408.6" font-family="'Liberation Sans',sans-serif" font-size="10" fill="#000" text-anchor="end" letter-spacing="0.3">-0.328</text>
<text x="79.5" y="1429.7" font-family="'Liberation Sans',sans-serif" font-size="10" fill="#000" text-anchor="end" letter-spacing="0.3">-0.397</text>
<text x="40" y="1129" font-family="'Liberation Sans',sans-serif" font-size="14.7" fill="#000">Zaman Tanım Alanı Fonksiyonları</text>
<text x="1419" y="1324.2" font-family="'Liberation Sans',sans-serif" font-size="14.7" fill="#000" text-anchor="end">Periyot [s]</text>
<text x="1195.9" y="1132" font-family="'DejaVu Sans',sans-serif" font-size="14" fill="#333" letter-spacing="0.24" xml:space="preserve">X = 6.186 [s],  Y = -0.003</text>
<text x="1389" y="1160" font-family="'DejaVu Sans',sans-serif" font-size="13" fill="#3a0000" text-anchor="end" letter-spacing="0.8">GÖSTERGE</text>
<line x1="1290" y1="1164.5" x2="1390" y2="1164.5" stroke="#000" stroke-width="1.2"/>
<text x="1388.6" y="1182" font-family="'DejaVu Sans',sans-serif" font-size="12" fill="#6464d2" text-anchor="end" font-weight="bold" letter-spacing="0.55">[lomapnas_ns_005]</text>
<text x="1388.4" y="1199.7" font-family="'DejaVu Sans',sans-serif" font-size="12" fill="#d0606f" text-anchor="end">Scaled</text>
</svg>
<div id="log">
<div class="t" style="top:93px;font-size:17px;line-height:19px;left:1498px;">Ölçekleme faktörü, 'kocaeli_ew_01' için hesaplanıyor.</div>
<div class="t" style="top:113px;font-size:17px;line-height:19px;left:1498px;">Ölçekleme faktörü, 'kocaeli_ns_01' için hesaplanıyor.</div>
<div class="t" style="top:133px;font-size:17px;line-height:19px;left:1498px;">Her 'kocaeli_ew_01' &amp; 'kocaeli_ns_01' için SRSS değeri hesaplanıyor</div>
<div class="t" style="top:153px;font-size:17px;line-height:19px;left:1498px;">Ölçekleme faktörü, 'lomapa2e_ew_005' için hesaplanıyor.</div>
<div class="t" style="top:173px;font-size:17px;line-height:19px;left:1498px;">Ölçekleme faktörü, 'lomapa2e_ns_005' için hesaplanıyor.</div>
<div class="t" style="top:193px;font-size:17px;line-height:19px;left:1498px;">Her 'lomapa2e_ew_005' &amp; 'lomapa2e_ns_005' için SRSS değeri hesaplanıyor</div>
<div class="t" style="top:213px;font-size:17px;line-height:19px;left:1498px;">Ölçekleme faktörü, 'lomapnas_ew_005' için hesaplanıyor.</div>
<div class="t" style="top:233px;font-size:17px;line-height:19px;left:1498px;">Ölçekleme faktörü, 'lomapnas_ns_005' için hesaplanıyor.</div>
<div class="t" style="top:253px;font-size:17px;line-height:19px;left:1498px;">Her 'lomapnas_ew_005' &amp; 'lomapnas_ns_005' için SRSS değeri hesaplanıyor</div>
<div class="t" style="top:273px;font-size:17px;line-height:19px;left:1498px;">Ölçekleme faktörü, 'northmul_ew_01' için hesaplanıyor.</div>
<div class="t" style="top:293px;font-size:17px;line-height:19px;left:1498px;">Ölçekleme faktörü, 'northmul_ns_01' için hesaplanıyor.</div>
<div class="t" style="top:313px;font-size:17px;line-height:19px;left:1498px;">Her 'northmul_ew_01' &amp; 'northmul_ns_01' için SRSS değeri hesaplanıyor</div>
<div class="t" style="top:333px;font-size:17px;line-height:19px;left:1498px;">Ölçekleme faktörü, 'northorr_ew_02' için hesaplanıyor.</div>
<div class="t" style="top:353px;font-size:17px;line-height:19px;left:1498px;">Ölçekleme faktörü, 'northorr_ns_02' için hesaplanıyor.</div>
<div class="t" style="top:373px;font-size:17px;line-height:19px;left:1498px;">Her 'northorr_ew_02' &amp; 'northorr_ns_02' için SRSS değeri hesaplanıyor</div>
<div class="t" style="top:393px;font-size:17px;line-height:19px;left:1498px;">Ölçekleme faktörü, 'superst_ew_01' için hesaplanıyor.</div>
<div class="t" style="top:413px;font-size:17px;line-height:19px;left:1498px;">Ölçekleme faktörü, 'superst_ns_01' için hesaplanıyor.</div>
<div class="t" style="top:433px;font-size:17px;line-height:19px;left:1498px;">Her 'superst_ew_01' &amp; 'superst_ns_01' için SRSS değeri hesaplanıyor</div>
<div class="t" style="top:453px;font-size:17px;line-height:19px;left:1498px;">Ölçekleme faktörü, 'van_ew_01' için hesaplanıyor.</div>
<div class="t" style="top:473px;font-size:17px;line-height:19px;left:1498px;">Ölçekleme faktörü, 'van_ns_01' için hesaplanıyor.</div>
<div class="t" style="top:493px;font-size:17px;line-height:19px;left:1498px;">Her 'van_ew_01' &amp; 'van_ns_01' için SRSS değeri hesaplanıyor</div>
<div class="t" style="top:513px;font-size:17px;line-height:19px;left:1498px;">Ölçekleme katsayıları uygulanıyor.</div>
<div class="t" style="top:533px;font-size:17px;line-height:19px;left:1498px;">Her zaman adımı için ortalama SRSS değerleri hesaplanıyor.</div>
<div class="t" style="top:553px;font-size:17px;line-height:19px;left:1498px;">(ortalama SRSS / spectrum) oranını kontrol et, değer 1.3'den büyük olmalıdır.</div>
<div class="t" style="top:573px;font-size:17px;line-height:19px;left:1498px;color:#37b837;font-weight:bold;letter-spacing:0.0px;">(ortalama SRSS / spektrum) oranı, 0.2T ~ 1.5T noktaları arasında 1.3'den daha büyük.</div>
<div class="abs" style="left:2389px;top:92px;width:1px;height:523px;background:#fafafa"></div>
<div class="abs" style="left:2390px;top:265px;width:24px;height:324px;background:#cdcdcd"></div>
<svg class="abs" style="left:2390px;top:92px" width="24" height="26" viewBox="0 0 24 26"><path d="M7.4 17.6 L12.4 12.6 L17.4 17.6" stroke="#606060" stroke-width="2.5" fill="none"/></svg>
<svg class="abs" style="left:2390px;top:589px" width="24" height="26" viewBox="0 0 24 26"><path d="M7.4 9.8 L12.4 14.8 L17.4 9.8" stroke="#606060" stroke-width="2.5" fill="none"/></svg>
</div>
<div class="btn" style="left:1993px;top:683px;width:194px;height:56px"></div>
<div class="t" style="top:701.5px;font-size:17px;line-height:19px;left:1993px;width:194px;text-align:center;letter-spacing:-0.6px;">Akıllı Seçim</div>
<div class="btn" style="left:2218px;top:683px;width:194px;height:56px"></div>
<div class="t" style="top:701.5px;font-size:17px;line-height:19px;left:2218px;width:194px;text-align:center;letter-spacing:-0.6px;">Dosyadan Yükle...</div>
<div id="grid">
<div class="abs" style="left:0;top:0;width:917px;height:2px;background:#696969"></div>
<div class="abs" style="left:0;top:0;width:2px;height:431px;background:#696969"></div>
<div class="abs" style="left:0;top:430px;width:917px;height:1px;background:#fff"></div>
<div class="abs" style="left:916px;top:0;width:1px;height:431px;background:#fff"></div>
<div class="abs" style="left:2px;top:2px;width:888px;height:36px;background:#f0f0f0"></div>
<div class="abs" style="left:45px;top:2px;width:1px;height:36px;background:#696969"></div>
<div class="abs" style="left:46px;top:2px;width:1px;height:36px;background:#fff"></div>
<div class="abs" style="left:267px;top:2px;width:1px;height:36px;background:#696969"></div>
<div class="abs" style="left:268px;top:2px;width:1px;height:36px;background:#fff"></div>
<div class="abs" style="left:489px;top:2px;width:1px;height:36px;background:#696969"></div>
<div class="abs" style="left:490px;top:2px;width:1px;height:36px;background:#fff"></div>
<div class="abs" style="left:600px;top:2px;width:1px;height:36px;background:#696969"></div>
<div class="abs" style="left:601px;top:2px;width:1px;height:36px;background:#fff"></div>
<div class="abs" style="left:711px;top:2px;width:1px;height:36px;background:#696969"></div>
<div class="abs" style="left:712px;top:2px;width:1px;height:36px;background:#fff"></div>
<div class="abs" style="left:800px;top:2px;width:1px;height:36px;background:#696969"></div>
<div class="abs" style="left:801px;top:2px;width:1px;height:36px;background:#fff"></div>
<div class="abs" style="left:889px;top:2px;width:1px;height:36px;background:#696969"></div>
<div class="abs" style="left:2px;top:38px;width:888px;height:1px;background:#696969"></div>
<div class="hl" style="left:2px;top:76px;width:888px"></div>
<div class="hl" style="left:2px;top:114px;width:888px"></div>
<div class="hl" style="left:2px;top:152px;width:888px"></div>
<div class="hl" style="left:2px;top:190px;width:888px"></div>
<div class="hl" style="left:2px;top:228px;width:888px"></div>
<div class="hl" style="left:2px;top:266px;width:888px"></div>
<div class="hl" style="left:2px;top:304px;width:888px"></div>
<div class="hl" style="left:2px;top:342px;width:888px"></div>
<div class="hl" style="left:2px;top:380px;width:888px"></div>
<div class="hl" style="left:2px;top:418px;width:888px"></div>
<div class="vl" style="left:45px;top:39px;height:391px"></div>
<div class="vl" style="left:267px;top:39px;height:391px"></div>
<div class="vl" style="left:489px;top:39px;height:391px"></div>
<div class="vl" style="left:600px;top:39px;height:391px"></div>
<div class="vl" style="left:711px;top:39px;height:391px"></div>
<div class="vl" style="left:800px;top:39px;height:391px"></div>
<div class="vl" style="left:889px;top:39px;height:391px"></div>
<div class="c n" style="left:8px;top:11.8px">#</div>
<div class="c n" style="left:52.3px;top:11.8px">East-West</div>
<div class="c n" style="left:274.3px;top:11.8px;letter-spacing:0.45px">North-South</div>
<div class="c n" style="left:496.2px;top:11.8px">Scale Coeff.</div>
<div class="c n" style="left:607.2px;top:11.8px">Scale Factor</div>
<div class="c n" style="left:718.4px;top:11.8px">E-W Peak</div>
<div class="c n" style="left:807.4px;top:11.8px">N-S Peak</div>
<div class="abs" style="left:47px;top:40px;width:193px;height:35px;background:#0078d7"></div>
<div class="abs" style="left:241px;top:40px;width:26px;height:36px;background:#f0f0f0;border-right:2px solid #696969;border-bottom:2px solid #696969;border-top:1px solid #fff;border-left:1px solid #fff"></div>
<svg class="abs" style="left:246px;top:53px" width="14" height="9" viewBox="0 0 14 9"><path d="M0.5 1 L13.5 1 L7 8 Z" fill="#000"/></svg>
<div class="c" style="left:8px;top:49.9px">1</div>
<div class="c n" style="left:51.7px;top:49.9px;color:#fff">Chalfant_ew_005</div>
<div class="c n" style="left:273.8px;top:49.9px">chalfant_ns_005</div>
<div class="c" style="left:495.4px;top:49.9px">1</div>
<div class="c" style="left:606.4px;top:49.9px">2.34585</div>
<div class="c" style="left:717.6px;top:49.9px">0.491099</div>
<div class="c" style="left:806.6px;top:49.9px">0.418769</div>
<div class="c" style="left:8px;top:87.9px">2</div>
<div class="c n" style="left:51.7px;top:87.9px">chichi_ew_005</div>
<div class="c n" style="left:273.8px;top:87.9px">chichi_ns_005</div>
<div class="c" style="left:495.4px;top:87.9px">1.2</div>
<div class="c" style="left:606.4px;top:87.9px">1.2092</div>
<div class="c" style="left:717.6px;top:87.9px">0.572048</div>
<div class="c" style="left:806.6px;top:87.9px">0.612853</div>
<div class="c" style="left:8px;top:126.0px">3</div>
<div class="c n" style="left:51.7px;top:126.0px">impvall_ew_005</div>
<div class="c n" style="left:273.8px;top:126.0px">impvall_ns_005</div>
<div class="c" style="left:495.4px;top:126.0px">1.2</div>
<div class="c" style="left:606.4px;top:126.0px">2.30924</div>
<div class="c" style="left:717.6px;top:126.0px">0.506927</div>
<div class="c" style="left:806.6px;top:126.0px">0.375494</div>
<div class="c" style="left:8px;top:164.0px">4</div>
<div class="c n" style="left:51.7px;top:164.0px">kobe_ew_01</div>
<div class="c n" style="left:273.8px;top:164.0px">kobe_ns_01</div>
<div class="c" style="left:495.4px;top:164.0px">1.2</div>
<div class="c" style="left:606.4px;top:164.0px">1.68485</div>
<div class="c" style="left:717.6px;top:164.0px">0.546186</div>
<div class="c" style="left:806.6px;top:164.0px">0.404857</div>
<div class="c" style="left:8px;top:202.1px">5</div>
<div class="c n" style="left:51.7px;top:202.1px">kocaeli_ew_01</div>
<div class="c n" style="left:273.8px;top:202.1px">kocaeli_ns_01</div>
<div class="c" style="left:495.4px;top:202.1px">1.3</div>
<div class="c" style="left:606.4px;top:202.1px">2.2598</div>
<div class="c" style="left:717.6px;top:202.1px">0.520139</div>
<div class="c" style="left:806.6px;top:202.1px">0.373196</div>
<div class="c" style="left:8px;top:240.1px">6</div>
<div class="c n" style="left:51.7px;top:240.1px">lomapa2e_ew_005</div>
<div class="c n" style="left:273.8px;top:240.1px">lomapa2e_ns_005</div>
<div class="c" style="left:495.4px;top:240.1px">1.5</div>
<div class="c" style="left:606.4px;top:240.1px">5.90842</div>
<div class="c" style="left:717.6px;top:240.1px">0.496343</div>
<div class="c" style="left:806.6px;top:240.1px">0.574505</div>
<div class="c" style="left:8px;top:278.2px">7</div>
<div class="c n" style="left:51.7px;top:278.2px">lomapnas_ew_005</div>
<div class="c n" style="left:273.8px;top:278.2px">lomapnas_ns_005</div>
<div class="c" style="left:495.4px;top:278.2px">1.2</div>
<div class="c" style="left:606.4px;top:278.2px">4.60475</div>
<div class="c" style="left:717.6px;top:278.2px">0.386826</div>
<div class="c" style="left:806.6px;top:278.2px">0.396501</div>
<div class="c" style="left:8px;top:316.2px">8</div>
<div class="c n" style="left:51.7px;top:316.2px">northmul_ew_01</div>
<div class="c n" style="left:273.8px;top:316.2px">northmul_ns_01</div>
<div class="c" style="left:495.4px;top:316.2px">1.5</div>
<div class="c" style="left:606.4px;top:316.2px">4.8038</div>
<div class="c" style="left:717.6px;top:316.2px">0.71799</div>
<div class="c" style="left:806.6px;top:316.2px">0.448223</div>
<div class="c" style="left:8px;top:354.3px">9</div>
<div class="c n" style="left:51.7px;top:354.3px">northorr_ew_02</div>
<div class="c n" style="left:273.8px;top:354.3px">northorr_ns_02</div>
<div class="c" style="left:495.4px;top:354.3px">1.5</div>
<div class="c" style="left:606.4px;top:354.3px">1.12255</div>
<div class="c" style="left:717.6px;top:354.3px">0.637976</div>
<div class="c" style="left:806.6px;top:354.3px">0.577244</div>
<div class="c" style="left:8px;top:392.3px">10</div>
<div class="c n" style="left:51.7px;top:392.3px">superst_ew_01</div>
<div class="c n" style="left:273.8px;top:392.3px">superst_ns_01</div>
<div class="c" style="left:495.4px;top:392.3px">1.2</div>
<div class="c" style="left:606.4px;top:392.3px">1.49731</div>
<div class="c" style="left:717.6px;top:392.3px">0.711198</div>
<div class="c" style="left:806.6px;top:392.3px">0.428499</div>
<div class="abs" style="left:890px;top:2px;width:26px;height:428px;background:#f0f0f0"></div>
<div class="abs" style="left:891px;top:27px;width:24px;height:354px;background:#cdcdcd"></div>
<svg class="abs" style="left:891px;top:4px" width="24" height="22" viewBox="0 0 24 22"><path d="M7.4 14.6 L12.4 9.6 L17.4 14.6" stroke="#606060" stroke-width="2.5" fill="none"/></svg>
<svg class="abs" style="left:891px;top:406px" width="24" height="22" viewBox="0 0 24 22"><path d="M7.4 7.8 L12.4 12.8 L17.4 7.8" stroke="#606060" stroke-width="2.5" fill="none"/></svg>
</div>
<div class="t" style="top:1280.8px;font-size:17px;line-height:19px;left:1502.3px;letter-spacing:-0.6px;">Spektrum :</div>
<div class="btn" style="left:1623px;top:1275px;width:241px;height:28px"></div>
<div class="t" style="top:1279.7px;font-size:17px;line-height:19px;left:1627.2px;letter-spacing:-0.5px;">RSF1</div>
<svg class="abs" style="left:1841px;top:1283px" width="18" height="12" viewBox="0 0 18 12"><path d="M3.5 3 L9 8.5 L14.5 3" stroke="#444" stroke-width="1.3" fill="none"/></svg>
<div class="t" style="top:1327.8px;font-size:17px;line-height:19px;left:1551px;letter-spacing:-0.6px;">T1 :</div>
<div class="inp" style="left:1623px;top:1322px;width:241px;height:33px"></div>
<div class="t" style="top:1325.6px;font-size:17px;line-height:19px;left:1626.1px;letter-spacing:-0.5px;">0.04</div>
<div class="t" style="top:1372.8px;font-size:17px;line-height:19px;left:1551px;letter-spacing:-0.6px;">T2 :</div>
<div class="inp" style="left:1623px;top:1367px;width:241px;height:33px"></div>
<div class="t" style="top:1370.7px;font-size:17px;line-height:19px;left:1626.1px;">5</div>
<div class="t" style="top:1423px;font-size:17px;line-height:19px;left:1533px;letter-spacing:-0.6px;">Adım</div>
<div class="inp" style="left:1623px;top:1417px;width:241px;height:33px"></div>
<div class="t" style="top:1420.4px;font-size:17px;line-height:19px;left:1626.1px;letter-spacing:-0.5px;">0.005</div>
<div class="t" style="top:1301px;font-size:17px;line-height:19px;left:2006.4px;letter-spacing:-0.6px;">Periyot :</div>
<div class="inp" style="left:2172px;top:1292px;width:203px;height:33px"></div>
<div class="t" style="top:1295.7px;font-size:17px;line-height:19px;left:2176px;">1</div>
<div class="btn" style="left:1982px;top:1406px;width:241px;height:76px"></div>
<div class="t" style="top:1435px;font-size:17px;line-height:19px;left:1982px;width:241px;text-align:center;letter-spacing:-0.6px;">Ölçekle</div>
<div class="btn" style="left:2335px;top:1406px;width:111px;height:33px;border:2px solid #0078d7"></div>
<div class="t" style="top:1413px;font-size:17px;line-height:19px;left:2335px;width:111px;text-align:center;letter-spacing:-0.6px;">Tamam</div>
<div class="btn" style="left:2335px;top:1448px;width:111px;height:33px"></div>
<div class="t" style="top:1455px;font-size:17px;line-height:19px;left:2335px;width:111px;text-align:center;letter-spacing:-0.6px;">İptal</div>
</body></html>
